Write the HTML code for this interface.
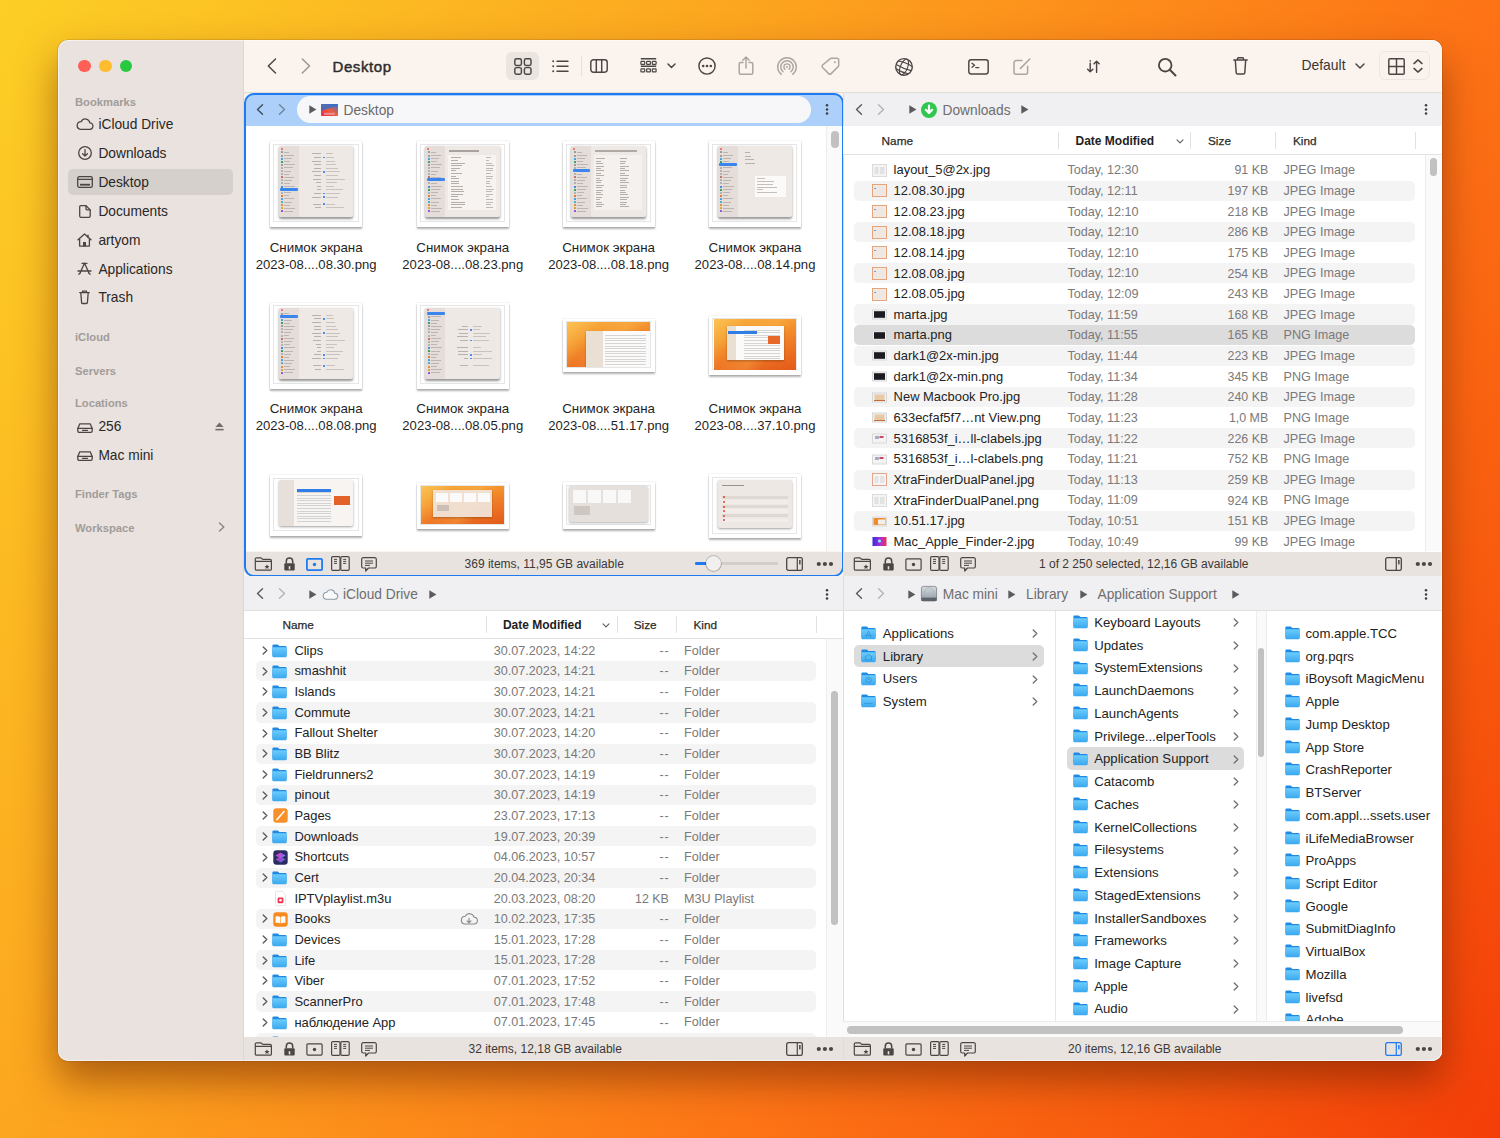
<!DOCTYPE html><html><head><meta charset="utf-8"><style>
html,body{margin:0;padding:0;width:1500px;height:1138px;overflow:hidden}
body{position:relative;font-family:"Liberation Sans", sans-serif;
background:linear-gradient(123deg,#fccf25 0%,#fca61f 33%,#fd7416 66%,#f85a0e 84%,#f43d09 100%);}
.t{position:absolute;line-height:0;white-space:nowrap;}
.r{position:absolute;}
svg{overflow:visible}
</style></head><body>
<div class="r" style="left:58px;top:40px;width:1384px;height:1021px;border-radius:10px;background:#e9e2df;box-shadow:0 20px 38px rgba(95,28,0,0.5),0 0 0 0.5px rgba(0,0,0,0.2);"></div>
<div class="r" style="left:243px;top:40px;width:1px;height:1021px;background:#dcd6d2;"></div>
<div class="r" style="left:244px;top:40px;width:1198px;height:52px;background:#faf3ee;border-top-right-radius:10px;"></div>
<div class="r" style="left:244px;top:92px;width:1198px;height:1px;background:#e2dcd7;"></div>
<div class="r" style="left:78.35px;top:59.75px;width:12.5px;height:12.5px;border-radius:50%;background:#fe5f57;"></div>
<div class="r" style="left:99.05px;top:59.75px;width:12.5px;height:12.5px;border-radius:50%;background:#febc2e;"></div>
<div class="r" style="left:119.75px;top:59.75px;width:12.5px;height:12.5px;border-radius:50%;background:#28c840;"></div>
<div class="t" style="top:101.72px;font-size:11.2px;color:#a19c99;font-weight:700;left:75.00px;">Bookmarks</div>
<div class="t" style="top:337.02px;font-size:11.2px;color:#a19c99;font-weight:700;left:75.00px;">iCloud</div>
<div class="t" style="top:370.52px;font-size:11.2px;color:#a19c99;font-weight:700;left:75.00px;">Servers</div>
<div class="t" style="top:403.42px;font-size:11.2px;color:#a19c99;font-weight:700;left:75.00px;">Locations</div>
<div class="t" style="top:494.32px;font-size:11.2px;color:#a19c99;font-weight:700;left:75.00px;">Finder Tags</div>
<div class="t" style="top:527.52px;font-size:11.2px;color:#a19c99;font-weight:700;left:75.00px;">Workspace</div>
<div class="r" style="left:68px;top:168.6px;width:165px;height:26.6px;background:#d6d0cd;border-radius:5px;"></div>
<div class="t" style="top:125.24px;font-size:13.75px;color:#2a2726;left:98.40px;">iCloud Drive</div>
<div class="t" style="top:154.24px;font-size:13.75px;color:#2a2726;left:98.40px;">Downloads</div>
<div class="t" style="top:183.04px;font-size:13.75px;color:#2a2726;left:98.40px;">Desktop</div>
<div class="t" style="top:212.24px;font-size:13.75px;color:#2a2726;left:98.40px;">Documents</div>
<div class="t" style="top:241.04px;font-size:13.75px;color:#2a2726;left:98.40px;">artyom</div>
<div class="t" style="top:269.64px;font-size:13.75px;color:#2a2726;left:98.40px;">Applications</div>
<div class="t" style="top:298.44px;font-size:13.75px;color:#2a2726;left:98.40px;">Trash</div>
<div class="t" style="top:427.04px;font-size:13.75px;color:#2a2726;left:98.40px;">256</div>
<div class="t" style="top:455.54px;font-size:13.75px;color:#2a2726;left:98.40px;">Mac mini</div>
<svg style="position:absolute;left:76px;top:118px;" width="17" height="12" viewBox="0 0 17 12" fill="none"><path d="M4.2 11.3h9.3a3.2 3.2 0 0 0 .4-6.4A4.6 4.6 0 0 0 5.2 3.6 3.9 3.9 0 0 0 4.2 11.3z" stroke="#4b4644" stroke-width="1.3" stroke-linecap="round" stroke-linejoin="round"/></svg>
<svg style="position:absolute;left:77.5px;top:146px;" width="14" height="14" viewBox="0 0 14 14" fill="none"><circle cx="7" cy="7" r="6.3" stroke="#4b4644" stroke-width="1.3" stroke-linecap="round" stroke-linejoin="round"/><path d="M7 3.6v6.4M4.6 7.7 7 10.1l2.4-2.4" stroke="#4b4644" stroke-width="1.3" stroke-linecap="round" stroke-linejoin="round"/></svg>
<svg style="position:absolute;left:76.5px;top:176px;" width="16" height="12" viewBox="0 0 16 12" fill="none"><rect x="0.7" y="0.7" width="14.6" height="10.6" rx="1.6" stroke="#4b4644" stroke-width="1.3" stroke-linecap="round" stroke-linejoin="round"/><path d="M0.7 3.3h14.6" stroke="#4b4644" stroke-width="1.3" stroke-linecap="round" stroke-linejoin="round"/><rect x="3" y="7.8" width="10" height="1.8" fill="#4b4644"/></svg>
<svg style="position:absolute;left:78.5px;top:205px;" width="12" height="13" viewBox="0 0 12 13" fill="none"><path d="M1.8 0.7h5.2l4.2 4.2v6.2a1.3 1.3 0 0 1-1.3 1.3H1.8A1.3 1.3 0 0 1 .7 11.1V1.9A1.3 1.3 0 0 1 1.8.7z" stroke="#4b4644" stroke-width="1.3" stroke-linecap="round" stroke-linejoin="round"/><path d="M7 0.7v3a1.2 1.2 0 0 0 1.2 1.2h3" stroke="#4b4644" stroke-width="1.3" stroke-linecap="round" stroke-linejoin="round"/></svg>
<svg style="position:absolute;left:77px;top:233px;" width="15" height="14" viewBox="0 0 15 14" fill="none"><path d="M1 6.8 7.5 1l6.5 5.8M2.6 5.6v7.5h9.8V5.6" stroke="#4b4644" stroke-width="1.3" stroke-linecap="round" stroke-linejoin="round"/><rect x="6" y="9" width="3" height="4.4" fill="#4b4644"/><path d="M11 2.2v2.4" stroke="#4b4644" stroke-width="1.3" stroke-linecap="round" stroke-linejoin="round"/></svg>
<svg style="position:absolute;left:77px;top:262px;" width="15" height="13" viewBox="0 0 15 13" fill="none"><path d="M7.5 1.2 2.6 11.8M7.5 1.2l4.9 10.6M1 9h13M5 1.3h5M1.8 12.2 3.4 11M13.2 12.2 11.6 11" stroke="#4b4644" stroke-width="1.3" stroke-linecap="round" stroke-linejoin="round"/></svg>
<svg style="position:absolute;left:79px;top:290px;" width="11" height="14" viewBox="0 0 11 14" fill="none"><path d="M0.7 2.6h9.6M3.5 2.6V1.2h4v1.4M1.8 2.6l.8 10a1 1 0 0 0 1 .9h3.8a1 1 0 0 0 1-.9l.8-10" stroke="#4b4644" stroke-width="1.3" stroke-linecap="round" stroke-linejoin="round"/></svg>
<svg style="position:absolute;left:76.5px;top:422.5px;" width="16" height="10" viewBox="0 0 16 10" fill="none"><path d="M2.8 0.8h10.4l2 4.6v2.6a1.3 1.3 0 0 1-1.3 1.3H2.1A1.3 1.3 0 0 1 .8 8V5.4z" stroke="#4b4644" stroke-width="1.3" stroke-linecap="round" stroke-linejoin="round"/><path d="M.8 5.4h14.4M5.5 7.3h5" stroke="#4b4644" stroke-width="1.3" stroke-linecap="round" stroke-linejoin="round"/></svg>
<svg style="position:absolute;left:76.5px;top:451px;" width="16" height="10" viewBox="0 0 16 10" fill="none"><path d="M2.8 0.8h10.4l2 4.6v2.6a1.3 1.3 0 0 1-1.3 1.3H2.1A1.3 1.3 0 0 1 .8 8V5.4z" stroke="#4b4644" stroke-width="1.3" stroke-linecap="round" stroke-linejoin="round"/><path d="M.8 5.4h14.4M5.5 7.3h5" stroke="#4b4644" stroke-width="1.3" stroke-linecap="round" stroke-linejoin="round"/></svg>
<svg style="position:absolute;left:214.5px;top:421.5px;opacity:.75" width="9" height="9" viewBox="0 0 9 9" fill="none"><path d="M4.5 0.5 8.6 5H0.4z" fill="#4b4644"/><rect x="0.4" y="6.8" width="8.2" height="1.6" fill="#4b4644"/></svg>
<svg style="position:absolute;left:217.5px;top:522px;" width="7" height="10" viewBox="0 0 7 10" fill="none"><path d="M1.5 1 5.8 5 1.5 9" stroke="#8a8583" stroke-width="1.4" stroke-linecap="round" stroke-linejoin="round"/></svg>
<svg style="position:absolute;left:267px;top:58px;" width="10" height="16" viewBox="0 0 10 16" fill="none"><path d="M8.5 1 1.3 8l7.2 7" stroke="#4b4644" stroke-width="1.45" stroke-linecap="round" stroke-linejoin="round"/></svg>
<svg style="position:absolute;left:301px;top:58px;" width="10" height="16" viewBox="0 0 10 16" fill="none"><path d="M1.3 1l7.2 7-7.2 7" stroke="#9f9894" stroke-width="1.6" stroke-linecap="round" stroke-linejoin="round"/></svg>
<div class="t" style="top:67.10px;font-size:15px;color:#2f2b29;left:332.50px;-webkit-text-stroke:.45px #2f2b29;letter-spacing:.6px;">Desktop</div>
<div class="r" style="left:505.7px;top:51.7px;width:33.5px;height:28.8px;background:#ebe5e1;border-radius:6px;"></div>
<svg style="position:absolute;left:513.5px;top:57.5px;" width="18" height="17" viewBox="0 0 18 17" fill="none"><rect x="0.8" y="0.8" width="6.6" height="6.6" rx="1.6" stroke="#4b4644" stroke-width="1.45" stroke-linecap="round" stroke-linejoin="round"/><rect x="10.4" y="0.8" width="6.6" height="6.6" rx="1.6" stroke="#4b4644" stroke-width="1.45" stroke-linecap="round" stroke-linejoin="round"/><rect x="0.8" y="9.6" width="6.6" height="6.6" rx="1.6" stroke="#4b4644" stroke-width="1.45" stroke-linecap="round" stroke-linejoin="round"/><rect x="10.4" y="9.6" width="6.6" height="6.6" rx="1.6" stroke="#4b4644" stroke-width="1.45" stroke-linecap="round" stroke-linejoin="round"/></svg>
<svg style="position:absolute;left:551.5px;top:59.5px;" width="17" height="13" viewBox="0 0 17 13" fill="none"><circle cx="1.2" cy="1.3" r="1" fill="#4b4644"/><circle cx="1.2" cy="6.3" r="1" fill="#4b4644"/><circle cx="1.2" cy="11.3" r="1" fill="#4b4644"/><path d="M5 1.3h11M5 6.3h11M5 11.3h11" stroke="#4b4644" stroke-width="1.45" stroke-linecap="round" stroke-linejoin="round"/></svg>
<div class="r" style="left:581px;top:56px;width:1px;height:20px;background:#e6e0dc;"></div>
<svg style="position:absolute;left:590px;top:59px;" width="18" height="14" viewBox="0 0 18 14" fill="none"><rect x="0.8" y="0.8" width="16.4" height="12.4" rx="2.6" stroke="#4b4644" stroke-width="1.45" stroke-linecap="round" stroke-linejoin="round"/><path d="M6.3 0.8v12.4M11.7 0.8v12.4" stroke="#4b4644" stroke-width="1.45" stroke-linecap="round" stroke-linejoin="round"/></svg>
<svg style="position:absolute;left:639.5px;top:57.5px;" width="17" height="17" viewBox="0 0 17 17" fill="none"><path d="M0.8 0.8h15.4M0.8 8.3h15.4" stroke="#4b4644" stroke-width="1.5"/><rect x="0.9" y="3.3" width="3.8" height="3" rx=".6" stroke="#4b4644" stroke-width="1.2"/><rect x="6.6" y="3.3" width="3.8" height="3" rx=".6" stroke="#4b4644" stroke-width="1.2"/><rect x="12.3" y="3.3" width="3.8" height="3" rx=".6" stroke="#4b4644" stroke-width="1.2"/><rect x="0.9" y="10.8" width="3.8" height="3" rx=".6" stroke="#4b4644" stroke-width="1.2"/><rect x="6.6" y="10.8" width="3.8" height="3" rx=".6" stroke="#4b4644" stroke-width="1.2"/><rect x="12.3" y="10.8" width="3.8" height="3" rx=".6" stroke="#4b4644" stroke-width="1.2"/></svg>
<svg style="position:absolute;left:666.5px;top:63px;" width="9" height="6" viewBox="0 0 9 6" fill="none"><path d="M1 1l3.5 3.6L8 1" stroke="#4b4644" stroke-width="1.45" stroke-linecap="round" stroke-linejoin="round"/></svg>
<svg style="position:absolute;left:698.2px;top:57.3px;" width="18" height="18" viewBox="0 0 18 18" fill="none"><circle cx="9" cy="9" r="8.1" stroke="#4b4644" stroke-width="1.45" stroke-linecap="round" stroke-linejoin="round"/><circle cx="5.2" cy="9" r="1.3" fill="#4b4644"/><circle cx="9" cy="9" r="1.3" fill="#4b4644"/><circle cx="12.8" cy="9" r="1.3" fill="#4b4644"/></svg>
<svg style="position:absolute;left:738px;top:56px;" width="16" height="19" viewBox="0 0 16 19" fill="none"><path d="M5 6.5H2.7a1.5 1.5 0 0 0-1.5 1.5v8.8a1.5 1.5 0 0 0 1.5 1.5h10.6a1.5 1.5 0 0 0 1.5-1.5V8a1.5 1.5 0 0 0-1.5-1.5H11M8 12V1.2M4.8 4.2 8 1l3.2 3.2" stroke="#aba5a1" stroke-width="1.5" stroke-linecap="round" stroke-linejoin="round"/></svg>
<svg style="position:absolute;left:776.5px;top:56.5px;" width="20" height="20" viewBox="0 0 20 20" fill="none"><path d="M4.27 17.33A9.3 9.3 0 1 1 15.73 17.33M6.01 14.75A6.2 6.2 0 1 1 13.99 14.75M7.93 12.3A3.1 3.1 0 1 1 12.07 12.3" stroke="#aba5a1" stroke-width="1.4" stroke-linecap="round"/><circle cx="10" cy="10" r="1" fill="#aba5a1"/></svg>
<svg style="position:absolute;left:820.5px;top:57px;" width="19" height="18" viewBox="0 0 19 18" fill="none"><path d="M10.5 1.2h5.4a1.8 1.8 0 0 1 1.8 1.8v5.4a1.8 1.8 0 0 1-.5 1.2l-7 7a1.8 1.8 0 0 1-2.5 0L1.6 10.5a1.8 1.8 0 0 1 0-2.5l7.7-6.3a1.8 1.8 0 0 1 1.2-.5z" stroke="#aba5a1" stroke-width="1.5" stroke-linecap="round" stroke-linejoin="round"/><circle cx="13.8" cy="5.2" r="1" fill="#aba5a1"/></svg>
<svg style="position:absolute;left:895.3px;top:57.6px;" width="18" height="18" viewBox="0 0 18 18" fill="none"><circle cx="9" cy="8.9" r="8.3" stroke="#4b4644" stroke-width="1.4"/><g transform="rotate(22 9 9)"><ellipse cx="9" cy="9" rx="3.6" ry="8.3" stroke="#4b4644" stroke-width="1.1"/><path d="M1.6 5.6Q9 3.8 16.4 5.6M.9 9.6Q9 11 17.1 9.6M2.4 13.6Q9 15.2 15.6 13.6" stroke="#4b4644" stroke-width="1.1"/></g></svg>
<svg style="position:absolute;left:968px;top:59px;" width="21" height="16" viewBox="0 0 21 16" fill="none"><rect x="0.8" y="0.8" width="19.4" height="14.2" rx="2.4" stroke="#4b4644" stroke-width="1.45" stroke-linecap="round" stroke-linejoin="round"/><path d="M4 4.2l2.6 2-2.6 2M7.8 8.6h3" stroke="#4b4644" stroke-width="1.3" stroke-linecap="round" stroke-linejoin="round"/></svg>
<svg style="position:absolute;left:1013.3px;top:57.5px;" width="18" height="17" viewBox="0 0 18 17" fill="none"><path d="M9 2.6H3a2 2 0 0 0-2 2v9.6a2 2 0 0 0 2 2h9.6a2 2 0 0 0 2-2V8.3M7.5 10.4 16.8 1" stroke="#aba5a1" stroke-width="1.5" stroke-linecap="round" stroke-linejoin="round"/></svg>
<svg style="position:absolute;left:1086.5px;top:59.5px;" width="16" height="13" viewBox="0 0 16 13" fill="none"><path d="M3.2 3.2v8.6M.6 9.2l2.6 2.6 2.6-2.6M9.6 11.6V1.2M7 3.8 9.6 1.2l2.6 2.6" stroke="#4b4644" stroke-width="1.45" stroke-linecap="round" stroke-linejoin="round"/><circle cx="3.2" cy=".9" r=".8" fill="#4b4644"/><circle cx="9.6" cy="12.4" r=".7" fill="#4b4644"/></svg>
<svg style="position:absolute;left:1158px;top:57.7px;" width="19" height="19" viewBox="0 0 19 19" fill="none"><circle cx="7.2" cy="7.2" r="6.3" stroke="#4b4644" stroke-width="1.8"/><path d="M11.8 11.8l5.7 5.7" stroke="#4b4644" stroke-width="2" stroke-linecap="round"/></svg>
<svg style="position:absolute;left:1233.3px;top:57.3px;" width="15" height="18" viewBox="0 0 15 18" fill="none"><path d="M.8 3h13.4M4.5 3V1.6a.8.8 0 0 1 .8-.8h4.4a.8.8 0 0 1 .8.8V3M2.3 3l.9 12.6a1.4 1.4 0 0 0 1.4 1.3h5.8a1.4 1.4 0 0 0 1.4-1.3L12.7 3" stroke="#4b4644" stroke-width="1.45" stroke-linecap="round" stroke-linejoin="round"/></svg>
<div class="t" style="top:65.48px;font-size:13.9px;color:#3a3634;left:1301.50px;">Default</div>
<svg style="position:absolute;left:1354.8px;top:62.5px;" width="10" height="6" viewBox="0 0 10 6" fill="none"><path d="M1 1l4 4 4-4" stroke="#4b4644" stroke-width="1.45" stroke-linecap="round" stroke-linejoin="round"/></svg>
<div class="r" style="left:1378.6px;top:51.3px;width:51px;height:29px;border:1px solid #ede7e3;border-radius:6px;box-sizing:border-box;background:#f9f2ed;"></div>
<svg style="position:absolute;left:1388.3px;top:57.6px;" width="17" height="17" viewBox="0 0 17 17" fill="none"><rect x="0.8" y="0.8" width="15.4" height="15.4" rx="1" stroke="#4b4644" stroke-width="1.45" stroke-linecap="round" stroke-linejoin="round"/><path d="M8.5 .8v15.4M.8 8.5h15.4" stroke="#4b4644" stroke-width="1.45" stroke-linecap="round" stroke-linejoin="round"/></svg>
<svg style="position:absolute;left:1412.7px;top:59.3px;" width="10" height="14" viewBox="0 0 10 14" fill="none"><path d="M1 4.6 5 .9l4 3.7M1 9.4l4 3.7 4-3.7" stroke="#4b4644" stroke-width="1.45" stroke-linecap="round" stroke-linejoin="round"/></svg>
<div class="r" style="left:244px;top:93px;width:599px;height:483px;background:#faf3ee;"></div>
<div class="r" style="left:245px;top:110px;width:598px;height:441px;background:#fff;"></div>
<div class="r" style="left:843px;top:93px;width:599px;height:483px;background:#fff;"></div>
<div class="r" style="left:244px;top:576px;width:599px;height:485px;background:#fff;"></div>
<div class="r" style="left:843px;top:576px;width:599px;height:485px;background:#fff;border-bottom-right-radius:10px;"></div>
<div class="r" style="left:245px;top:93px;width:598px;height:33px;background:#acd0f9;border-top-left-radius:9px;border-top-right-radius:9px;"></div>
<svg style="position:absolute;left:256px;top:104px;" width="8" height="11" viewBox="0 0 8 11" fill="none"><path d="M6.5 .8 1.5 5.5l5 4.7" stroke="#3f4b58" stroke-width="1.4" stroke-linecap="round" stroke-linejoin="round"/></svg>
<svg style="position:absolute;left:278px;top:104px;" width="8" height="11" viewBox="0 0 8 11" fill="none"><path d="M1.5 .8l5 4.7-5 4.7" stroke="#6f8499" stroke-width="1.4" stroke-linecap="round" stroke-linejoin="round"/></svg>
<div class="r" style="left:296.5px;top:96.4px;width:514.5px;height:26.6px;background:#f7f7f9;border-radius:13.3px;"></div>
<svg style="position:absolute;left:309.0px;top:105.4px;" width="8" height="9" viewBox="0 0 8 9" fill="none"><path d="M0.3 0.2 7.4 4.5 .3 8.8z" fill="#5b5b5d"/></svg>
<svg style="position:absolute;left:320.5px;top:104px;" width="17" height="12" viewBox="0 0 17 12" fill="none"><defs><linearGradient id="dw" x1="0" y1="1" x2="1" y2="0"><stop offset="0" stop-color="#e8264a"/><stop offset=".5" stop-color="#ef5b39"/><stop offset="1" stop-color="#2f78d8"/></linearGradient></defs><rect x="0" y="0" width="17" height="12" rx="1" fill="url(#dw)"/><path d="M0 7 17 1.5V0H0z" fill="#2d6fce" opacity=".8"/><rect x="3" y="8.8" width="11" height="2" fill="#e8a0b0" opacity=".8"/></svg>
<div class="t" style="top:111.44px;font-size:13.75px;color:#6b6969;left:343.50px;">Desktop</div>
<svg style="position:absolute;left:824px;top:103px;" width="6" height="14" viewBox="0 0 6 14" fill="none"><circle cx="3" cy="2.20" r="1.25" fill="#3d3d3f"/><circle cx="3" cy="6.40" r="1.25" fill="#3d3d3f"/><circle cx="3" cy="10.60" r="1.25" fill="#3d3d3f"/></svg>
<div class="r" style="left:826px;top:126px;width:17px;height:425px;background:#fafafa;border-left:1px solid #ececec;box-sizing:border-box;"></div>
<div class="r" style="left:831px;top:130.5px;width:7.7px;height:17.2px;background:#c1c1c1;border-radius:4px;"></div>
<div class="r" style="left:270.2px;top:141.2px;width:92.0px;height:85.7px;background:#fff;box-shadow:0 1.5px 1.8px rgba(0,0,0,.3),0 0 0 .6px rgba(0,0,0,.07);">
<div class="r" style="left:3.2px;top:2.6px;right:3.6px;bottom:4.4px;border:1px solid #e6e6e6;"></div>
<div class="r" style="left:8.5px;top:5.3px;width:74.5px;height:70.7px;background:#efe9e5;border-radius:2px;box-shadow:0 1.2px 2.5px rgba(0,0,0,.42);overflow:hidden;"><div class="r" style="left:0;top:0;width:27%;height:100%;background:#e4ddd9;"></div><div class="r" style="left:2px;top:1.5px;width:2px;height:2px;border-radius:50%;background:#f05a50;"></div><div class="r" style="left:2.5px;top:5.0px;width:2px;height:2px;border-radius:.5px;background:#9a9a9a;"></div><div class="r" style="left:5.5px;top:5.5px;width:5px;height:1px;background:#bdb5b0;"></div><div class="r" style="left:2.5px;top:8.1px;width:2px;height:2px;border-radius:.5px;background:#9a9a9a;"></div><div class="r" style="left:5.5px;top:8.6px;width:10px;height:1px;background:#bdb5b0;"></div><div class="r" style="left:2.5px;top:11.2px;width:2px;height:2px;border-radius:.5px;background:#3aa3e0;"></div><div class="r" style="left:5.5px;top:11.7px;width:8px;height:1px;background:#bdb5b0;"></div><div class="r" style="left:2.5px;top:14.3px;width:2px;height:2px;border-radius:.5px;background:#2aa36a;"></div><div class="r" style="left:5.5px;top:14.8px;width:6px;height:1px;background:#bdb5b0;"></div><div class="r" style="left:2.5px;top:17.4px;width:2px;height:2px;border-radius:.5px;background:#9a9a9a;"></div><div class="r" style="left:5.5px;top:17.9px;width:11px;height:1px;background:#bdb5b0;"></div><div class="r" style="left:2.5px;top:20.5px;width:2px;height:2px;border-radius:.5px;background:#b0b0b0;"></div><div class="r" style="left:5.5px;top:21.0px;width:9px;height:1px;background:#bdb5b0;"></div><div class="r" style="left:2.5px;top:23.6px;width:2px;height:2px;border-radius:.5px;background:#b0b0b0;"></div><div class="r" style="left:5.5px;top:24.1px;width:7px;height:1px;background:#bdb5b0;"></div><div class="r" style="left:2.5px;top:26.7px;width:2px;height:2px;border-radius:.5px;background:#b0b0b0;"></div><div class="r" style="left:5.5px;top:27.2px;width:5px;height:1px;background:#bdb5b0;"></div><div class="r" style="left:2.5px;top:29.8px;width:2px;height:2px;border-radius:.5px;background:#c07060;"></div><div class="r" style="left:5.5px;top:30.3px;width:10px;height:1px;background:#bdb5b0;"></div><div class="r" style="left:2.5px;top:32.9px;width:2px;height:2px;border-radius:.5px;background:#b0b0b0;"></div><div class="r" style="left:5.5px;top:33.4px;width:8px;height:1px;background:#bdb5b0;"></div><div class="r" style="left:2.5px;top:36.0px;width:2px;height:2px;border-radius:.5px;background:#b0b0b0;"></div><div class="r" style="left:5.5px;top:36.5px;width:6px;height:1px;background:#bdb5b0;"></div><div class="r" style="left:2.5px;top:39.1px;width:2px;height:2px;border-radius:.5px;background:#3a8ae0;"></div><div class="r" style="left:5.5px;top:39.6px;width:11px;height:1px;background:#bdb5b0;"></div><div class="r" style="left:2.5px;top:45.3px;width:2px;height:2px;border-radius:.5px;background:#b0b0b0;"></div><div class="r" style="left:5.5px;top:45.8px;width:7px;height:1px;background:#bdb5b0;"></div><div class="r" style="left:2.5px;top:48.4px;width:2px;height:2px;border-radius:.5px;background:#e07a30;"></div><div class="r" style="left:5.5px;top:48.9px;width:5px;height:1px;background:#bdb5b0;"></div><div class="r" style="left:2.5px;top:51.5px;width:2px;height:2px;border-radius:.5px;background:#40a0e0;"></div><div class="r" style="left:5.5px;top:52.0px;width:10px;height:1px;background:#bdb5b0;"></div><div class="r" style="left:2.5px;top:54.6px;width:2px;height:2px;border-radius:.5px;background:#40b0d0;"></div><div class="r" style="left:5.5px;top:55.1px;width:8px;height:1px;background:#bdb5b0;"></div><div class="r" style="left:2.5px;top:57.7px;width:2px;height:2px;border-radius:.5px;background:#e09030;"></div><div class="r" style="left:5.5px;top:58.2px;width:6px;height:1px;background:#bdb5b0;"></div><div class="r" style="left:2.5px;top:60.8px;width:2px;height:2px;border-radius:.5px;background:#e0a030;"></div><div class="r" style="left:5.5px;top:61.3px;width:11px;height:1px;background:#bdb5b0;"></div><div class="r" style="left:2.5px;top:63.9px;width:2px;height:2px;border-radius:.5px;background:#9050e0;"></div><div class="r" style="left:5.5px;top:64.4px;width:9px;height:1px;background:#bdb5b0;"></div><div class="r" style="left:1.5px;top:41.2px;width:17.9px;height:3px;border-radius:1px;background:#3a86ee;"></div><div class="r" style="left:32.9px;top:7.0px;width:9.6px;height:1px;background:#b8b1ac;"></div><div class="r" style="left:47.6px;top:7.0px;width:6.8px;height:1px;background:#c9c2bd;"></div><div class="r" style="left:35.7px;top:10.6px;width:6.9px;height:1px;background:#b8b1ac;"></div><div class="r" style="left:44.6px;top:10.1px;width:1.8px;height:1.8px;background:#4a8ff0;"></div><div class="r" style="left:47.6px;top:10.6px;width:8.2px;height:1px;background:#c9c2bd;"></div><div class="r" style="left:33.3px;top:14.2px;width:9.2px;height:1px;background:#b8b1ac;"></div><div class="r" style="left:47.6px;top:14.2px;width:8.8px;height:1px;background:#c9c2bd;"></div><div class="r" style="left:35.7px;top:17.8px;width:6.8px;height:1px;background:#b8b1ac;"></div><div class="r" style="left:47.6px;top:17.8px;width:9.8px;height:1px;background:#c9c2bd;"></div><div class="r" style="left:35.4px;top:21.4px;width:7.1px;height:1px;background:#b8b1ac;"></div><div class="r" style="left:47.6px;top:21.4px;width:11.3px;height:1px;background:#c9c2bd;"></div><div class="r" style="left:33.5px;top:25.0px;width:9.1px;height:1px;background:#b8b1ac;"></div><div class="r" style="left:44.6px;top:24.5px;width:1.8px;height:1.8px;background:#4a8ff0;"></div><div class="r" style="left:47.6px;top:25.0px;width:14.1px;height:1px;background:#c9c2bd;"></div><div class="r" style="left:35.8px;top:28.6px;width:6.7px;height:1px;background:#b8b1ac;"></div><div class="r" style="left:47.6px;top:28.6px;width:11.9px;height:1px;background:#c9c2bd;"></div><div class="r" style="left:34.1px;top:32.2px;width:8.4px;height:1px;background:#b8b1ac;"></div><div class="r" style="left:47.6px;top:32.2px;width:18.4px;height:1px;background:#c9c2bd;"></div><div class="r" style="left:37.0px;top:35.8px;width:5.6px;height:1px;background:#b8b1ac;"></div><div class="r" style="left:47.6px;top:35.8px;width:10.4px;height:1px;background:#c9c2bd;"></div><div class="r" style="left:38.5px;top:39.4px;width:4.1px;height:1px;background:#b8b1ac;"></div><div class="r" style="left:47.6px;top:39.4px;width:8.0px;height:1px;background:#c9c2bd;"></div><div class="r" style="left:38.1px;top:43.0px;width:4.4px;height:1px;background:#b8b1ac;"></div><div class="r" style="left:47.6px;top:43.0px;width:16.9px;height:1px;background:#c9c2bd;"></div><div class="r" style="left:35.2px;top:46.6px;width:7.4px;height:1px;background:#b8b1ac;"></div><div class="r" style="left:44.6px;top:46.1px;width:1.8px;height:1.8px;background:#4a8ff0;"></div><div class="r" style="left:47.6px;top:46.6px;width:13.5px;height:1px;background:#c9c2bd;"></div><div class="r" style="left:32.9px;top:50.2px;width:9.7px;height:1px;background:#b8b1ac;"></div><div class="r" style="left:44.6px;top:49.7px;width:1.8px;height:1.8px;background:#4a8ff0;"></div><div class="r" style="left:47.6px;top:50.2px;width:11.4px;height:1px;background:#c9c2bd;"></div><div class="r" style="left:34.2px;top:57.4px;width:8.4px;height:1px;background:#b8b1ac;"></div><div class="r" style="left:44.6px;top:56.9px;width:1.8px;height:1.8px;background:#4a8ff0;"></div><div class="r" style="left:47.6px;top:57.4px;width:9.0px;height:1px;background:#c9c2bd;"></div><div class="r" style="left:36.6px;top:61.0px;width:6.0px;height:1px;background:#b8b1ac;"></div><div class="r" style="left:47.6px;top:61.0px;width:17.5px;height:1px;background:#c9c2bd;"></div></div>
</div>
<div class="r" style="left:416.8px;top:141.2px;width:92.0px;height:85.7px;background:#fff;box-shadow:0 1.5px 1.8px rgba(0,0,0,.3),0 0 0 .6px rgba(0,0,0,.07);">
<div class="r" style="left:3.2px;top:2.6px;right:3.6px;bottom:4.4px;border:1px solid #e6e6e6;"></div>
<div class="r" style="left:8.5px;top:5.3px;width:74.5px;height:70.7px;background:#efe9e5;border-radius:2px;box-shadow:0 1.2px 2.5px rgba(0,0,0,.42);overflow:hidden;"><div class="r" style="left:0;top:0;width:27%;height:100%;background:#e4ddd9;"></div><div class="r" style="left:2px;top:1.5px;width:2px;height:2px;border-radius:50%;background:#f05a50;"></div><div class="r" style="left:2.5px;top:5.0px;width:2px;height:2px;border-radius:.5px;background:#9a9a9a;"></div><div class="r" style="left:5.5px;top:5.5px;width:5px;height:1px;background:#bdb5b0;"></div><div class="r" style="left:2.5px;top:8.1px;width:2px;height:2px;border-radius:.5px;background:#9a9a9a;"></div><div class="r" style="left:5.5px;top:8.6px;width:10px;height:1px;background:#bdb5b0;"></div><div class="r" style="left:2.5px;top:11.2px;width:2px;height:2px;border-radius:.5px;background:#3aa3e0;"></div><div class="r" style="left:5.5px;top:11.7px;width:8px;height:1px;background:#bdb5b0;"></div><div class="r" style="left:2.5px;top:14.3px;width:2px;height:2px;border-radius:.5px;background:#2aa36a;"></div><div class="r" style="left:5.5px;top:14.8px;width:6px;height:1px;background:#bdb5b0;"></div><div class="r" style="left:2.5px;top:17.4px;width:2px;height:2px;border-radius:.5px;background:#9a9a9a;"></div><div class="r" style="left:5.5px;top:17.9px;width:11px;height:1px;background:#bdb5b0;"></div><div class="r" style="left:2.5px;top:20.5px;width:2px;height:2px;border-radius:.5px;background:#b0b0b0;"></div><div class="r" style="left:5.5px;top:21.0px;width:9px;height:1px;background:#bdb5b0;"></div><div class="r" style="left:2.5px;top:23.6px;width:2px;height:2px;border-radius:.5px;background:#b0b0b0;"></div><div class="r" style="left:5.5px;top:24.1px;width:7px;height:1px;background:#bdb5b0;"></div><div class="r" style="left:2.5px;top:26.7px;width:2px;height:2px;border-radius:.5px;background:#b0b0b0;"></div><div class="r" style="left:5.5px;top:27.2px;width:5px;height:1px;background:#bdb5b0;"></div><div class="r" style="left:2.5px;top:29.8px;width:2px;height:2px;border-radius:.5px;background:#c07060;"></div><div class="r" style="left:5.5px;top:30.3px;width:10px;height:1px;background:#bdb5b0;"></div><div class="r" style="left:2.5px;top:36.0px;width:2px;height:2px;border-radius:.5px;background:#b0b0b0;"></div><div class="r" style="left:5.5px;top:36.5px;width:6px;height:1px;background:#bdb5b0;"></div><div class="r" style="left:2.5px;top:39.1px;width:2px;height:2px;border-radius:.5px;background:#3a8ae0;"></div><div class="r" style="left:5.5px;top:39.6px;width:11px;height:1px;background:#bdb5b0;"></div><div class="r" style="left:2.5px;top:42.2px;width:2px;height:2px;border-radius:.5px;background:#30a050;"></div><div class="r" style="left:5.5px;top:42.7px;width:9px;height:1px;background:#bdb5b0;"></div><div class="r" style="left:2.5px;top:45.3px;width:2px;height:2px;border-radius:.5px;background:#b0b0b0;"></div><div class="r" style="left:5.5px;top:45.8px;width:7px;height:1px;background:#bdb5b0;"></div><div class="r" style="left:2.5px;top:48.4px;width:2px;height:2px;border-radius:.5px;background:#e07a30;"></div><div class="r" style="left:5.5px;top:48.9px;width:5px;height:1px;background:#bdb5b0;"></div><div class="r" style="left:2.5px;top:51.5px;width:2px;height:2px;border-radius:.5px;background:#40a0e0;"></div><div class="r" style="left:5.5px;top:52.0px;width:10px;height:1px;background:#bdb5b0;"></div><div class="r" style="left:2.5px;top:54.6px;width:2px;height:2px;border-radius:.5px;background:#40b0d0;"></div><div class="r" style="left:5.5px;top:55.1px;width:8px;height:1px;background:#bdb5b0;"></div><div class="r" style="left:2.5px;top:57.7px;width:2px;height:2px;border-radius:.5px;background:#e09030;"></div><div class="r" style="left:5.5px;top:58.2px;width:6px;height:1px;background:#bdb5b0;"></div><div class="r" style="left:2.5px;top:60.8px;width:2px;height:2px;border-radius:.5px;background:#e0a030;"></div><div class="r" style="left:5.5px;top:61.3px;width:11px;height:1px;background:#bdb5b0;"></div><div class="r" style="left:2.5px;top:63.9px;width:2px;height:2px;border-radius:.5px;background:#9050e0;"></div><div class="r" style="left:5.5px;top:64.4px;width:9px;height:1px;background:#bdb5b0;"></div><div class="r" style="left:1.5px;top:31.9px;width:17.9px;height:3px;border-radius:1px;background:#3a86ee;"></div><div class="r" style="left:23.6px;top:4px;width:29.9px;height:1.4px;background:#a9a29e;"></div><div class="r" style="left:22.6px;top:9px;width:47.9px;height:54.7px;background:#f6f3f1;border-radius:1px;"></div><div class="r" style="left:25.6px;top:11.0px;width:10.4px;height:.9px;background:#b5aea9;"></div><div class="r" style="left:60.5px;top:11.0px;width:5.5px;height:.9px;background:#c0b9b4;"></div><div class="r" style="left:25.6px;top:13.6px;width:7.3px;height:.9px;background:#b5aea9;"></div><div class="r" style="left:60.5px;top:13.6px;width:3.7px;height:.9px;background:#c0b9b4;"></div><div class="r" style="left:25.6px;top:16.2px;width:14.0px;height:.9px;background:#b5aea9;"></div><div class="r" style="left:60.5px;top:16.2px;width:6.6px;height:.9px;background:#c0b9b4;"></div><div class="r" style="left:25.6px;top:18.8px;width:11.5px;height:.9px;background:#b5aea9;"></div><div class="r" style="left:60.5px;top:18.8px;width:7.9px;height:.9px;background:#c0b9b4;"></div><div class="r" style="left:25.6px;top:21.4px;width:8.7px;height:.9px;background:#b5aea9;"></div><div class="r" style="left:60.5px;top:21.4px;width:7.5px;height:.9px;background:#c0b9b4;"></div><div class="r" style="left:25.6px;top:24.0px;width:5.4px;height:.9px;background:#b5aea9;"></div><div class="r" style="left:60.5px;top:24.0px;width:7.2px;height:.9px;background:#c0b9b4;"></div><div class="r" style="left:25.6px;top:26.6px;width:11.2px;height:.9px;background:#b5aea9;"></div><div class="r" style="left:60.5px;top:26.6px;width:5.7px;height:.9px;background:#c0b9b4;"></div><div class="r" style="left:25.6px;top:29.2px;width:5.6px;height:.9px;background:#b5aea9;"></div><div class="r" style="left:60.5px;top:29.2px;width:7.0px;height:.9px;background:#c0b9b4;"></div><div class="r" style="left:25.6px;top:31.8px;width:7.9px;height:.9px;background:#b5aea9;"></div><div class="r" style="left:60.5px;top:31.8px;width:6.2px;height:.9px;background:#c0b9b4;"></div><div class="r" style="left:25.6px;top:34.4px;width:8.4px;height:.9px;background:#b5aea9;"></div><div class="r" style="left:60.5px;top:34.4px;width:3.9px;height:.9px;background:#c0b9b4;"></div><div class="r" style="left:25.6px;top:37.0px;width:7.8px;height:.9px;background:#b5aea9;"></div><div class="r" style="left:60.5px;top:37.0px;width:4.7px;height:.9px;background:#c0b9b4;"></div><div class="r" style="left:25.6px;top:39.6px;width:11.7px;height:.9px;background:#b5aea9;"></div><div class="r" style="left:60.5px;top:39.6px;width:6.3px;height:.9px;background:#c0b9b4;"></div><div class="r" style="left:25.6px;top:42.2px;width:12.6px;height:.9px;background:#b5aea9;"></div><div class="r" style="left:60.5px;top:42.2px;width:7.8px;height:.9px;background:#c0b9b4;"></div><div class="r" style="left:25.6px;top:44.8px;width:12.7px;height:.9px;background:#b5aea9;"></div><div class="r" style="left:60.5px;top:44.8px;width:5.8px;height:.9px;background:#c0b9b4;"></div><div class="r" style="left:25.6px;top:47.4px;width:12.2px;height:.9px;background:#b5aea9;"></div><div class="r" style="left:60.5px;top:47.4px;width:7.0px;height:.9px;background:#c0b9b4;"></div><div class="r" style="left:25.6px;top:50.0px;width:7.4px;height:.9px;background:#b5aea9;"></div><div class="r" style="left:60.5px;top:50.0px;width:3.6px;height:.9px;background:#c0b9b4;"></div><div class="r" style="left:25.6px;top:52.6px;width:8.0px;height:.9px;background:#b5aea9;"></div><div class="r" style="left:60.5px;top:52.6px;width:6.9px;height:.9px;background:#c0b9b4;"></div><div class="r" style="left:25.6px;top:55.2px;width:13.8px;height:.9px;background:#b5aea9;"></div><div class="r" style="left:60.5px;top:55.2px;width:6.8px;height:.9px;background:#c0b9b4;"></div><div class="r" style="left:25.6px;top:57.8px;width:13.9px;height:.9px;background:#b5aea9;"></div><div class="r" style="left:60.5px;top:57.8px;width:4.9px;height:.9px;background:#c0b9b4;"></div><div class="r" style="left:25.6px;top:60.4px;width:10.8px;height:.9px;background:#b5aea9;"></div><div class="r" style="left:60.5px;top:60.4px;width:7.4px;height:.9px;background:#c0b9b4;"></div></div>
</div>
<div class="r" style="left:562.6px;top:141.2px;width:92.0px;height:85.7px;background:#fff;box-shadow:0 1.5px 1.8px rgba(0,0,0,.3),0 0 0 .6px rgba(0,0,0,.07);">
<div class="r" style="left:3.2px;top:2.6px;right:3.6px;bottom:4.4px;border:1px solid #e6e6e6;"></div>
<div class="r" style="left:8.5px;top:5.3px;width:74.5px;height:70.7px;background:#efe9e5;border-radius:2px;box-shadow:0 1.2px 2.5px rgba(0,0,0,.42);overflow:hidden;"><div class="r" style="left:0;top:0;width:27%;height:100%;background:#e4ddd9;"></div><div class="r" style="left:2px;top:1.5px;width:2px;height:2px;border-radius:50%;background:#f05a50;"></div><div class="r" style="left:2.5px;top:5.0px;width:2px;height:2px;border-radius:.5px;background:#9a9a9a;"></div><div class="r" style="left:5.5px;top:5.5px;width:5px;height:1px;background:#bdb5b0;"></div><div class="r" style="left:2.5px;top:8.1px;width:2px;height:2px;border-radius:.5px;background:#9a9a9a;"></div><div class="r" style="left:5.5px;top:8.6px;width:10px;height:1px;background:#bdb5b0;"></div><div class="r" style="left:2.5px;top:11.2px;width:2px;height:2px;border-radius:.5px;background:#3aa3e0;"></div><div class="r" style="left:5.5px;top:11.7px;width:8px;height:1px;background:#bdb5b0;"></div><div class="r" style="left:2.5px;top:14.3px;width:2px;height:2px;border-radius:.5px;background:#2aa36a;"></div><div class="r" style="left:5.5px;top:14.8px;width:6px;height:1px;background:#bdb5b0;"></div><div class="r" style="left:2.5px;top:17.4px;width:2px;height:2px;border-radius:.5px;background:#9a9a9a;"></div><div class="r" style="left:5.5px;top:17.9px;width:11px;height:1px;background:#bdb5b0;"></div><div class="r" style="left:2.5px;top:20.5px;width:2px;height:2px;border-radius:.5px;background:#b0b0b0;"></div><div class="r" style="left:5.5px;top:21.0px;width:9px;height:1px;background:#bdb5b0;"></div><div class="r" style="left:2.5px;top:26.7px;width:2px;height:2px;border-radius:.5px;background:#b0b0b0;"></div><div class="r" style="left:5.5px;top:27.2px;width:5px;height:1px;background:#bdb5b0;"></div><div class="r" style="left:2.5px;top:29.8px;width:2px;height:2px;border-radius:.5px;background:#c07060;"></div><div class="r" style="left:5.5px;top:30.3px;width:10px;height:1px;background:#bdb5b0;"></div><div class="r" style="left:2.5px;top:32.9px;width:2px;height:2px;border-radius:.5px;background:#b0b0b0;"></div><div class="r" style="left:5.5px;top:33.4px;width:8px;height:1px;background:#bdb5b0;"></div><div class="r" style="left:2.5px;top:36.0px;width:2px;height:2px;border-radius:.5px;background:#b0b0b0;"></div><div class="r" style="left:5.5px;top:36.5px;width:6px;height:1px;background:#bdb5b0;"></div><div class="r" style="left:2.5px;top:39.1px;width:2px;height:2px;border-radius:.5px;background:#3a8ae0;"></div><div class="r" style="left:5.5px;top:39.6px;width:11px;height:1px;background:#bdb5b0;"></div><div class="r" style="left:2.5px;top:42.2px;width:2px;height:2px;border-radius:.5px;background:#30a050;"></div><div class="r" style="left:5.5px;top:42.7px;width:9px;height:1px;background:#bdb5b0;"></div><div class="r" style="left:2.5px;top:45.3px;width:2px;height:2px;border-radius:.5px;background:#b0b0b0;"></div><div class="r" style="left:5.5px;top:45.8px;width:7px;height:1px;background:#bdb5b0;"></div><div class="r" style="left:2.5px;top:48.4px;width:2px;height:2px;border-radius:.5px;background:#e07a30;"></div><div class="r" style="left:5.5px;top:48.9px;width:5px;height:1px;background:#bdb5b0;"></div><div class="r" style="left:2.5px;top:51.5px;width:2px;height:2px;border-radius:.5px;background:#40a0e0;"></div><div class="r" style="left:5.5px;top:52.0px;width:10px;height:1px;background:#bdb5b0;"></div><div class="r" style="left:2.5px;top:54.6px;width:2px;height:2px;border-radius:.5px;background:#40b0d0;"></div><div class="r" style="left:5.5px;top:55.1px;width:8px;height:1px;background:#bdb5b0;"></div><div class="r" style="left:2.5px;top:57.7px;width:2px;height:2px;border-radius:.5px;background:#e09030;"></div><div class="r" style="left:5.5px;top:58.2px;width:6px;height:1px;background:#bdb5b0;"></div><div class="r" style="left:2.5px;top:60.8px;width:2px;height:2px;border-radius:.5px;background:#e0a030;"></div><div class="r" style="left:5.5px;top:61.3px;width:11px;height:1px;background:#bdb5b0;"></div><div class="r" style="left:2.5px;top:63.9px;width:2px;height:2px;border-radius:.5px;background:#9050e0;"></div><div class="r" style="left:5.5px;top:64.4px;width:9px;height:1px;background:#bdb5b0;"></div><div class="r" style="left:1.5px;top:22.6px;width:17.9px;height:3px;border-radius:1px;background:#3a86ee;"></div><div class="r" style="left:23.6px;top:4px;width:42.4px;height:1.4px;background:#b0a9a4;"></div><div class="r" style="left:22.6px;top:9px;width:47.9px;height:54.7px;background:#f4f1ef;"></div><div class="r" style="left:24.6px;top:12.0px;width:9.0px;height:.9px;background:#b5aea9;"></div><div class="r" style="left:49.0px;top:12.0px;width:7.4px;height:.9px;background:#b5aea9;"></div><div class="r" style="left:24.6px;top:14.4px;width:5.2px;height:.9px;background:#b5aea9;"></div><div class="r" style="left:49.0px;top:14.4px;width:6.2px;height:.9px;background:#b5aea9;"></div><div class="r" style="left:24.6px;top:16.8px;width:7.8px;height:.9px;background:#b5aea9;"></div><div class="r" style="left:49.0px;top:16.8px;width:5.0px;height:.9px;background:#b5aea9;"></div><div class="r" style="left:24.6px;top:19.2px;width:8.2px;height:.9px;background:#b5aea9;"></div><div class="r" style="left:49.0px;top:19.2px;width:8.7px;height:.9px;background:#b5aea9;"></div><div class="r" style="left:24.6px;top:21.6px;width:5.8px;height:.9px;background:#b5aea9;"></div><div class="r" style="left:49.0px;top:21.6px;width:5.3px;height:.9px;background:#b5aea9;"></div><div class="r" style="left:24.6px;top:24.0px;width:8.7px;height:.9px;background:#b5aea9;"></div><div class="r" style="left:49.0px;top:24.0px;width:8.8px;height:.9px;background:#b5aea9;"></div><div class="r" style="left:24.6px;top:26.4px;width:5.2px;height:.9px;background:#b5aea9;"></div><div class="r" style="left:49.0px;top:26.4px;width:4.6px;height:.9px;background:#b5aea9;"></div><div class="r" style="left:24.6px;top:28.8px;width:7.9px;height:.9px;background:#b5aea9;"></div><div class="r" style="left:49.0px;top:28.8px;width:8.8px;height:.9px;background:#b5aea9;"></div><div class="r" style="left:24.6px;top:31.2px;width:4.7px;height:.9px;background:#b5aea9;"></div><div class="r" style="left:49.0px;top:31.2px;width:7.5px;height:.9px;background:#b5aea9;"></div><div class="r" style="left:24.6px;top:33.6px;width:6.7px;height:.9px;background:#b5aea9;"></div><div class="r" style="left:49.0px;top:33.6px;width:6.4px;height:.9px;background:#b5aea9;"></div><div class="r" style="left:24.6px;top:36.0px;width:5.0px;height:.9px;background:#b5aea9;"></div><div class="r" style="left:49.0px;top:36.0px;width:8.7px;height:.9px;background:#b5aea9;"></div><div class="r" style="left:24.6px;top:38.4px;width:8.3px;height:.9px;background:#b5aea9;"></div><div class="r" style="left:49.0px;top:38.4px;width:6.6px;height:.9px;background:#b5aea9;"></div><div class="r" style="left:24.6px;top:40.8px;width:6.1px;height:.9px;background:#b5aea9;"></div><div class="r" style="left:49.0px;top:40.8px;width:6.6px;height:.9px;background:#b5aea9;"></div><div class="r" style="left:24.6px;top:43.2px;width:7.1px;height:.9px;background:#b5aea9;"></div><div class="r" style="left:49.0px;top:43.2px;width:4.7px;height:.9px;background:#b5aea9;"></div><div class="r" style="left:24.6px;top:45.6px;width:5.5px;height:.9px;background:#b5aea9;"></div><div class="r" style="left:49.0px;top:45.6px;width:6.4px;height:.9px;background:#b5aea9;"></div><div class="r" style="left:24.6px;top:48.0px;width:7.6px;height:.9px;background:#b5aea9;"></div><div class="r" style="left:49.0px;top:48.0px;width:7.5px;height:.9px;background:#b5aea9;"></div><div class="r" style="left:24.6px;top:50.4px;width:6.3px;height:.9px;background:#b5aea9;"></div><div class="r" style="left:49.0px;top:50.4px;width:8.8px;height:.9px;background:#b5aea9;"></div><div class="r" style="left:24.6px;top:52.8px;width:4.5px;height:.9px;background:#b5aea9;"></div><div class="r" style="left:49.0px;top:52.8px;width:6.9px;height:.9px;background:#b5aea9;"></div><div class="r" style="left:24.6px;top:55.2px;width:6.5px;height:.9px;background:#b5aea9;"></div><div class="r" style="left:49.0px;top:55.2px;width:6.8px;height:.9px;background:#b5aea9;"></div><div class="r" style="left:24.6px;top:57.6px;width:8.2px;height:.9px;background:#b5aea9;"></div><div class="r" style="left:49.0px;top:57.6px;width:5.6px;height:.9px;background:#b5aea9;"></div><div class="r" style="left:24.6px;top:60.0px;width:6.0px;height:.9px;background:#b5aea9;"></div><div class="r" style="left:49.0px;top:60.0px;width:9.1px;height:.9px;background:#b5aea9;"></div></div>
</div>
<div class="r" style="left:709.0px;top:141.2px;width:92.0px;height:85.7px;background:#fff;box-shadow:0 1.5px 1.8px rgba(0,0,0,.3),0 0 0 .6px rgba(0,0,0,.07);">
<div class="r" style="left:3.2px;top:2.6px;right:3.6px;bottom:4.4px;border:1px solid #e6e6e6;"></div>
<div class="r" style="left:8.5px;top:5.3px;width:74.5px;height:70.7px;background:#efe9e5;border-radius:2px;box-shadow:0 1.2px 2.5px rgba(0,0,0,.42);overflow:hidden;"><div class="r" style="left:0;top:0;width:27%;height:100%;background:#e4ddd9;"></div><div class="r" style="left:2px;top:1.5px;width:2px;height:2px;border-radius:50%;background:#f05a50;"></div><div class="r" style="left:2.5px;top:5.0px;width:2px;height:2px;border-radius:.5px;background:#9a9a9a;"></div><div class="r" style="left:5.5px;top:5.5px;width:5px;height:1px;background:#bdb5b0;"></div><div class="r" style="left:2.5px;top:8.1px;width:2px;height:2px;border-radius:.5px;background:#9a9a9a;"></div><div class="r" style="left:5.5px;top:8.6px;width:10px;height:1px;background:#bdb5b0;"></div><div class="r" style="left:2.5px;top:11.2px;width:2px;height:2px;border-radius:.5px;background:#3aa3e0;"></div><div class="r" style="left:5.5px;top:11.7px;width:8px;height:1px;background:#bdb5b0;"></div><div class="r" style="left:2.5px;top:14.3px;width:2px;height:2px;border-radius:.5px;background:#2aa36a;"></div><div class="r" style="left:5.5px;top:14.8px;width:6px;height:1px;background:#bdb5b0;"></div><div class="r" style="left:2.5px;top:20.5px;width:2px;height:2px;border-radius:.5px;background:#b0b0b0;"></div><div class="r" style="left:5.5px;top:21.0px;width:9px;height:1px;background:#bdb5b0;"></div><div class="r" style="left:2.5px;top:23.6px;width:2px;height:2px;border-radius:.5px;background:#b0b0b0;"></div><div class="r" style="left:5.5px;top:24.1px;width:7px;height:1px;background:#bdb5b0;"></div><div class="r" style="left:2.5px;top:26.7px;width:2px;height:2px;border-radius:.5px;background:#b0b0b0;"></div><div class="r" style="left:5.5px;top:27.2px;width:5px;height:1px;background:#bdb5b0;"></div><div class="r" style="left:2.5px;top:29.8px;width:2px;height:2px;border-radius:.5px;background:#c07060;"></div><div class="r" style="left:5.5px;top:30.3px;width:10px;height:1px;background:#bdb5b0;"></div><div class="r" style="left:2.5px;top:32.9px;width:2px;height:2px;border-radius:.5px;background:#b0b0b0;"></div><div class="r" style="left:5.5px;top:33.4px;width:8px;height:1px;background:#bdb5b0;"></div><div class="r" style="left:2.5px;top:36.0px;width:2px;height:2px;border-radius:.5px;background:#b0b0b0;"></div><div class="r" style="left:5.5px;top:36.5px;width:6px;height:1px;background:#bdb5b0;"></div><div class="r" style="left:2.5px;top:39.1px;width:2px;height:2px;border-radius:.5px;background:#3a8ae0;"></div><div class="r" style="left:5.5px;top:39.6px;width:11px;height:1px;background:#bdb5b0;"></div><div class="r" style="left:2.5px;top:42.2px;width:2px;height:2px;border-radius:.5px;background:#30a050;"></div><div class="r" style="left:5.5px;top:42.7px;width:9px;height:1px;background:#bdb5b0;"></div><div class="r" style="left:2.5px;top:45.3px;width:2px;height:2px;border-radius:.5px;background:#b0b0b0;"></div><div class="r" style="left:5.5px;top:45.8px;width:7px;height:1px;background:#bdb5b0;"></div><div class="r" style="left:2.5px;top:48.4px;width:2px;height:2px;border-radius:.5px;background:#e07a30;"></div><div class="r" style="left:5.5px;top:48.9px;width:5px;height:1px;background:#bdb5b0;"></div><div class="r" style="left:2.5px;top:51.5px;width:2px;height:2px;border-radius:.5px;background:#40a0e0;"></div><div class="r" style="left:5.5px;top:52.0px;width:10px;height:1px;background:#bdb5b0;"></div><div class="r" style="left:2.5px;top:54.6px;width:2px;height:2px;border-radius:.5px;background:#40b0d0;"></div><div class="r" style="left:5.5px;top:55.1px;width:8px;height:1px;background:#bdb5b0;"></div><div class="r" style="left:2.5px;top:57.7px;width:2px;height:2px;border-radius:.5px;background:#e09030;"></div><div class="r" style="left:5.5px;top:58.2px;width:6px;height:1px;background:#bdb5b0;"></div><div class="r" style="left:2.5px;top:60.8px;width:2px;height:2px;border-radius:.5px;background:#e0a030;"></div><div class="r" style="left:5.5px;top:61.3px;width:11px;height:1px;background:#bdb5b0;"></div><div class="r" style="left:2.5px;top:63.9px;width:2px;height:2px;border-radius:.5px;background:#9050e0;"></div><div class="r" style="left:5.5px;top:64.4px;width:9px;height:1px;background:#bdb5b0;"></div><div class="r" style="left:1.5px;top:16.4px;width:17.9px;height:3px;border-radius:1px;background:#3a86ee;"></div><div class="r" style="left:27.6px;top:6.0px;width:5.0px;height:1px;background:#b8b1ac;"></div><div class="r" style="left:27.6px;top:9.4px;width:5.9px;height:1px;background:#b8b1ac;"></div><div class="r" style="left:27.6px;top:12.8px;width:8.9px;height:1px;background:#b8b1ac;"></div><div class="r" style="left:27.6px;top:16.2px;width:9.7px;height:1px;background:#b8b1ac;"></div><div class="r" style="left:37.6px;top:29.7px;width:30.9px;height:21.2px;background:#fbfaf9;"></div><div class="r" style="left:39.6px;top:31.8px;width:7.5px;height:.9px;background:#c5bfba;"></div><div class="r" style="left:39.6px;top:34.6px;width:17.3px;height:.9px;background:#c5bfba;"></div><div class="r" style="left:39.6px;top:37.4px;width:16.0px;height:.9px;background:#c5bfba;"></div><div class="r" style="left:39.6px;top:40.2px;width:19.6px;height:.9px;background:#c5bfba;"></div><div class="r" style="left:39.6px;top:43.0px;width:5.6px;height:.9px;background:#c5bfba;"></div><div class="r" style="left:39.6px;top:45.8px;width:19.7px;height:.9px;background:#c5bfba;"></div></div>
</div>
<div class="r" style="left:270.2px;top:302.6px;width:92.0px;height:86.0px;background:#fff;box-shadow:0 1.5px 1.8px rgba(0,0,0,.3),0 0 0 .6px rgba(0,0,0,.07);">
<div class="r" style="left:3.2px;top:2.6px;right:3.6px;bottom:4.4px;border:1px solid #e6e6e6;"></div>
<div class="r" style="left:8.5px;top:5.3px;width:74.5px;height:71.0px;background:#efe9e5;border-radius:2px;box-shadow:0 1.2px 2.5px rgba(0,0,0,.42);overflow:hidden;"><div class="r" style="left:0;top:0;width:27%;height:100%;background:#e4ddd9;"></div><div class="r" style="left:2px;top:1.5px;width:2px;height:2px;border-radius:50%;background:#f05a50;"></div><div class="r" style="left:2.5px;top:5.0px;width:2px;height:2px;border-radius:.5px;background:#9a9a9a;"></div><div class="r" style="left:5.5px;top:5.5px;width:5px;height:1px;background:#bdb5b0;"></div><div class="r" style="left:2.5px;top:11.2px;width:2px;height:2px;border-radius:.5px;background:#3aa3e0;"></div><div class="r" style="left:5.5px;top:11.7px;width:8px;height:1px;background:#bdb5b0;"></div><div class="r" style="left:2.5px;top:14.3px;width:2px;height:2px;border-radius:.5px;background:#2aa36a;"></div><div class="r" style="left:5.5px;top:14.8px;width:6px;height:1px;background:#bdb5b0;"></div><div class="r" style="left:2.5px;top:17.4px;width:2px;height:2px;border-radius:.5px;background:#9a9a9a;"></div><div class="r" style="left:5.5px;top:17.9px;width:11px;height:1px;background:#bdb5b0;"></div><div class="r" style="left:2.5px;top:20.5px;width:2px;height:2px;border-radius:.5px;background:#b0b0b0;"></div><div class="r" style="left:5.5px;top:21.0px;width:9px;height:1px;background:#bdb5b0;"></div><div class="r" style="left:2.5px;top:23.6px;width:2px;height:2px;border-radius:.5px;background:#b0b0b0;"></div><div class="r" style="left:5.5px;top:24.1px;width:7px;height:1px;background:#bdb5b0;"></div><div class="r" style="left:2.5px;top:26.7px;width:2px;height:2px;border-radius:.5px;background:#b0b0b0;"></div><div class="r" style="left:5.5px;top:27.2px;width:5px;height:1px;background:#bdb5b0;"></div><div class="r" style="left:2.5px;top:29.8px;width:2px;height:2px;border-radius:.5px;background:#c07060;"></div><div class="r" style="left:5.5px;top:30.3px;width:10px;height:1px;background:#bdb5b0;"></div><div class="r" style="left:2.5px;top:32.9px;width:2px;height:2px;border-radius:.5px;background:#b0b0b0;"></div><div class="r" style="left:5.5px;top:33.4px;width:8px;height:1px;background:#bdb5b0;"></div><div class="r" style="left:2.5px;top:36.0px;width:2px;height:2px;border-radius:.5px;background:#b0b0b0;"></div><div class="r" style="left:5.5px;top:36.5px;width:6px;height:1px;background:#bdb5b0;"></div><div class="r" style="left:2.5px;top:39.1px;width:2px;height:2px;border-radius:.5px;background:#3a8ae0;"></div><div class="r" style="left:5.5px;top:39.6px;width:11px;height:1px;background:#bdb5b0;"></div><div class="r" style="left:2.5px;top:42.2px;width:2px;height:2px;border-radius:.5px;background:#30a050;"></div><div class="r" style="left:5.5px;top:42.7px;width:9px;height:1px;background:#bdb5b0;"></div><div class="r" style="left:2.5px;top:45.3px;width:2px;height:2px;border-radius:.5px;background:#b0b0b0;"></div><div class="r" style="left:5.5px;top:45.8px;width:7px;height:1px;background:#bdb5b0;"></div><div class="r" style="left:2.5px;top:48.4px;width:2px;height:2px;border-radius:.5px;background:#e07a30;"></div><div class="r" style="left:5.5px;top:48.9px;width:5px;height:1px;background:#bdb5b0;"></div><div class="r" style="left:2.5px;top:51.5px;width:2px;height:2px;border-radius:.5px;background:#40a0e0;"></div><div class="r" style="left:5.5px;top:52.0px;width:10px;height:1px;background:#bdb5b0;"></div><div class="r" style="left:2.5px;top:54.6px;width:2px;height:2px;border-radius:.5px;background:#40b0d0;"></div><div class="r" style="left:5.5px;top:55.1px;width:8px;height:1px;background:#bdb5b0;"></div><div class="r" style="left:2.5px;top:57.7px;width:2px;height:2px;border-radius:.5px;background:#e09030;"></div><div class="r" style="left:5.5px;top:58.2px;width:6px;height:1px;background:#bdb5b0;"></div><div class="r" style="left:2.5px;top:60.8px;width:2px;height:2px;border-radius:.5px;background:#e0a030;"></div><div class="r" style="left:5.5px;top:61.3px;width:11px;height:1px;background:#bdb5b0;"></div><div class="r" style="left:2.5px;top:63.9px;width:2px;height:2px;border-radius:.5px;background:#9050e0;"></div><div class="r" style="left:5.5px;top:64.4px;width:9px;height:1px;background:#bdb5b0;"></div><div class="r" style="left:1.5px;top:7.1px;width:17.9px;height:3px;border-radius:1px;background:#3a86ee;"></div><div class="r" style="left:32.9px;top:7.0px;width:9.6px;height:1px;background:#b8b1ac;"></div><div class="r" style="left:47.6px;top:7.0px;width:6.8px;height:1px;background:#c9c2bd;"></div><div class="r" style="left:35.7px;top:10.6px;width:6.9px;height:1px;background:#b8b1ac;"></div><div class="r" style="left:44.6px;top:10.1px;width:1.8px;height:1.8px;background:#4a8ff0;"></div><div class="r" style="left:47.6px;top:10.6px;width:8.2px;height:1px;background:#c9c2bd;"></div><div class="r" style="left:33.3px;top:14.2px;width:9.2px;height:1px;background:#b8b1ac;"></div><div class="r" style="left:47.6px;top:14.2px;width:8.8px;height:1px;background:#c9c2bd;"></div><div class="r" style="left:35.7px;top:17.8px;width:6.8px;height:1px;background:#b8b1ac;"></div><div class="r" style="left:47.6px;top:17.8px;width:9.8px;height:1px;background:#c9c2bd;"></div><div class="r" style="left:35.4px;top:21.4px;width:7.1px;height:1px;background:#b8b1ac;"></div><div class="r" style="left:47.6px;top:21.4px;width:11.3px;height:1px;background:#c9c2bd;"></div><div class="r" style="left:33.5px;top:25.0px;width:9.1px;height:1px;background:#b8b1ac;"></div><div class="r" style="left:44.6px;top:24.5px;width:1.8px;height:1.8px;background:#4a8ff0;"></div><div class="r" style="left:47.6px;top:25.0px;width:14.1px;height:1px;background:#c9c2bd;"></div><div class="r" style="left:35.8px;top:28.6px;width:6.7px;height:1px;background:#b8b1ac;"></div><div class="r" style="left:47.6px;top:28.6px;width:11.9px;height:1px;background:#c9c2bd;"></div><div class="r" style="left:34.1px;top:32.2px;width:8.4px;height:1px;background:#b8b1ac;"></div><div class="r" style="left:47.6px;top:32.2px;width:18.4px;height:1px;background:#c9c2bd;"></div><div class="r" style="left:37.0px;top:35.8px;width:5.6px;height:1px;background:#b8b1ac;"></div><div class="r" style="left:47.6px;top:35.8px;width:10.4px;height:1px;background:#c9c2bd;"></div><div class="r" style="left:38.5px;top:39.4px;width:4.1px;height:1px;background:#b8b1ac;"></div><div class="r" style="left:47.6px;top:39.4px;width:8.0px;height:1px;background:#c9c2bd;"></div><div class="r" style="left:38.1px;top:43.0px;width:4.4px;height:1px;background:#b8b1ac;"></div><div class="r" style="left:47.6px;top:43.0px;width:16.9px;height:1px;background:#c9c2bd;"></div><div class="r" style="left:35.2px;top:46.6px;width:7.4px;height:1px;background:#b8b1ac;"></div><div class="r" style="left:44.6px;top:46.1px;width:1.8px;height:1.8px;background:#4a8ff0;"></div><div class="r" style="left:47.6px;top:46.6px;width:13.5px;height:1px;background:#c9c2bd;"></div><div class="r" style="left:32.9px;top:50.2px;width:9.7px;height:1px;background:#b8b1ac;"></div><div class="r" style="left:44.6px;top:49.7px;width:1.8px;height:1.8px;background:#4a8ff0;"></div><div class="r" style="left:47.6px;top:50.2px;width:11.4px;height:1px;background:#c9c2bd;"></div><div class="r" style="left:34.2px;top:57.4px;width:8.4px;height:1px;background:#b8b1ac;"></div><div class="r" style="left:44.6px;top:56.9px;width:1.8px;height:1.8px;background:#4a8ff0;"></div><div class="r" style="left:47.6px;top:57.4px;width:9.0px;height:1px;background:#c9c2bd;"></div><div class="r" style="left:36.6px;top:61.0px;width:6.0px;height:1px;background:#b8b1ac;"></div><div class="r" style="left:47.6px;top:61.0px;width:17.5px;height:1px;background:#c9c2bd;"></div></div>
</div>
<div class="r" style="left:416.8px;top:302.6px;width:92.0px;height:86.0px;background:#fff;box-shadow:0 1.5px 1.8px rgba(0,0,0,.3),0 0 0 .6px rgba(0,0,0,.07);">
<div class="r" style="left:3.2px;top:2.6px;right:3.6px;bottom:4.4px;border:1px solid #e6e6e6;"></div>
<div class="r" style="left:8.5px;top:5.3px;width:74.5px;height:71.0px;background:#efe9e5;border-radius:2px;box-shadow:0 1.2px 2.5px rgba(0,0,0,.42);overflow:hidden;"><div class="r" style="left:0;top:0;width:27%;height:100%;background:#e4ddd9;"></div><div class="r" style="left:2px;top:1.5px;width:2px;height:2px;border-radius:50%;background:#f05a50;"></div><div class="r" style="left:2.5px;top:8.1px;width:2px;height:2px;border-radius:.5px;background:#9a9a9a;"></div><div class="r" style="left:5.5px;top:8.6px;width:10px;height:1px;background:#bdb5b0;"></div><div class="r" style="left:2.5px;top:11.2px;width:2px;height:2px;border-radius:.5px;background:#3aa3e0;"></div><div class="r" style="left:5.5px;top:11.7px;width:8px;height:1px;background:#bdb5b0;"></div><div class="r" style="left:2.5px;top:14.3px;width:2px;height:2px;border-radius:.5px;background:#2aa36a;"></div><div class="r" style="left:5.5px;top:14.8px;width:6px;height:1px;background:#bdb5b0;"></div><div class="r" style="left:2.5px;top:17.4px;width:2px;height:2px;border-radius:.5px;background:#9a9a9a;"></div><div class="r" style="left:5.5px;top:17.9px;width:11px;height:1px;background:#bdb5b0;"></div><div class="r" style="left:2.5px;top:20.5px;width:2px;height:2px;border-radius:.5px;background:#b0b0b0;"></div><div class="r" style="left:5.5px;top:21.0px;width:9px;height:1px;background:#bdb5b0;"></div><div class="r" style="left:2.5px;top:23.6px;width:2px;height:2px;border-radius:.5px;background:#b0b0b0;"></div><div class="r" style="left:5.5px;top:24.1px;width:7px;height:1px;background:#bdb5b0;"></div><div class="r" style="left:2.5px;top:26.7px;width:2px;height:2px;border-radius:.5px;background:#b0b0b0;"></div><div class="r" style="left:5.5px;top:27.2px;width:5px;height:1px;background:#bdb5b0;"></div><div class="r" style="left:2.5px;top:29.8px;width:2px;height:2px;border-radius:.5px;background:#c07060;"></div><div class="r" style="left:5.5px;top:30.3px;width:10px;height:1px;background:#bdb5b0;"></div><div class="r" style="left:2.5px;top:32.9px;width:2px;height:2px;border-radius:.5px;background:#b0b0b0;"></div><div class="r" style="left:5.5px;top:33.4px;width:8px;height:1px;background:#bdb5b0;"></div><div class="r" style="left:2.5px;top:36.0px;width:2px;height:2px;border-radius:.5px;background:#b0b0b0;"></div><div class="r" style="left:5.5px;top:36.5px;width:6px;height:1px;background:#bdb5b0;"></div><div class="r" style="left:2.5px;top:39.1px;width:2px;height:2px;border-radius:.5px;background:#3a8ae0;"></div><div class="r" style="left:5.5px;top:39.6px;width:11px;height:1px;background:#bdb5b0;"></div><div class="r" style="left:2.5px;top:42.2px;width:2px;height:2px;border-radius:.5px;background:#30a050;"></div><div class="r" style="left:5.5px;top:42.7px;width:9px;height:1px;background:#bdb5b0;"></div><div class="r" style="left:2.5px;top:45.3px;width:2px;height:2px;border-radius:.5px;background:#b0b0b0;"></div><div class="r" style="left:5.5px;top:45.8px;width:7px;height:1px;background:#bdb5b0;"></div><div class="r" style="left:2.5px;top:48.4px;width:2px;height:2px;border-radius:.5px;background:#e07a30;"></div><div class="r" style="left:5.5px;top:48.9px;width:5px;height:1px;background:#bdb5b0;"></div><div class="r" style="left:2.5px;top:51.5px;width:2px;height:2px;border-radius:.5px;background:#40a0e0;"></div><div class="r" style="left:5.5px;top:52.0px;width:10px;height:1px;background:#bdb5b0;"></div><div class="r" style="left:2.5px;top:54.6px;width:2px;height:2px;border-radius:.5px;background:#40b0d0;"></div><div class="r" style="left:5.5px;top:55.1px;width:8px;height:1px;background:#bdb5b0;"></div><div class="r" style="left:2.5px;top:57.7px;width:2px;height:2px;border-radius:.5px;background:#e09030;"></div><div class="r" style="left:5.5px;top:58.2px;width:6px;height:1px;background:#bdb5b0;"></div><div class="r" style="left:2.5px;top:60.8px;width:2px;height:2px;border-radius:.5px;background:#e0a030;"></div><div class="r" style="left:5.5px;top:61.3px;width:11px;height:1px;background:#bdb5b0;"></div><div class="r" style="left:2.5px;top:63.9px;width:2px;height:2px;border-radius:.5px;background:#9050e0;"></div><div class="r" style="left:5.5px;top:64.4px;width:9px;height:1px;background:#bdb5b0;"></div><div class="r" style="left:1.5px;top:4.0px;width:17.9px;height:3px;border-radius:1px;background:#3a86ee;"></div><div class="r" style="left:36.7px;top:17.8px;width:5.8px;height:1px;background:#b8b1ac;"></div><div class="r" style="left:47.6px;top:17.8px;width:9.2px;height:1px;background:#c9c2bd;"></div><div class="r" style="left:32.5px;top:21.4px;width:10.1px;height:1px;background:#b8b1ac;"></div><div class="r" style="left:44.6px;top:20.9px;width:1.8px;height:1.8px;background:#4a8ff0;"></div><div class="r" style="left:47.6px;top:21.4px;width:7.0px;height:1px;background:#c9c2bd;"></div><div class="r" style="left:33.7px;top:25.0px;width:8.8px;height:1px;background:#b8b1ac;"></div><div class="r" style="left:47.6px;top:25.0px;width:16.7px;height:1px;background:#c9c2bd;"></div><div class="r" style="left:31.9px;top:28.6px;width:10.7px;height:1px;background:#b8b1ac;"></div><div class="r" style="left:47.6px;top:28.6px;width:13.4px;height:1px;background:#c9c2bd;"></div><div class="r" style="left:34.5px;top:32.2px;width:8.1px;height:1px;background:#b8b1ac;"></div><div class="r" style="left:44.6px;top:31.7px;width:1.8px;height:1.8px;background:#4a8ff0;"></div><div class="r" style="left:47.6px;top:32.2px;width:16.0px;height:1px;background:#c9c2bd;"></div><div class="r" style="left:32.0px;top:39.4px;width:10.5px;height:1px;background:#b8b1ac;"></div><div class="r" style="left:47.6px;top:39.4px;width:8.4px;height:1px;background:#c9c2bd;"></div><div class="r" style="left:32.4px;top:43.0px;width:10.2px;height:1px;background:#b8b1ac;"></div><div class="r" style="left:47.6px;top:43.0px;width:18.9px;height:1px;background:#c9c2bd;"></div><div class="r" style="left:32.6px;top:46.6px;width:10.0px;height:1px;background:#b8b1ac;"></div><div class="r" style="left:44.6px;top:46.1px;width:1.8px;height:1.8px;background:#4a8ff0;"></div><div class="r" style="left:47.6px;top:46.6px;width:9.2px;height:1px;background:#c9c2bd;"></div><div class="r" style="left:38.3px;top:50.2px;width:4.2px;height:1px;background:#b8b1ac;"></div><div class="r" style="left:44.6px;top:49.7px;width:1.8px;height:1.8px;background:#4a8ff0;"></div><div class="r" style="left:47.6px;top:50.2px;width:18.8px;height:1px;background:#c9c2bd;"></div><div class="r" style="left:34.3px;top:57.4px;width:8.2px;height:1px;background:#b8b1ac;"></div><div class="r" style="left:47.6px;top:57.4px;width:15.8px;height:1px;background:#c9c2bd;"></div></div>
</div>
<div class="r" style="left:562.6px;top:318.6px;width:92.0px;height:53.6px;background:#fff;box-shadow:0 1.5px 1.8px rgba(0,0,0,.3),0 0 0 .6px rgba(0,0,0,.07);">
<div class="r" style="left:3.2px;top:2.6px;right:3.6px;bottom:4.4px;border:1px solid #e6e6e6;"></div>
<div class="r" style="left:4.5px;top:3.0px;width:82.5px;height:45.6px;background:linear-gradient(165deg,#f9b040 0%,#f59a30 30%,#f08028 55%,#ea6a20 80%,#e25a1a 100%);overflow:hidden;"><div class="r" style="left:0;top:0;width:100%;height:100%;background:linear-gradient(125deg,rgba(255,230,120,.35) 0%,rgba(255,230,120,0) 30%,rgba(255,200,100,.25) 55%,rgba(255,200,100,0) 70%);"></div><div class="r" style="left:19.0px;top:9.6px;width:63.5px;height:36.0px;background:#fbfaf9;box-shadow:0 1px 2px rgba(0,0,0,.28);overflow:hidden;"><div class="r" style="left:0;top:0;width:27%;height:100%;background:#e9dfd2;"></div><div class="r" style="left:30%;top:4.0px;width:64%;height:.8px;background:#d5d5d5;"></div><div class="r" style="left:30%;top:6.6px;width:64%;height:.8px;background:#d5d5d5;"></div><div class="r" style="left:30%;top:9.2px;width:64%;height:.8px;background:#d5d5d5;"></div><div class="r" style="left:30%;top:11.8px;width:64%;height:.8px;background:#d5d5d5;"></div><div class="r" style="left:30%;top:14.4px;width:64%;height:.8px;background:#d5d5d5;"></div><div class="r" style="left:30%;top:17.0px;width:64%;height:.8px;background:#d5d5d5;"></div><div class="r" style="left:30%;top:19.6px;width:64%;height:.8px;background:#d5d5d5;"></div><div class="r" style="left:30%;top:22.2px;width:64%;height:.8px;background:#d5d5d5;"></div><div class="r" style="left:30%;top:24.8px;width:64%;height:.8px;background:#d5d5d5;"></div><div class="r" style="left:30%;top:27.4px;width:64%;height:.8px;background:#d5d5d5;"></div><div class="r" style="left:30%;top:30.0px;width:64%;height:.8px;background:#d5d5d5;"></div><div class="r" style="left:30%;top:32.6px;width:64%;height:.8px;background:#d5d5d5;"></div></div></div>
</div>
<div class="r" style="left:709.0px;top:315.5px;width:92.0px;height:59.2px;background:#fff;box-shadow:0 1.5px 1.8px rgba(0,0,0,.3),0 0 0 .6px rgba(0,0,0,.07);">
<div class="r" style="left:3.2px;top:2.6px;right:3.6px;bottom:4.4px;border:1px solid #e6e6e6;"></div>
<div class="r" style="left:4.5px;top:3.0px;width:82.5px;height:51.2px;background:linear-gradient(165deg,#f9b040 0%,#f59a30 30%,#f08028 55%,#ea6a20 80%,#e25a1a 100%);overflow:hidden;"><div class="r" style="left:0;top:0;width:100%;height:100%;background:linear-gradient(125deg,rgba(255,230,120,.35) 0%,rgba(255,230,120,0) 30%,rgba(255,200,100,.25) 55%,rgba(255,200,100,0) 70%);"></div><div class="r" style="left:13.2px;top:7.2px;width:56.9px;height:34.3px;background:#fbfaf9;box-shadow:0 1px 2px rgba(0,0,0,.28);overflow:hidden;"><div class="r" style="left:0;top:0;width:16%;height:100%;background:#e9dfd2;"></div><div class="r" style="left:30%;top:4.0px;width:64%;height:.8px;background:#d5d5d5;"></div><div class="r" style="left:30%;top:6.6px;width:64%;height:.8px;background:#d5d5d5;"></div><div class="r" style="left:30%;top:9.2px;width:64%;height:.8px;background:#d5d5d5;"></div><div class="r" style="left:30%;top:11.8px;width:64%;height:.8px;background:#d5d5d5;"></div><div class="r" style="left:30%;top:14.4px;width:64%;height:.8px;background:#d5d5d5;"></div><div class="r" style="left:30%;top:17.0px;width:64%;height:.8px;background:#d5d5d5;"></div><div class="r" style="left:30%;top:19.6px;width:64%;height:.8px;background:#d5d5d5;"></div><div class="r" style="left:30%;top:22.2px;width:64%;height:.8px;background:#d5d5d5;"></div><div class="r" style="left:30%;top:24.8px;width:64%;height:.8px;background:#d5d5d5;"></div><div class="r" style="left:30%;top:27.4px;width:64%;height:.8px;background:#d5d5d5;"></div><div class="r" style="left:30%;top:30.0px;width:64%;height:.8px;background:#d5d5d5;"></div><div class="r" style="left:30%;top:32.6px;width:64%;height:.8px;background:#d5d5d5;"></div><div class="r" style="left:72%;top:30%;width:22%;height:22%;background:#e8682a;"></div><div class="r" style="left:3%;top:16%;width:50%;height:3px;background:#2f7de6;"></div></div></div>
</div>
<div class="r" style="left:270.2px;top:475.1px;width:92.0px;height:60.7px;background:#fff;box-shadow:0 1.5px 1.8px rgba(0,0,0,.3),0 0 0 .6px rgba(0,0,0,.07);">
<div class="r" style="left:3.2px;top:2.6px;right:3.6px;bottom:4.4px;border:1px solid #e6e6e6;"></div>
<div class="r" style="left:8.5px;top:5.3px;width:74.5px;height:45.7px;background:#f7f4f2;border-radius:2px;box-shadow:0 1px 2.5px rgba(0,0,0,.38);overflow:hidden;"><div class="r" style="left:0;top:0;width:20%;height:100%;background:#e7dfd9;"></div><div class="r" style="left:24%;top:18%;width:46%;height:3px;background:#2f7de6;"></div><div class="r" style="left:24%;top:12.0px;width:46%;height:.8px;background:#d2d2d2;"></div><div class="r" style="left:24%;top:14.6px;width:46%;height:.8px;background:#d2d2d2;"></div><div class="r" style="left:24%;top:17.2px;width:46%;height:.8px;background:#d2d2d2;"></div><div class="r" style="left:24%;top:19.8px;width:46%;height:.8px;background:#d2d2d2;"></div><div class="r" style="left:24%;top:22.4px;width:46%;height:.8px;background:#d2d2d2;"></div><div class="r" style="left:24%;top:25.0px;width:46%;height:.8px;background:#d2d2d2;"></div><div class="r" style="left:24%;top:27.6px;width:46%;height:.8px;background:#d2d2d2;"></div><div class="r" style="left:24%;top:30.2px;width:46%;height:.8px;background:#d2d2d2;"></div><div class="r" style="left:24%;top:32.8px;width:46%;height:.8px;background:#d2d2d2;"></div><div class="r" style="left:24%;top:35.4px;width:46%;height:.8px;background:#d2d2d2;"></div><div class="r" style="left:24%;top:38.0px;width:46%;height:.8px;background:#d2d2d2;"></div><div class="r" style="left:24%;top:40.6px;width:46%;height:.8px;background:#d2d2d2;"></div><div class="r" style="left:74%;top:34%;width:22%;height:20%;background:#e2622a;"></div></div>
</div>
<div class="r" style="left:416.8px;top:482.9px;width:92.0px;height:46.4px;background:#fff;box-shadow:0 1.5px 1.8px rgba(0,0,0,.3),0 0 0 .6px rgba(0,0,0,.07);">
<div class="r" style="left:3.2px;top:2.6px;right:3.6px;bottom:4.4px;border:1px solid #e6e6e6;"></div>
<div class="r" style="left:4.5px;top:3.0px;width:82.5px;height:38.4px;background:linear-gradient(165deg,#f9b040 0%,#f59a30 30%,#f08028 55%,#ea6a20 80%,#e25a1a 100%);overflow:hidden;"><div class="r" style="left:0;top:0;width:100%;height:100%;background:linear-gradient(125deg,rgba(255,230,120,.35) 0%,rgba(255,230,120,0) 30%,rgba(255,200,100,.25) 55%,rgba(255,200,100,0) 70%);"></div><div class="r" style="left:11.6px;top:4.6px;width:59.4px;height:26.1px;background:rgba(240,228,220,.93);box-shadow:0 1px 2px rgba(0,0,0,.25);"><div class="r" style="left:3px;top:3px;width:12px;height:9px;background:#fafafa;"></div><div class="r" style="left:17px;top:3px;width:12px;height:9px;background:#fafafa;"></div><div class="r" style="left:31px;top:3px;width:12px;height:9px;background:#fafafa;"></div><div class="r" style="left:45px;top:3px;width:12px;height:9px;background:#fafafa;"></div><div class="r" style="left:4px;top:15px;width:12px;height:6px;background:#cbbfb5;"></div></div></div>
</div>
<div class="r" style="left:562.6px;top:482.0px;width:92.0px;height:47.3px;background:#fff;box-shadow:0 1.5px 1.8px rgba(0,0,0,.3),0 0 0 .6px rgba(0,0,0,.07);">
<div class="r" style="left:3.2px;top:2.6px;right:3.6px;bottom:4.4px;border:1px solid #e6e6e6;"></div>
<div class="r" style="left:6.5px;top:4.3px;width:78.5px;height:35.3px;background:#e6e0dc;border-radius:2px;box-shadow:0 1px 2.5px rgba(0,0,0,.3);overflow:hidden;"><div class="r" style="left:4px;top:4px;width:13px;height:13px;background:#f8f8f8;"></div><div class="r" style="left:19px;top:4px;width:13px;height:13px;background:#f8f8f8;"></div><div class="r" style="left:34px;top:4px;width:13px;height:13px;background:#f8f8f8;"></div><div class="r" style="left:49px;top:4px;width:13px;height:13px;background:#f8f8f8;"></div><div class="r" style="left:5px;top:20px;width:16px;height:9px;background:#cdc6c1;"></div></div>
</div>
<div class="r" style="left:709.0px;top:474.4px;width:92.0px;height:63.8px;background:#fff;box-shadow:0 1.5px 1.8px rgba(0,0,0,.3),0 0 0 .6px rgba(0,0,0,.07);">
<div class="r" style="left:3.2px;top:2.6px;right:3.6px;bottom:4.4px;border:1px solid #e6e6e6;"></div>
<div class="r" style="left:8.5px;top:5.3px;width:74.5px;height:48.8px;background:#eee8e4;border-radius:2px;box-shadow:0 1px 2.5px rgba(0,0,0,.38);overflow:hidden;"><div class="r" style="left:6%;top:16.0px;width:88%;height:3.4px;background:#e0d8d2;"></div><div class="r" style="left:7%;top:16.8px;width:2px;height:2px;border-radius:50%;background:#e0413a;"></div><div class="r" style="left:6%;top:20.6px;width:88%;height:3.4px;background:#f2ede9;"></div><div class="r" style="left:7%;top:21.4px;width:2px;height:2px;border-radius:50%;background:#e0413a;"></div><div class="r" style="left:6%;top:25.2px;width:88%;height:3.4px;background:#e0d8d2;"></div><div class="r" style="left:7%;top:26.0px;width:2px;height:2px;border-radius:50%;background:#e0413a;"></div><div class="r" style="left:6%;top:29.8px;width:88%;height:3.4px;background:#f2ede9;"></div><div class="r" style="left:7%;top:30.6px;width:2px;height:2px;border-radius:50%;background:#e0413a;"></div><div class="r" style="left:6%;top:34.4px;width:88%;height:3.4px;background:#e0d8d2;"></div><div class="r" style="left:7%;top:35.2px;width:2px;height:2px;border-radius:50%;background:#e0413a;"></div><div class="r" style="left:6%;top:39.0px;width:88%;height:3.4px;background:#f2ede9;"></div><div class="r" style="left:7%;top:39.8px;width:2px;height:2px;border-radius:50%;background:#e0413a;"></div><div class="r" style="left:6%;top:5px;width:30%;height:1.5px;background:#9a9290;"></div></div>
</div>
<div class="t" style="top:248.37px;font-size:13.35px;color:#1f1f1f;left:166.20px;width:300px;text-align:center;">Снимок экрана</div>
<div class="t" style="top:265.06px;font-size:13.1px;color:#1f1f1f;left:166.20px;width:300px;text-align:center;">2023-08....08.30.png</div>
<div class="t" style="top:248.37px;font-size:13.35px;color:#1f1f1f;left:312.75px;width:300px;text-align:center;">Снимок экрана</div>
<div class="t" style="top:265.06px;font-size:13.1px;color:#1f1f1f;left:312.75px;width:300px;text-align:center;">2023-08....08.23.png</div>
<div class="t" style="top:248.37px;font-size:13.35px;color:#1f1f1f;left:458.60px;width:300px;text-align:center;">Снимок экрана</div>
<div class="t" style="top:265.06px;font-size:13.1px;color:#1f1f1f;left:458.60px;width:300px;text-align:center;">2023-08....08.18.png</div>
<div class="t" style="top:248.37px;font-size:13.35px;color:#1f1f1f;left:605.00px;width:300px;text-align:center;">Снимок экрана</div>
<div class="t" style="top:265.06px;font-size:13.1px;color:#1f1f1f;left:605.00px;width:300px;text-align:center;">2023-08....08.14.png</div>
<div class="t" style="top:409.17px;font-size:13.35px;color:#1f1f1f;left:166.20px;width:300px;text-align:center;">Снимок экрана</div>
<div class="t" style="top:425.86px;font-size:13.1px;color:#1f1f1f;left:166.20px;width:300px;text-align:center;">2023-08....08.08.png</div>
<div class="t" style="top:409.17px;font-size:13.35px;color:#1f1f1f;left:312.75px;width:300px;text-align:center;">Снимок экрана</div>
<div class="t" style="top:425.86px;font-size:13.1px;color:#1f1f1f;left:312.75px;width:300px;text-align:center;">2023-08....08.05.png</div>
<div class="t" style="top:409.17px;font-size:13.35px;color:#1f1f1f;left:458.60px;width:300px;text-align:center;">Снимок экрана</div>
<div class="t" style="top:425.86px;font-size:13.1px;color:#1f1f1f;left:458.60px;width:300px;text-align:center;">2023-08....51.17.png</div>
<div class="t" style="top:409.17px;font-size:13.35px;color:#1f1f1f;left:605.00px;width:300px;text-align:center;">Снимок экрана</div>
<div class="t" style="top:425.86px;font-size:13.1px;color:#1f1f1f;left:605.00px;width:300px;text-align:center;">2023-08....37.10.png</div>
<div class="r" style="left:245px;top:551.5px;width:598px;height:24.5px;background:#e9e3e0;border-bottom-left-radius:9px;border-bottom-right-radius:9px;"></div>
<svg style="position:absolute;left:255px;top:557px;" width="17" height="14" viewBox="0 0 17 14" fill="none"><path d="M1.6 .8h4.3l1.8 1.6h7.4a1.3 1.3 0 0 1 1.3 1.3v8.2a1.3 1.3 0 0 1-1.3 1.3H1.6A1.3 1.3 0 0 1 .3 11.9V2.1A1.3 1.3 0 0 1 1.6.8zM.3 4.3h16" stroke="#4b4644" stroke-width="1.2" stroke-linejoin="round"/><path d="M12 7.3l.8 1.6 1.7.2-1.3 1.1.4 1.7-1.6-.9-1.6.9.4-1.7-1.3-1.1 1.7-.2z" fill="#4b4644"/></svg>
<svg style="position:absolute;left:284px;top:557px;" width="11" height="14" viewBox="0 0 11 14" fill="none"><path d="M2.3 6.5V4.2a3.2 3.2 0 0 1 6.4 0v2.3" stroke="#4b4644" stroke-width="1.5"/><rect x=".3" y="6.3" width="10.4" height="7.2" rx="1" fill="#4b4644"/><rect x="4.7" y="9.2" width="1.6" height="3.2" fill="#e9e3e0"/></svg>
<svg style="position:absolute;left:306.4px;top:557.5px;" width="17" height="13" viewBox="0 0 17 13" fill="none"><rect x=".9" y=".9" width="15.2" height="11.2" rx="1" stroke="#1f7bf2" stroke-width="1.8"/><circle cx="8.5" cy="6.5" r="1.7" fill="#1f7bf2"/></svg>
<svg style="position:absolute;left:331px;top:556px;" width="19" height="15" viewBox="0 0 19 15" fill="none"><rect x=".6" y=".6" width="8.4" height="13.8" rx="1.2" stroke="#4b4644" stroke-width="1.2"/><rect x="9.8" y=".6" width="8.4" height="13.8" rx="1.2" stroke="#4b4644" stroke-width="1.2"/><path d="M3 3.4h3M3 5.4h3M3 7.4h3M12.2 3.4h3M12.2 5.4h3M12.2 7.4h3" stroke="#4b4644" stroke-width="1"/></svg>
<svg style="position:absolute;left:360.5px;top:557px;" width="16" height="15" viewBox="0 0 16 15" fill="none"><path d="M2.2.7h11.6a1.5 1.5 0 0 1 1.5 1.5v7.3a1.5 1.5 0 0 1-1.5 1.5H7.5L4.7 14v-3H2.2A1.5 1.5 0 0 1 .7 9.5V2.2A1.5 1.5 0 0 1 2.2.7z" stroke="#4b4644" stroke-width="1.2" stroke-linejoin="round"/><path d="M4 4h8M4 6.2h8M4 8.4h5" stroke="#4b4644" stroke-width="1"/></svg>
<div class="t" style="top:564.44px;font-size:12px;color:#3b3836;left:464.60px;">369 items, 11,95 GB available</div>
<div class="r" style="left:695px;top:562.3px;width:83px;height:2.4px;background:#d4cecb;border-radius:1.2px;"></div>
<div class="r" style="left:695px;top:562.3px;width:18px;height:2.4px;background:#1f7bf2;border-radius:1.2px;"></div>
<div class="r" style="left:705.5px;top:556px;width:15px;height:15px;background:#f2f0ef;border-radius:50%;box-shadow:0 0 0 .7px rgba(0,0,0,.22),0 .5px 1.5px rgba(0,0,0,.2);"></div>
<svg style="position:absolute;left:786px;top:556.5px;" width="17" height="14" viewBox="0 0 17 14" fill="none"><rect x=".7" y=".7" width="15.6" height="12.6" rx="1.6" stroke="#4b4644" stroke-width="1.3"/><path d="M11.3.7v12.6" stroke="#4b4644" stroke-width="1.2"/><rect x="13.1" y="3" width="1.5" height="4.4" fill="#4b4644"/></svg>
<svg style="position:absolute;left:814.5px;top:561px;" width="20" height="6" viewBox="0 0 20 6" fill="none"><circle cx="3.80" cy="3" r="2.1" fill="#4b4644"/><circle cx="9.90" cy="3" r="2.1" fill="#4b4644"/><circle cx="16.00" cy="3" r="2.1" fill="#4b4644"/></svg>
<div class="r" style="left:244.3px;top:92.8px;width:599.4px;height:484.3px;border:2px solid #1f7bf2;border-radius:10px;box-sizing:border-box;"></div>
<svg width="0" height="0" style="position:absolute"><defs><linearGradient id="fg" x1="0" y1="0" x2="0" y2="1"><stop offset="0" stop-color="#6ccdfc"/><stop offset="1" stop-color="#3aa7ee"/></linearGradient></defs></svg>
<div class="r" style="left:843px;top:93px;width:599px;height:33px;background:#f0f0f2;"></div>
<div class="r" style="left:843px;top:92px;width:1px;height:969px;background:#dedede;"></div>
<svg style="position:absolute;left:855.3px;top:104px;" width="8" height="11" viewBox="0 0 8 11" fill="none"><path d="M6.5 .8 1.5 5.5l5 4.7" stroke="#59595b" stroke-width="1.4" stroke-linecap="round" stroke-linejoin="round"/></svg>
<svg style="position:absolute;left:876.6999999999999px;top:104px;" width="8" height="11" viewBox="0 0 8 11" fill="none"><path d="M1.5 .8l5 4.7-5 4.7" stroke="#b3b3b5" stroke-width="1.4" stroke-linecap="round" stroke-linejoin="round"/></svg>
<svg style="position:absolute;left:908.6px;top:105.10000000000001px;" width="8" height="9" viewBox="0 0 8 9" fill="none"><path d="M0.3 0.2 7.4 4.5 .3 8.8z" fill="#5b5b5d"/></svg>
<svg style="position:absolute;left:920.5px;top:101.5px;" width="16" height="16" viewBox="0 0 16 16" fill="none"><circle cx="8" cy="8" r="8" fill="#30c74f"/><path d="M8 3.6v7.2M4.8 7.8 8 11l3.2-3.2" stroke="#fff" stroke-width="2.2" stroke-linecap="round" stroke-linejoin="round"/></svg>
<div class="t" style="top:110.94px;font-size:13.75px;color:#6f6d6d;left:942.50px;">Downloads</div>
<svg style="position:absolute;left:1020.9000000000001px;top:105.4px;" width="8" height="9" viewBox="0 0 8 9" fill="none"><path d="M0.3 0.2 7.4 4.5 .3 8.8z" fill="#5b5b5d"/></svg>
<svg style="position:absolute;left:1423px;top:103px;" width="6" height="14" viewBox="0 0 6 14" fill="none"><circle cx="3" cy="2.20" r="1.25" fill="#3d3d3f"/><circle cx="3" cy="6.40" r="1.25" fill="#3d3d3f"/><circle cx="3" cy="10.60" r="1.25" fill="#3d3d3f"/></svg>
<div class="r" style="left:843px;top:126px;width:599px;height:29px;background:#fff;border-bottom:1px solid #e3e3e3;box-sizing:border-box;"></div>
<div class="t" style="top:140.91px;font-size:11.8px;color:#2c2c2c;left:881.60px;-webkit-text-stroke:.25px #2c2c2c;">Name</div>
<div class="t" style="top:140.74px;font-size:12px;color:#1e1e1e;font-weight:700;left:1075.50px;">Date Modified</div>
<svg style="position:absolute;left:1176px;top:138.5px;" width="8" height="5" viewBox="0 0 8 5" fill="none"><path d="M1 .8 4 3.8 7 .8" stroke="#5d5d5f" stroke-width="1.1" stroke-linecap="round" stroke-linejoin="round"/></svg>
<div class="t" style="top:140.81px;font-size:11.8px;color:#2c2c2c;left:1208.00px;-webkit-text-stroke:.25px #2c2c2c;">Size</div>
<div class="t" style="top:140.81px;font-size:11.8px;color:#2c2c2c;left:1293.00px;-webkit-text-stroke:.25px #2c2c2c;">Kind</div>
<div class="r" style="left:1058.2px;top:132px;width:1px;height:16.5px;background:#e2e2e2;"></div>
<div class="r" style="left:1190.4px;top:132px;width:1px;height:16.5px;background:#e2e2e2;"></div>
<div class="r" style="left:1275.4px;top:132px;width:1px;height:16.5px;background:#e2e2e2;"></div>
<div class="r" style="left:1414.7px;top:132px;width:1px;height:16.5px;background:#e2e2e2;"></div>
<div class="r" style="left:1425.3px;top:155px;width:16.7px;height:396px;background:#fafafa;border-left:1px solid #ececec;box-sizing:border-box;"></div>
<div class="r" style="left:1430px;top:157.9px;width:7.3px;height:18.1px;background:#c1c1c1;border-radius:4px;"></div>
<div class="r" style="left:843px;top:155px;width:582px;height:396px;overflow:hidden;">
<div class="r" style="left:-843px;top:-155px;width:1500px;height:1138px;">
<svg style="position:absolute;left:872px;top:163.7px;" width="15" height="13" viewBox="0 0 15 13" fill="none"><rect x=".5" y=".5" width="14" height="12" fill="#f4f4f4" stroke="#dcdcdc"/><rect x="2.5" y="3" width="4" height="7" fill="#e2e2e2"/><rect x="8" y="3" width="4.5" height="7" fill="#e2e2e2"/></svg>
<div class="t" style="top:170.31px;font-size:12.95px;color:#232323;left:893.60px;">layout_5@2x.jpg</div>
<div class="t" style="top:170.23px;font-size:12.6px;color:#7b7979;left:1067.40px;">Today, 12:30</div>
<div class="t" style="top:170.30px;font-size:12.4px;color:#7b7979;right:231.80px;">91 KB</div>
<div class="t" style="top:170.23px;font-size:12.6px;color:#7b7979;left:1283.50px;">JPEG Image</div>
<div class="r" style="left:854.4px;top:180.54px;width:561px;height:20.2px;background:#f4f4f5;border-radius:5px;"></div>
<svg style="position:absolute;left:872px;top:184.33999999999997px;" width="15" height="13" viewBox="0 0 15 13" fill="none"><rect x=".5" y=".5" width="14" height="12" fill="#f3eeea" stroke="#e8a27a"/><rect x="1.5" y="1.5" width="12" height="10" fill="#efe7e2"/><rect x="2" y="4" width="2" height="1" fill="#6b9fe0"/></svg>
<div class="t" style="top:190.95px;font-size:12.95px;color:#232323;left:893.60px;">12.08.30.jpg</div>
<div class="t" style="top:190.87px;font-size:12.6px;color:#7b7979;left:1067.40px;">Today, 12:11</div>
<div class="t" style="top:190.94px;font-size:12.4px;color:#7b7979;right:231.80px;">197 KB</div>
<div class="t" style="top:190.87px;font-size:12.6px;color:#7b7979;left:1283.50px;">JPEG Image</div>
<svg style="position:absolute;left:872px;top:204.98px;" width="15" height="13" viewBox="0 0 15 13" fill="none"><rect x=".5" y=".5" width="14" height="12" fill="#f3eeea" stroke="#e8a27a"/><rect x="1.5" y="1.5" width="12" height="10" fill="#efe7e2"/><rect x="2" y="4" width="2" height="1" fill="#6b9fe0"/></svg>
<div class="t" style="top:211.59px;font-size:12.95px;color:#232323;left:893.60px;">12.08.23.jpg</div>
<div class="t" style="top:211.51px;font-size:12.6px;color:#7b7979;left:1067.40px;">Today, 12:10</div>
<div class="t" style="top:211.58px;font-size:12.4px;color:#7b7979;right:231.80px;">218 KB</div>
<div class="t" style="top:211.51px;font-size:12.6px;color:#7b7979;left:1283.50px;">JPEG Image</div>
<div class="r" style="left:854.4px;top:221.82000000000002px;width:561px;height:20.2px;background:#f4f4f5;border-radius:5px;"></div>
<svg style="position:absolute;left:872px;top:225.62px;" width="15" height="13" viewBox="0 0 15 13" fill="none"><rect x=".5" y=".5" width="14" height="12" fill="#f3eeea" stroke="#e8a27a"/><rect x="1.5" y="1.5" width="12" height="10" fill="#efe7e2"/><rect x="2" y="4" width="2" height="1" fill="#6b9fe0"/></svg>
<div class="t" style="top:232.23px;font-size:12.95px;color:#232323;left:893.60px;">12.08.18.jpg</div>
<div class="t" style="top:232.15px;font-size:12.6px;color:#7b7979;left:1067.40px;">Today, 12:10</div>
<div class="t" style="top:232.22px;font-size:12.4px;color:#7b7979;right:231.80px;">286 KB</div>
<div class="t" style="top:232.15px;font-size:12.6px;color:#7b7979;left:1283.50px;">JPEG Image</div>
<svg style="position:absolute;left:872px;top:246.26px;" width="15" height="13" viewBox="0 0 15 13" fill="none"><rect x=".5" y=".5" width="14" height="12" fill="#f3eeea" stroke="#e8a27a"/><rect x="1.5" y="1.5" width="12" height="10" fill="#efe7e2"/><rect x="2" y="4" width="2" height="1" fill="#6b9fe0"/></svg>
<div class="t" style="top:252.87px;font-size:12.95px;color:#232323;left:893.60px;">12.08.14.jpg</div>
<div class="t" style="top:252.79px;font-size:12.6px;color:#7b7979;left:1067.40px;">Today, 12:10</div>
<div class="t" style="top:252.86px;font-size:12.4px;color:#7b7979;right:231.80px;">175 KB</div>
<div class="t" style="top:252.79px;font-size:12.6px;color:#7b7979;left:1283.50px;">JPEG Image</div>
<div class="r" style="left:854.4px;top:263.09999999999997px;width:561px;height:20.2px;background:#f4f4f5;border-radius:5px;"></div>
<svg style="position:absolute;left:872px;top:266.9px;" width="15" height="13" viewBox="0 0 15 13" fill="none"><rect x=".5" y=".5" width="14" height="12" fill="#f3eeea" stroke="#e8a27a"/><rect x="1.5" y="1.5" width="12" height="10" fill="#efe7e2"/><rect x="2" y="4" width="2" height="1" fill="#6b9fe0"/></svg>
<div class="t" style="top:273.51px;font-size:12.95px;color:#232323;left:893.60px;">12.08.08.jpg</div>
<div class="t" style="top:273.43px;font-size:12.6px;color:#7b7979;left:1067.40px;">Today, 12:10</div>
<div class="t" style="top:273.50px;font-size:12.4px;color:#7b7979;right:231.80px;">254 KB</div>
<div class="t" style="top:273.43px;font-size:12.6px;color:#7b7979;left:1283.50px;">JPEG Image</div>
<svg style="position:absolute;left:872px;top:287.54px;" width="15" height="13" viewBox="0 0 15 13" fill="none"><rect x=".5" y=".5" width="14" height="12" fill="#f3eeea" stroke="#e8a27a"/><rect x="1.5" y="1.5" width="12" height="10" fill="#efe7e2"/><rect x="2" y="4" width="2" height="1" fill="#6b9fe0"/></svg>
<div class="t" style="top:294.15px;font-size:12.95px;color:#232323;left:893.60px;">12.08.05.jpg</div>
<div class="t" style="top:294.07px;font-size:12.6px;color:#7b7979;left:1067.40px;">Today, 12:09</div>
<div class="t" style="top:294.14px;font-size:12.4px;color:#7b7979;right:231.80px;">243 KB</div>
<div class="t" style="top:294.07px;font-size:12.6px;color:#7b7979;left:1283.50px;">JPEG Image</div>
<div class="r" style="left:854.4px;top:304.38px;width:561px;height:20.2px;background:#f4f4f5;border-radius:5px;"></div>
<svg style="position:absolute;left:872px;top:308.18px;" width="15" height="13" viewBox="0 0 15 13" fill="none"><rect x=".5" y="2" width="14" height="9" fill="#f2f2f2" stroke="#d8d8d8"/><rect x="2" y="3.2" width="11" height="6.6" fill="#1a1c22"/></svg>
<div class="t" style="top:314.79px;font-size:12.95px;color:#232323;left:893.60px;">marta.jpg</div>
<div class="t" style="top:314.71px;font-size:12.6px;color:#7b7979;left:1067.40px;">Today, 11:59</div>
<div class="t" style="top:314.78px;font-size:12.4px;color:#7b7979;right:231.80px;">168 KB</div>
<div class="t" style="top:314.71px;font-size:12.6px;color:#7b7979;left:1283.50px;">JPEG Image</div>
<div class="r" style="left:854.4px;top:325.02px;width:561px;height:20.2px;background:#dcdcdc;border-radius:5px;"></div>
<svg style="position:absolute;left:872px;top:328.82px;" width="15" height="13" viewBox="0 0 15 13" fill="none"><rect x=".5" y="2" width="14" height="9" fill="#f2f2f2" stroke="#d8d8d8"/><rect x="2" y="3.2" width="11" height="6.6" fill="#1a1c22"/></svg>
<div class="t" style="top:335.43px;font-size:12.95px;color:#232323;left:893.60px;">marta.png</div>
<div class="t" style="top:335.35px;font-size:12.6px;color:#7b7979;left:1067.40px;">Today, 11:55</div>
<div class="t" style="top:335.42px;font-size:12.4px;color:#7b7979;right:231.80px;">165 KB</div>
<div class="t" style="top:335.35px;font-size:12.6px;color:#7b7979;left:1283.50px;">PNG Image</div>
<div class="r" style="left:854.4px;top:345.65999999999997px;width:561px;height:20.2px;background:#f4f4f5;border-radius:5px;"></div>
<svg style="position:absolute;left:872px;top:349.46px;" width="15" height="13" viewBox="0 0 15 13" fill="none"><rect x=".5" y="2" width="14" height="9" fill="#f2f2f2" stroke="#d8d8d8"/><rect x="2" y="3.2" width="11" height="6.6" fill="#1a1c22"/></svg>
<div class="t" style="top:356.07px;font-size:12.95px;color:#232323;left:893.60px;">dark1@2x-min.jpg</div>
<div class="t" style="top:355.99px;font-size:12.6px;color:#7b7979;left:1067.40px;">Today, 11:44</div>
<div class="t" style="top:356.06px;font-size:12.4px;color:#7b7979;right:231.80px;">223 KB</div>
<div class="t" style="top:355.99px;font-size:12.6px;color:#7b7979;left:1283.50px;">JPEG Image</div>
<svg style="position:absolute;left:872px;top:370.09999999999997px;" width="15" height="13" viewBox="0 0 15 13" fill="none"><rect x=".5" y="2" width="14" height="9" fill="#f2f2f2" stroke="#d8d8d8"/><rect x="2" y="3.2" width="11" height="6.6" fill="#1a1c22"/></svg>
<div class="t" style="top:376.71px;font-size:12.95px;color:#232323;left:893.60px;">dark1@2x-min.png</div>
<div class="t" style="top:376.63px;font-size:12.6px;color:#7b7979;left:1067.40px;">Today, 11:34</div>
<div class="t" style="top:376.70px;font-size:12.4px;color:#7b7979;right:231.80px;">345 KB</div>
<div class="t" style="top:376.63px;font-size:12.6px;color:#7b7979;left:1283.50px;">PNG Image</div>
<div class="r" style="left:854.4px;top:386.94px;width:561px;height:20.2px;background:#f4f4f5;border-radius:5px;"></div>
<svg style="position:absolute;left:872px;top:390.74px;" width="15" height="13" viewBox="0 0 15 13" fill="none"><rect x=".5" y="2" width="14" height="9" fill="#f1f1f1" stroke="#d6d6d6"/><rect x="2.5" y="3.5" width="10" height="5.5" fill="#e8c9a5"/><rect x="2" y="9" width="11" height="1" fill="#c96b38"/></svg>
<div class="t" style="top:397.35px;font-size:12.95px;color:#232323;left:893.60px;">New Macbook Pro.jpg</div>
<div class="t" style="top:397.27px;font-size:12.6px;color:#7b7979;left:1067.40px;">Today, 11:28</div>
<div class="t" style="top:397.34px;font-size:12.4px;color:#7b7979;right:231.80px;">240 KB</div>
<div class="t" style="top:397.27px;font-size:12.6px;color:#7b7979;left:1283.50px;">JPEG Image</div>
<svg style="position:absolute;left:872px;top:411.38px;" width="15" height="13" viewBox="0 0 15 13" fill="none"><rect x=".5" y="2" width="14" height="9" fill="#f1f1f1" stroke="#d6d6d6"/><rect x="2.5" y="3.5" width="10" height="5.5" fill="#e8c9a5"/><rect x="2" y="9" width="11" height="1" fill="#c96b38"/></svg>
<div class="t" style="top:417.99px;font-size:12.95px;color:#232323;left:893.60px;">633ecfaf5f7…nt View.png</div>
<div class="t" style="top:417.91px;font-size:12.6px;color:#7b7979;left:1067.40px;">Today, 11:23</div>
<div class="t" style="top:417.98px;font-size:12.4px;color:#7b7979;right:231.80px;">1,0 MB</div>
<div class="t" style="top:417.91px;font-size:12.6px;color:#7b7979;left:1283.50px;">PNG Image</div>
<div class="r" style="left:854.4px;top:428.21999999999997px;width:561px;height:20.2px;background:#f4f4f5;border-radius:5px;"></div>
<svg style="position:absolute;left:872px;top:432.02px;" width="15" height="13" viewBox="0 0 15 13" fill="none"><rect x=".5" y="2" width="14" height="9" fill="#f3f3f3" stroke="#d9d9d9"/><rect x="3" y="4" width="4" height="3" fill="#aab"/><rect x="7.5" y="4" width="4" height="2" fill="#c46"/></svg>
<div class="t" style="top:438.63px;font-size:12.95px;color:#232323;left:893.60px;">5316853f_i…ll-clabels.jpg</div>
<div class="t" style="top:438.55px;font-size:12.6px;color:#7b7979;left:1067.40px;">Today, 11:22</div>
<div class="t" style="top:438.62px;font-size:12.4px;color:#7b7979;right:231.80px;">226 KB</div>
<div class="t" style="top:438.55px;font-size:12.6px;color:#7b7979;left:1283.50px;">JPEG Image</div>
<svg style="position:absolute;left:872px;top:452.66px;" width="15" height="13" viewBox="0 0 15 13" fill="none"><rect x=".5" y="2" width="14" height="9" fill="#f3f3f3" stroke="#d9d9d9"/><rect x="3" y="4" width="4" height="3" fill="#aab"/><rect x="7.5" y="4" width="4" height="2" fill="#c46"/></svg>
<div class="t" style="top:459.27px;font-size:12.95px;color:#232323;left:893.60px;">5316853f_i…l-clabels.png</div>
<div class="t" style="top:459.19px;font-size:12.6px;color:#7b7979;left:1067.40px;">Today, 11:21</div>
<div class="t" style="top:459.26px;font-size:12.4px;color:#7b7979;right:231.80px;">752 KB</div>
<div class="t" style="top:459.19px;font-size:12.6px;color:#7b7979;left:1283.50px;">PNG Image</div>
<div class="r" style="left:854.4px;top:469.5px;width:561px;height:20.2px;background:#f4f4f5;border-radius:5px;"></div>
<svg style="position:absolute;left:872px;top:473.3px;" width="15" height="13" viewBox="0 0 15 13" fill="none"><rect x=".5" y=".5" width="14" height="12" fill="#f6f6f6" stroke="#e6a58a"/><rect x="2.5" y="3" width="4" height="7" fill="#e4e4e4"/><rect x="8" y="3" width="4.5" height="7" fill="#e4e4e4"/></svg>
<div class="t" style="top:479.91px;font-size:12.95px;color:#232323;left:893.60px;">XtraFinderDualPanel.jpg</div>
<div class="t" style="top:479.83px;font-size:12.6px;color:#7b7979;left:1067.40px;">Today, 11:13</div>
<div class="t" style="top:479.90px;font-size:12.4px;color:#7b7979;right:231.80px;">259 KB</div>
<div class="t" style="top:479.83px;font-size:12.6px;color:#7b7979;left:1283.50px;">JPEG Image</div>
<svg style="position:absolute;left:872px;top:493.94px;" width="15" height="13" viewBox="0 0 15 13" fill="none"><rect x=".5" y=".5" width="14" height="12" fill="#f4f4f4" stroke="#dcdcdc"/><rect x="2.5" y="3" width="4" height="7" fill="#e2e2e2"/><rect x="8" y="3" width="4.5" height="7" fill="#e2e2e2"/></svg>
<div class="t" style="top:500.55px;font-size:12.95px;color:#232323;left:893.60px;">XtraFinderDualPanel.png</div>
<div class="t" style="top:500.47px;font-size:12.6px;color:#7b7979;left:1067.40px;">Today, 11:09</div>
<div class="t" style="top:500.54px;font-size:12.4px;color:#7b7979;right:231.80px;">924 KB</div>
<div class="t" style="top:500.47px;font-size:12.6px;color:#7b7979;left:1283.50px;">PNG Image</div>
<div class="r" style="left:854.4px;top:510.78px;width:561px;height:20.2px;background:#f4f4f5;border-radius:5px;"></div>
<svg style="position:absolute;left:872px;top:514.58px;" width="15" height="13" viewBox="0 0 15 13" fill="none"><rect x=".5" y="2" width="14" height="9" fill="#f2f2f2" stroke="#dadada"/><rect x="1.5" y="3" width="12" height="7" fill="#f08a2a"/><rect x="6" y="4.5" width="7" height="5" fill="#f3efe9"/></svg>
<div class="t" style="top:521.19px;font-size:12.95px;color:#232323;left:893.60px;">10.51.17.jpg</div>
<div class="t" style="top:521.11px;font-size:12.6px;color:#7b7979;left:1067.40px;">Today, 10:51</div>
<div class="t" style="top:521.18px;font-size:12.4px;color:#7b7979;right:231.80px;">151 KB</div>
<div class="t" style="top:521.11px;font-size:12.6px;color:#7b7979;left:1283.50px;">JPEG Image</div>
<svg style="position:absolute;left:872px;top:535.22px;" width="15" height="13" viewBox="0 0 15 13" fill="none"><defs><linearGradient id="pp" x1="0" x2="1"><stop offset="0" stop-color="#3a2be0"/><stop offset=".6" stop-color="#b42fd0"/><stop offset="1" stop-color="#f03050"/></linearGradient></defs><rect x=".5" y="2" width="14" height="9" fill="url(#pp)"/><circle cx="7.5" cy="6" r="1.5" fill="#7ff"/></svg>
<div class="t" style="top:541.83px;font-size:12.95px;color:#232323;left:893.60px;">Mac_Apple_Finder-2.jpg</div>
<div class="t" style="top:541.75px;font-size:12.6px;color:#7b7979;left:1067.40px;">Today, 10:49</div>
<div class="t" style="top:541.82px;font-size:12.4px;color:#7b7979;right:231.80px;">99 KB</div>
<div class="t" style="top:541.75px;font-size:12.6px;color:#7b7979;left:1283.50px;">JPEG Image</div>
</div></div>
<div class="r" style="left:843px;top:551.5px;width:599px;height:24.5px;background:#e9e3e0;"></div>
<svg style="position:absolute;left:854px;top:557px;" width="17" height="14" viewBox="0 0 17 14" fill="none"><path d="M1.6 .8h4.3l1.8 1.6h7.4a1.3 1.3 0 0 1 1.3 1.3v8.2a1.3 1.3 0 0 1-1.3 1.3H1.6A1.3 1.3 0 0 1 .3 11.9V2.1A1.3 1.3 0 0 1 1.6.8zM.3 4.3h16" stroke="#4b4644" stroke-width="1.2" stroke-linejoin="round"/><path d="M12 7.3l.8 1.6 1.7.2-1.3 1.1.4 1.7-1.6-.9-1.6.9.4-1.7-1.3-1.1 1.7-.2z" fill="#4b4644"/></svg>
<svg style="position:absolute;left:883px;top:557px;" width="11" height="14" viewBox="0 0 11 14" fill="none"><path d="M2.3 6.5V4.2a3.2 3.2 0 0 1 6.4 0v2.3" stroke="#4b4644" stroke-width="1.5"/><rect x=".3" y="6.3" width="10.4" height="7.2" rx="1" fill="#4b4644"/><rect x="4.7" y="9.2" width="1.6" height="3.2" fill="#e9e3e0"/></svg>
<svg style="position:absolute;left:905.4px;top:557.5px;" width="17" height="13" viewBox="0 0 17 13" fill="none"><rect x=".9" y=".9" width="15.2" height="11.2" rx="1" stroke="#4b4644" stroke-width="1.2"/><circle cx="8.5" cy="6.5" r="1.7" fill="#4b4644"/></svg>
<svg style="position:absolute;left:930px;top:556px;" width="19" height="15" viewBox="0 0 19 15" fill="none"><rect x=".6" y=".6" width="8.4" height="13.8" rx="1.2" stroke="#4b4644" stroke-width="1.2"/><rect x="9.8" y=".6" width="8.4" height="13.8" rx="1.2" stroke="#4b4644" stroke-width="1.2"/><path d="M3 3.4h3M3 5.4h3M3 7.4h3M12.2 3.4h3M12.2 5.4h3M12.2 7.4h3" stroke="#4b4644" stroke-width="1"/></svg>
<svg style="position:absolute;left:959.5px;top:557px;" width="16" height="15" viewBox="0 0 16 15" fill="none"><path d="M2.2.7h11.6a1.5 1.5 0 0 1 1.5 1.5v7.3a1.5 1.5 0 0 1-1.5 1.5H7.5L4.7 14v-3H2.2A1.5 1.5 0 0 1 .7 9.5V2.2A1.5 1.5 0 0 1 2.2.7z" stroke="#4b4644" stroke-width="1.2" stroke-linejoin="round"/><path d="M4 4h8M4 6.2h8M4 8.4h5" stroke="#4b4644" stroke-width="1"/></svg>
<div class="t" style="top:564.44px;font-size:12px;color:#3b3836;left:1039.00px;">1 of 2 250 selected, 12,16 GB available</div>
<svg style="position:absolute;left:1385px;top:556.5px;" width="17" height="14" viewBox="0 0 17 14" fill="none"><rect x=".7" y=".7" width="15.6" height="12.6" rx="1.6" stroke="#4b4644" stroke-width="1.3"/><path d="M11.3.7v12.6" stroke="#4b4644" stroke-width="1.2"/><rect x="13.1" y="3" width="1.5" height="4.4" fill="#4b4644"/></svg>
<svg style="position:absolute;left:1413.5px;top:561px;" width="20" height="6" viewBox="0 0 20 6" fill="none"><circle cx="3.80" cy="3" r="2.1" fill="#4b4644"/><circle cx="9.90" cy="3" r="2.1" fill="#4b4644"/><circle cx="16.00" cy="3" r="2.1" fill="#4b4644"/></svg>
<div class="r" style="left:244px;top:576px;width:599px;height:34px;background:#f0f0f2;"></div>
<div class="r" style="left:244px;top:610px;width:599px;height:1px;background:#e0e0e0;"></div>
<svg style="position:absolute;left:256.3px;top:588.3px;" width="8" height="11" viewBox="0 0 8 11" fill="none"><path d="M6.5 .8 1.5 5.5l5 4.7" stroke="#59595b" stroke-width="1.4" stroke-linecap="round" stroke-linejoin="round"/></svg>
<svg style="position:absolute;left:277.7px;top:588.3px;" width="8" height="11" viewBox="0 0 8 11" fill="none"><path d="M1.5 .8l5 4.7-5 4.7" stroke="#b3b3b5" stroke-width="1.4" stroke-linecap="round" stroke-linejoin="round"/></svg>
<svg style="position:absolute;left:308.7px;top:589.9px;" width="8" height="9" viewBox="0 0 8 9" fill="none"><path d="M0.3 0.2 7.4 4.5 .3 8.8z" fill="#5b5b5d"/></svg>
<svg style="position:absolute;left:321.5px;top:588.5px;" width="16" height="11" viewBox="0 0 16 11" fill="none"><path d="M4 10.3h8.6a3 3 0 0 0 .3-6A4.3 4.3 0 0 0 4.8 3.2 3.6 3.6 0 0 0 4 10.3z" stroke="#8e9aa8" stroke-width="1.1" fill="#f8f9fb"/></svg>
<div class="t" style="top:595.14px;font-size:13.75px;color:#6f6d6d;left:343.00px;">iCloud Drive</div>
<svg style="position:absolute;left:429.0px;top:589.9px;" width="8" height="9" viewBox="0 0 8 9" fill="none"><path d="M0.3 0.2 7.4 4.5 .3 8.8z" fill="#5b5b5d"/></svg>
<svg style="position:absolute;left:824px;top:588px;" width="6" height="14" viewBox="0 0 6 14" fill="none"><circle cx="3" cy="2.20" r="1.25" fill="#3d3d3f"/><circle cx="3" cy="6.40" r="1.25" fill="#3d3d3f"/><circle cx="3" cy="10.60" r="1.25" fill="#3d3d3f"/></svg>
<div class="r" style="left:244px;top:611px;width:599px;height:27.5px;background:#fff;border-bottom:1px solid #e3e3e3;box-sizing:border-box;"></div>
<div class="t" style="top:625.31px;font-size:11.8px;color:#2c2c2c;left:282.40px;-webkit-text-stroke:.25px #2c2c2c;">Name</div>
<div class="t" style="top:625.04px;font-size:12px;color:#1e1e1e;font-weight:700;left:502.90px;">Date Modified</div>
<svg style="position:absolute;left:601.7px;top:623px;" width="8" height="5" viewBox="0 0 8 5" fill="none"><path d="M1 .8 4 3.8 7 .8" stroke="#5d5d5f" stroke-width="1.1" stroke-linecap="round" stroke-linejoin="round"/></svg>
<div class="t" style="top:625.11px;font-size:11.8px;color:#2c2c2c;left:633.70px;-webkit-text-stroke:.25px #2c2c2c;">Size</div>
<div class="t" style="top:625.11px;font-size:11.8px;color:#2c2c2c;left:693.50px;-webkit-text-stroke:.25px #2c2c2c;">Kind</div>
<div class="r" style="left:485.8px;top:616px;width:1px;height:16.5px;background:#e2e2e2;"></div>
<div class="r" style="left:616.5px;top:616px;width:1px;height:16.5px;background:#e2e2e2;"></div>
<div class="r" style="left:676.3px;top:616px;width:1px;height:16.5px;background:#e2e2e2;"></div>
<div class="r" style="left:815.7px;top:616px;width:1px;height:16.5px;background:#e2e2e2;"></div>
<div class="r" style="left:826px;top:638.5px;width:17px;height:398px;background:#fafafa;border-left:1px solid #ececec;box-sizing:border-box;"></div>
<div class="r" style="left:830.5px;top:691px;width:7.8px;height:234px;background:#c1c1c1;border-radius:4px;"></div>
<div class="r" style="left:244px;top:639px;width:582px;height:397.5px;overflow:hidden;">
<div class="r" style="left:-244px;top:-639px;width:1500px;height:1138px;">
<svg style="position:absolute;left:261.6px;top:646.0px;" width="6" height="9" viewBox="0 0 6 9" fill="none"><path d="M1.2 1 4.8 4.5 1.2 8" stroke="#5d5d5f" stroke-width="1.4" stroke-linecap="round" stroke-linejoin="round"/></svg>
<svg style="position:absolute;left:272.3px;top:643.9px;width:15px;height:13.5px;" width="15" height="13.5" viewBox="0 0 15 13.5" fill="none"><path d="M.4 1.6A1.2 1.2 0 0 1 1.6.4h3.8a1 1 0 0 1 .7.3l1.3 1.3h6A1.2 1.2 0 0 1 14.6 3.2v8.2H.4z" fill="#1f8ae3"/><rect x=".4" y="3.2" width="14.2" height="10" rx="1" fill="url(#fg)"/></svg>
<div class="t" style="top:650.81px;font-size:12.95px;color:#232323;left:294.40px;">Clips</div>
<div class="t" style="top:650.73px;font-size:12.6px;color:#7b7979;left:493.80px;">30.07.2023, 14:22</div>
<div class="t" style="top:650.80px;font-size:12.4px;color:#7b7979;right:830.40px;letter-spacing:.9px;">--</div>
<div class="t" style="top:650.73px;font-size:12.6px;color:#7b7979;left:684.10px;">Folder</div>
<div class="r" style="left:255.6px;top:661.05px;width:560px;height:20.2px;background:#f4f4f5;border-radius:5px;"></div>
<svg style="position:absolute;left:261.6px;top:666.65px;" width="6" height="9" viewBox="0 0 6 9" fill="none"><path d="M1.2 1 4.8 4.5 1.2 8" stroke="#5d5d5f" stroke-width="1.4" stroke-linecap="round" stroke-linejoin="round"/></svg>
<svg style="position:absolute;left:272.3px;top:664.55px;width:15px;height:13.5px;" width="15" height="13.5" viewBox="0 0 15 13.5" fill="none"><path d="M.4 1.6A1.2 1.2 0 0 1 1.6.4h3.8a1 1 0 0 1 .7.3l1.3 1.3h6A1.2 1.2 0 0 1 14.6 3.2v8.2H.4z" fill="#1f8ae3"/><rect x=".4" y="3.2" width="14.2" height="10" rx="1" fill="url(#fg)"/></svg>
<div class="t" style="top:671.46px;font-size:12.95px;color:#232323;left:294.40px;">smashhit</div>
<div class="t" style="top:671.38px;font-size:12.6px;color:#7b7979;left:493.80px;">30.07.2023, 14:21</div>
<div class="t" style="top:671.45px;font-size:12.4px;color:#7b7979;right:830.40px;letter-spacing:.9px;">--</div>
<div class="t" style="top:671.38px;font-size:12.6px;color:#7b7979;left:684.10px;">Folder</div>
<svg style="position:absolute;left:261.6px;top:687.3px;" width="6" height="9" viewBox="0 0 6 9" fill="none"><path d="M1.2 1 4.8 4.5 1.2 8" stroke="#5d5d5f" stroke-width="1.4" stroke-linecap="round" stroke-linejoin="round"/></svg>
<svg style="position:absolute;left:272.3px;top:685.1999999999999px;width:15px;height:13.5px;" width="15" height="13.5" viewBox="0 0 15 13.5" fill="none"><path d="M.4 1.6A1.2 1.2 0 0 1 1.6.4h3.8a1 1 0 0 1 .7.3l1.3 1.3h6A1.2 1.2 0 0 1 14.6 3.2v8.2H.4z" fill="#1f8ae3"/><rect x=".4" y="3.2" width="14.2" height="10" rx="1" fill="url(#fg)"/></svg>
<div class="t" style="top:692.11px;font-size:12.95px;color:#232323;left:294.40px;">Islands</div>
<div class="t" style="top:692.03px;font-size:12.6px;color:#7b7979;left:493.80px;">30.07.2023, 14:21</div>
<div class="t" style="top:692.10px;font-size:12.4px;color:#7b7979;right:830.40px;letter-spacing:.9px;">--</div>
<div class="t" style="top:692.03px;font-size:12.6px;color:#7b7979;left:684.10px;">Folder</div>
<div class="r" style="left:255.6px;top:702.35px;width:560px;height:20.2px;background:#f4f4f5;border-radius:5px;"></div>
<svg style="position:absolute;left:261.6px;top:707.95px;" width="6" height="9" viewBox="0 0 6 9" fill="none"><path d="M1.2 1 4.8 4.5 1.2 8" stroke="#5d5d5f" stroke-width="1.4" stroke-linecap="round" stroke-linejoin="round"/></svg>
<svg style="position:absolute;left:272.3px;top:705.85px;width:15px;height:13.5px;" width="15" height="13.5" viewBox="0 0 15 13.5" fill="none"><path d="M.4 1.6A1.2 1.2 0 0 1 1.6.4h3.8a1 1 0 0 1 .7.3l1.3 1.3h6A1.2 1.2 0 0 1 14.6 3.2v8.2H.4z" fill="#1f8ae3"/><rect x=".4" y="3.2" width="14.2" height="10" rx="1" fill="url(#fg)"/></svg>
<div class="t" style="top:712.76px;font-size:12.95px;color:#232323;left:294.40px;">Commute</div>
<div class="t" style="top:712.68px;font-size:12.6px;color:#7b7979;left:493.80px;">30.07.2023, 14:21</div>
<div class="t" style="top:712.75px;font-size:12.4px;color:#7b7979;right:830.40px;letter-spacing:.9px;">--</div>
<div class="t" style="top:712.68px;font-size:12.6px;color:#7b7979;left:684.10px;">Folder</div>
<svg style="position:absolute;left:261.6px;top:728.6px;" width="6" height="9" viewBox="0 0 6 9" fill="none"><path d="M1.2 1 4.8 4.5 1.2 8" stroke="#5d5d5f" stroke-width="1.4" stroke-linecap="round" stroke-linejoin="round"/></svg>
<svg style="position:absolute;left:272.3px;top:726.5px;width:15px;height:13.5px;" width="15" height="13.5" viewBox="0 0 15 13.5" fill="none"><path d="M.4 1.6A1.2 1.2 0 0 1 1.6.4h3.8a1 1 0 0 1 .7.3l1.3 1.3h6A1.2 1.2 0 0 1 14.6 3.2v8.2H.4z" fill="#1f8ae3"/><rect x=".4" y="3.2" width="14.2" height="10" rx="1" fill="url(#fg)"/></svg>
<div class="t" style="top:733.41px;font-size:12.95px;color:#232323;left:294.40px;">Fallout Shelter</div>
<div class="t" style="top:733.33px;font-size:12.6px;color:#7b7979;left:493.80px;">30.07.2023, 14:20</div>
<div class="t" style="top:733.40px;font-size:12.4px;color:#7b7979;right:830.40px;letter-spacing:.9px;">--</div>
<div class="t" style="top:733.33px;font-size:12.6px;color:#7b7979;left:684.10px;">Folder</div>
<div class="r" style="left:255.6px;top:743.65px;width:560px;height:20.2px;background:#f4f4f5;border-radius:5px;"></div>
<svg style="position:absolute;left:261.6px;top:749.25px;" width="6" height="9" viewBox="0 0 6 9" fill="none"><path d="M1.2 1 4.8 4.5 1.2 8" stroke="#5d5d5f" stroke-width="1.4" stroke-linecap="round" stroke-linejoin="round"/></svg>
<svg style="position:absolute;left:272.3px;top:747.15px;width:15px;height:13.5px;" width="15" height="13.5" viewBox="0 0 15 13.5" fill="none"><path d="M.4 1.6A1.2 1.2 0 0 1 1.6.4h3.8a1 1 0 0 1 .7.3l1.3 1.3h6A1.2 1.2 0 0 1 14.6 3.2v8.2H.4z" fill="#1f8ae3"/><rect x=".4" y="3.2" width="14.2" height="10" rx="1" fill="url(#fg)"/></svg>
<div class="t" style="top:754.06px;font-size:12.95px;color:#232323;left:294.40px;">BB Blitz</div>
<div class="t" style="top:753.98px;font-size:12.6px;color:#7b7979;left:493.80px;">30.07.2023, 14:20</div>
<div class="t" style="top:754.05px;font-size:12.4px;color:#7b7979;right:830.40px;letter-spacing:.9px;">--</div>
<div class="t" style="top:753.98px;font-size:12.6px;color:#7b7979;left:684.10px;">Folder</div>
<svg style="position:absolute;left:261.6px;top:769.9px;" width="6" height="9" viewBox="0 0 6 9" fill="none"><path d="M1.2 1 4.8 4.5 1.2 8" stroke="#5d5d5f" stroke-width="1.4" stroke-linecap="round" stroke-linejoin="round"/></svg>
<svg style="position:absolute;left:272.3px;top:767.8px;width:15px;height:13.5px;" width="15" height="13.5" viewBox="0 0 15 13.5" fill="none"><path d="M.4 1.6A1.2 1.2 0 0 1 1.6.4h3.8a1 1 0 0 1 .7.3l1.3 1.3h6A1.2 1.2 0 0 1 14.6 3.2v8.2H.4z" fill="#1f8ae3"/><rect x=".4" y="3.2" width="14.2" height="10" rx="1" fill="url(#fg)"/></svg>
<div class="t" style="top:774.71px;font-size:12.95px;color:#232323;left:294.40px;">Fieldrunners2</div>
<div class="t" style="top:774.63px;font-size:12.6px;color:#7b7979;left:493.80px;">30.07.2023, 14:19</div>
<div class="t" style="top:774.70px;font-size:12.4px;color:#7b7979;right:830.40px;letter-spacing:.9px;">--</div>
<div class="t" style="top:774.63px;font-size:12.6px;color:#7b7979;left:684.10px;">Folder</div>
<div class="r" style="left:255.6px;top:784.9499999999999px;width:560px;height:20.2px;background:#f4f4f5;border-radius:5px;"></div>
<svg style="position:absolute;left:261.6px;top:790.55px;" width="6" height="9" viewBox="0 0 6 9" fill="none"><path d="M1.2 1 4.8 4.5 1.2 8" stroke="#5d5d5f" stroke-width="1.4" stroke-linecap="round" stroke-linejoin="round"/></svg>
<svg style="position:absolute;left:272.3px;top:788.4499999999999px;width:15px;height:13.5px;" width="15" height="13.5" viewBox="0 0 15 13.5" fill="none"><path d="M.4 1.6A1.2 1.2 0 0 1 1.6.4h3.8a1 1 0 0 1 .7.3l1.3 1.3h6A1.2 1.2 0 0 1 14.6 3.2v8.2H.4z" fill="#1f8ae3"/><rect x=".4" y="3.2" width="14.2" height="10" rx="1" fill="url(#fg)"/></svg>
<div class="t" style="top:795.36px;font-size:12.95px;color:#232323;left:294.40px;">pinout</div>
<div class="t" style="top:795.28px;font-size:12.6px;color:#7b7979;left:493.80px;">30.07.2023, 14:19</div>
<div class="t" style="top:795.35px;font-size:12.4px;color:#7b7979;right:830.40px;letter-spacing:.9px;">--</div>
<div class="t" style="top:795.28px;font-size:12.6px;color:#7b7979;left:684.10px;">Folder</div>
<svg style="position:absolute;left:261.6px;top:811.2px;" width="6" height="9" viewBox="0 0 6 9" fill="none"><path d="M1.2 1 4.8 4.5 1.2 8" stroke="#5d5d5f" stroke-width="1.4" stroke-linecap="round" stroke-linejoin="round"/></svg>
<svg style="position:absolute;left:272.5px;top:808.4000000000001px;" width="15" height="15" viewBox="0 0 15 15" fill="none"><rect x=".3" y=".3" width="14.4" height="14.4" rx="3.2" fill="#f7902a"/><path d="M4 11.5 11 3.5" stroke="#fff" stroke-width="1.6" stroke-linecap="round"/><path d="M3.2 12.2 4.4 10.6 5 11.2z" fill="#fff"/></svg>
<div class="t" style="top:816.01px;font-size:12.95px;color:#232323;left:294.40px;">Pages</div>
<div class="t" style="top:815.93px;font-size:12.6px;color:#7b7979;left:493.80px;">23.07.2023, 17:13</div>
<div class="t" style="top:816.00px;font-size:12.4px;color:#7b7979;right:830.40px;letter-spacing:.9px;">--</div>
<div class="t" style="top:815.93px;font-size:12.6px;color:#7b7979;left:684.10px;">Folder</div>
<div class="r" style="left:255.6px;top:826.25px;width:560px;height:20.2px;background:#f4f4f5;border-radius:5px;"></div>
<svg style="position:absolute;left:261.6px;top:831.85px;" width="6" height="9" viewBox="0 0 6 9" fill="none"><path d="M1.2 1 4.8 4.5 1.2 8" stroke="#5d5d5f" stroke-width="1.4" stroke-linecap="round" stroke-linejoin="round"/></svg>
<svg style="position:absolute;left:272.3px;top:829.75px;width:15px;height:13.5px;" width="15" height="13.5" viewBox="0 0 15 13.5" fill="none"><path d="M.4 1.6A1.2 1.2 0 0 1 1.6.4h3.8a1 1 0 0 1 .7.3l1.3 1.3h6A1.2 1.2 0 0 1 14.6 3.2v8.2H.4z" fill="#1f8ae3"/><rect x=".4" y="3.2" width="14.2" height="10" rx="1" fill="url(#fg)"/></svg>
<div class="t" style="top:836.66px;font-size:12.95px;color:#232323;left:294.40px;">Downloads</div>
<div class="t" style="top:836.58px;font-size:12.6px;color:#7b7979;left:493.80px;">19.07.2023, 20:39</div>
<div class="t" style="top:836.65px;font-size:12.4px;color:#7b7979;right:830.40px;letter-spacing:.9px;">--</div>
<div class="t" style="top:836.58px;font-size:12.6px;color:#7b7979;left:684.10px;">Folder</div>
<svg style="position:absolute;left:261.6px;top:852.5px;" width="6" height="9" viewBox="0 0 6 9" fill="none"><path d="M1.2 1 4.8 4.5 1.2 8" stroke="#5d5d5f" stroke-width="1.4" stroke-linecap="round" stroke-linejoin="round"/></svg>
<svg style="position:absolute;left:272.5px;top:849.7px;" width="15" height="15" viewBox="0 0 15 15" fill="none"><defs><linearGradient id="scg" x1="0" y1="0" x2="1" y2="1"><stop offset="0" stop-color="#ff4f6f"/><stop offset=".5" stop-color="#a94ff0"/><stop offset="1" stop-color="#3fb6ff"/></linearGradient></defs><rect x=".3" y=".3" width="14.4" height="14.4" rx="3.2" fill="#2a2d64"/><path d="M7.5 2.5 12.5 5.5 7.5 8.5 2.5 5.5z" fill="url(#scg)"/><path d="M7.5 6.5 12.5 9.5 7.5 12.5 2.5 9.5z" fill="url(#scg)" opacity=".8"/></svg>
<div class="t" style="top:857.31px;font-size:12.95px;color:#232323;left:294.40px;">Shortcuts</div>
<div class="t" style="top:857.23px;font-size:12.6px;color:#7b7979;left:493.80px;">04.06.2023, 10:57</div>
<div class="t" style="top:857.30px;font-size:12.4px;color:#7b7979;right:830.40px;letter-spacing:.9px;">--</div>
<div class="t" style="top:857.23px;font-size:12.6px;color:#7b7979;left:684.10px;">Folder</div>
<div class="r" style="left:255.6px;top:867.55px;width:560px;height:20.2px;background:#f4f4f5;border-radius:5px;"></div>
<svg style="position:absolute;left:261.6px;top:873.15px;" width="6" height="9" viewBox="0 0 6 9" fill="none"><path d="M1.2 1 4.8 4.5 1.2 8" stroke="#5d5d5f" stroke-width="1.4" stroke-linecap="round" stroke-linejoin="round"/></svg>
<svg style="position:absolute;left:272.3px;top:871.05px;width:15px;height:13.5px;" width="15" height="13.5" viewBox="0 0 15 13.5" fill="none"><path d="M.4 1.6A1.2 1.2 0 0 1 1.6.4h3.8a1 1 0 0 1 .7.3l1.3 1.3h6A1.2 1.2 0 0 1 14.6 3.2v8.2H.4z" fill="#1f8ae3"/><rect x=".4" y="3.2" width="14.2" height="10" rx="1" fill="url(#fg)"/></svg>
<div class="t" style="top:877.96px;font-size:12.95px;color:#232323;left:294.40px;">Cert</div>
<div class="t" style="top:877.88px;font-size:12.6px;color:#7b7979;left:493.80px;">20.04.2023, 20:34</div>
<div class="t" style="top:877.95px;font-size:12.4px;color:#7b7979;right:830.40px;letter-spacing:.9px;">--</div>
<div class="t" style="top:877.88px;font-size:12.6px;color:#7b7979;left:684.10px;">Folder</div>
<svg style="position:absolute;left:275px;top:890.8px;" width="11" height="15" viewBox="0 0 11 15" fill="none"><path d="M.5 1.2A.8.8 0 0 1 1.3.4h6l3.2 3.2v10.2a.8.8 0 0 1-.8.8H1.3a.8.8 0 0 1-.8-.8z" fill="#fff" stroke="#dedede" stroke-width=".8"/><rect x="2.6" y="6.4" width="5.8" height="5.8" rx="1.2" fill="#f3324f"/><circle cx="5.5" cy="9.3" r="1.3" fill="#fff"/></svg>
<div class="t" style="top:898.61px;font-size:12.95px;color:#232323;left:294.40px;">IPTVplaylist.m3u</div>
<div class="t" style="top:898.53px;font-size:12.6px;color:#7b7979;left:493.80px;">20.03.2023, 08:20</div>
<div class="t" style="top:898.60px;font-size:12.4px;color:#7b7979;right:831.20px;">12 KB</div>
<div class="t" style="top:898.53px;font-size:12.6px;color:#7b7979;left:684.10px;">M3U Playlist</div>
<div class="r" style="left:255.6px;top:908.85px;width:560px;height:20.2px;background:#f4f4f5;border-radius:5px;"></div>
<svg style="position:absolute;left:261.6px;top:914.45px;" width="6" height="9" viewBox="0 0 6 9" fill="none"><path d="M1.2 1 4.8 4.5 1.2 8" stroke="#5d5d5f" stroke-width="1.4" stroke-linecap="round" stroke-linejoin="round"/></svg>
<svg style="position:absolute;left:272.5px;top:911.6500000000001px;" width="15" height="15" viewBox="0 0 15 15" fill="none"><rect x=".3" y=".3" width="14.4" height="14.4" rx="3.2" fill="#f78a1e"/><path d="M2.6 4.6c1.6-.6 3.4-.6 4.6.4v6.4c-1.2-.9-3-.9-4.6-.3zM12.4 4.6c-1.6-.6-3.4-.6-4.6.4v6.4c1.2-.9 3-.9 4.6-.3z" fill="#fff"/></svg>
<div class="t" style="top:919.26px;font-size:12.95px;color:#232323;left:294.40px;">Books</div>
<div class="t" style="top:919.18px;font-size:12.6px;color:#7b7979;left:493.80px;">10.02.2023, 17:35</div>
<div class="t" style="top:919.25px;font-size:12.4px;color:#7b7979;right:830.40px;letter-spacing:.9px;">--</div>
<div class="t" style="top:919.18px;font-size:12.6px;color:#7b7979;left:684.10px;">Folder</div>
<svg style="position:absolute;left:459.5px;top:912.95px;" width="18" height="12" viewBox="0 0 18 12" fill="none"><path d="M4.4 11h9.4a3.4 3.4 0 0 0 .3-6.8A4.8 4.8 0 0 0 5.2 3.3 3.9 3.9 0 0 0 4.4 11z" stroke="#88888a" stroke-width="1.1"/><path d="M9 5.2v4.6M7 7.8l2 2 2-2" stroke="#88888a" stroke-width="1.1" stroke-linecap="round"/></svg>
<svg style="position:absolute;left:261.6px;top:935.0999999999999px;" width="6" height="9" viewBox="0 0 6 9" fill="none"><path d="M1.2 1 4.8 4.5 1.2 8" stroke="#5d5d5f" stroke-width="1.4" stroke-linecap="round" stroke-linejoin="round"/></svg>
<svg style="position:absolute;left:272.3px;top:932.9999999999999px;width:15px;height:13.5px;" width="15" height="13.5" viewBox="0 0 15 13.5" fill="none"><path d="M.4 1.6A1.2 1.2 0 0 1 1.6.4h3.8a1 1 0 0 1 .7.3l1.3 1.3h6A1.2 1.2 0 0 1 14.6 3.2v8.2H.4z" fill="#1f8ae3"/><rect x=".4" y="3.2" width="14.2" height="10" rx="1" fill="url(#fg)"/></svg>
<div class="t" style="top:939.91px;font-size:12.95px;color:#232323;left:294.40px;">Devices</div>
<div class="t" style="top:939.83px;font-size:12.6px;color:#7b7979;left:493.80px;">15.01.2023, 17:28</div>
<div class="t" style="top:939.90px;font-size:12.4px;color:#7b7979;right:830.40px;letter-spacing:.9px;">--</div>
<div class="t" style="top:939.83px;font-size:12.6px;color:#7b7979;left:684.10px;">Folder</div>
<div class="r" style="left:255.6px;top:950.15px;width:560px;height:20.2px;background:#f4f4f5;border-radius:5px;"></div>
<svg style="position:absolute;left:261.6px;top:955.75px;" width="6" height="9" viewBox="0 0 6 9" fill="none"><path d="M1.2 1 4.8 4.5 1.2 8" stroke="#5d5d5f" stroke-width="1.4" stroke-linecap="round" stroke-linejoin="round"/></svg>
<svg style="position:absolute;left:272.3px;top:953.65px;width:15px;height:13.5px;" width="15" height="13.5" viewBox="0 0 15 13.5" fill="none"><path d="M.4 1.6A1.2 1.2 0 0 1 1.6.4h3.8a1 1 0 0 1 .7.3l1.3 1.3h6A1.2 1.2 0 0 1 14.6 3.2v8.2H.4z" fill="#1f8ae3"/><rect x=".4" y="3.2" width="14.2" height="10" rx="1" fill="url(#fg)"/></svg>
<div class="t" style="top:960.56px;font-size:12.95px;color:#232323;left:294.40px;">Life</div>
<div class="t" style="top:960.48px;font-size:12.6px;color:#7b7979;left:493.80px;">15.01.2023, 17:28</div>
<div class="t" style="top:960.55px;font-size:12.4px;color:#7b7979;right:830.40px;letter-spacing:.9px;">--</div>
<div class="t" style="top:960.48px;font-size:12.6px;color:#7b7979;left:684.10px;">Folder</div>
<svg style="position:absolute;left:261.6px;top:976.4px;" width="6" height="9" viewBox="0 0 6 9" fill="none"><path d="M1.2 1 4.8 4.5 1.2 8" stroke="#5d5d5f" stroke-width="1.4" stroke-linecap="round" stroke-linejoin="round"/></svg>
<svg style="position:absolute;left:272.3px;top:974.3px;width:15px;height:13.5px;" width="15" height="13.5" viewBox="0 0 15 13.5" fill="none"><path d="M.4 1.6A1.2 1.2 0 0 1 1.6.4h3.8a1 1 0 0 1 .7.3l1.3 1.3h6A1.2 1.2 0 0 1 14.6 3.2v8.2H.4z" fill="#1f8ae3"/><rect x=".4" y="3.2" width="14.2" height="10" rx="1" fill="url(#fg)"/></svg>
<div class="t" style="top:981.21px;font-size:12.95px;color:#232323;left:294.40px;">Viber</div>
<div class="t" style="top:981.13px;font-size:12.6px;color:#7b7979;left:493.80px;">07.01.2023, 17:52</div>
<div class="t" style="top:981.20px;font-size:12.4px;color:#7b7979;right:830.40px;letter-spacing:.9px;">--</div>
<div class="t" style="top:981.13px;font-size:12.6px;color:#7b7979;left:684.10px;">Folder</div>
<div class="r" style="left:255.6px;top:991.4499999999999px;width:560px;height:20.2px;background:#f4f4f5;border-radius:5px;"></div>
<svg style="position:absolute;left:261.6px;top:997.05px;" width="6" height="9" viewBox="0 0 6 9" fill="none"><path d="M1.2 1 4.8 4.5 1.2 8" stroke="#5d5d5f" stroke-width="1.4" stroke-linecap="round" stroke-linejoin="round"/></svg>
<svg style="position:absolute;left:272.3px;top:994.9499999999999px;width:15px;height:13.5px;" width="15" height="13.5" viewBox="0 0 15 13.5" fill="none"><path d="M.4 1.6A1.2 1.2 0 0 1 1.6.4h3.8a1 1 0 0 1 .7.3l1.3 1.3h6A1.2 1.2 0 0 1 14.6 3.2v8.2H.4z" fill="#1f8ae3"/><rect x=".4" y="3.2" width="14.2" height="10" rx="1" fill="url(#fg)"/></svg>
<div class="t" style="top:1001.86px;font-size:12.95px;color:#232323;left:294.40px;">ScannerPro</div>
<div class="t" style="top:1001.78px;font-size:12.6px;color:#7b7979;left:493.80px;">07.01.2023, 17:48</div>
<div class="t" style="top:1001.85px;font-size:12.4px;color:#7b7979;right:830.40px;letter-spacing:.9px;">--</div>
<div class="t" style="top:1001.78px;font-size:12.6px;color:#7b7979;left:684.10px;">Folder</div>
<svg style="position:absolute;left:261.6px;top:1017.7px;" width="6" height="9" viewBox="0 0 6 9" fill="none"><path d="M1.2 1 4.8 4.5 1.2 8" stroke="#5d5d5f" stroke-width="1.4" stroke-linecap="round" stroke-linejoin="round"/></svg>
<svg style="position:absolute;left:272.3px;top:1015.6px;width:15px;height:13.5px;" width="15" height="13.5" viewBox="0 0 15 13.5" fill="none"><path d="M.4 1.6A1.2 1.2 0 0 1 1.6.4h3.8a1 1 0 0 1 .7.3l1.3 1.3h6A1.2 1.2 0 0 1 14.6 3.2v8.2H.4z" fill="#1f8ae3"/><rect x=".4" y="3.2" width="14.2" height="10" rx="1" fill="url(#fg)"/></svg>
<div class="t" style="top:1022.51px;font-size:12.95px;color:#232323;left:294.40px;">наблюдение App</div>
<div class="t" style="top:1022.43px;font-size:12.6px;color:#7b7979;left:493.80px;">07.01.2023, 17:45</div>
<div class="t" style="top:1022.50px;font-size:12.4px;color:#7b7979;right:830.40px;letter-spacing:.9px;">--</div>
<div class="t" style="top:1022.43px;font-size:12.6px;color:#7b7979;left:684.10px;">Folder</div>
<div class="r" style="left:255.6px;top:1032.75px;width:560px;height:20.2px;background:#f4f4f5;border-radius:5px;"></div>
<svg style="position:absolute;left:261.6px;top:1038.35px;" width="6" height="9" viewBox="0 0 6 9" fill="none"><path d="M1.2 1 4.8 4.5 1.2 8" stroke="#5d5d5f" stroke-width="1.4" stroke-linecap="round" stroke-linejoin="round"/></svg>
<svg style="position:absolute;left:272.3px;top:1036.25px;width:15px;height:13.5px;" width="15" height="13.5" viewBox="0 0 15 13.5" fill="none"><path d="M.4 1.6A1.2 1.2 0 0 1 1.6.4h3.8a1 1 0 0 1 .7.3l1.3 1.3h6A1.2 1.2 0 0 1 14.6 3.2v8.2H.4z" fill="#1f8ae3"/><rect x=".4" y="3.2" width="14.2" height="10" rx="1" fill="url(#fg)"/></svg>
<div class="t" style="top:1043.16px;font-size:12.95px;color:#232323;left:294.40px;">Cloud</div>
<div class="t" style="top:1043.08px;font-size:12.6px;color:#7b7979;left:493.80px;">06.01.2023, 11:02</div>
<div class="t" style="top:1043.15px;font-size:12.4px;color:#7b7979;right:830.40px;letter-spacing:.9px;">--</div>
<div class="t" style="top:1043.08px;font-size:12.6px;color:#7b7979;left:684.10px;">Folder</div>
</div></div>
<div class="r" style="left:244px;top:1036.5px;width:599px;height:24.5px;background:#e9e3e0;"></div>
<div class="r" style="left:843px;top:576px;width:1px;height:485px;background:#dedede;"></div>
<svg style="position:absolute;left:255px;top:1042px;" width="17" height="14" viewBox="0 0 17 14" fill="none"><path d="M1.6 .8h4.3l1.8 1.6h7.4a1.3 1.3 0 0 1 1.3 1.3v8.2a1.3 1.3 0 0 1-1.3 1.3H1.6A1.3 1.3 0 0 1 .3 11.9V2.1A1.3 1.3 0 0 1 1.6.8zM.3 4.3h16" stroke="#4b4644" stroke-width="1.2" stroke-linejoin="round"/><path d="M12 7.3l.8 1.6 1.7.2-1.3 1.1.4 1.7-1.6-.9-1.6.9.4-1.7-1.3-1.1 1.7-.2z" fill="#4b4644"/></svg>
<svg style="position:absolute;left:284px;top:1042px;" width="11" height="14" viewBox="0 0 11 14" fill="none"><path d="M2.3 6.5V4.2a3.2 3.2 0 0 1 6.4 0v2.3" stroke="#4b4644" stroke-width="1.5"/><rect x=".3" y="6.3" width="10.4" height="7.2" rx="1" fill="#4b4644"/><rect x="4.7" y="9.2" width="1.6" height="3.2" fill="#e9e3e0"/></svg>
<svg style="position:absolute;left:306.4px;top:1042.5px;" width="17" height="13" viewBox="0 0 17 13" fill="none"><rect x=".9" y=".9" width="15.2" height="11.2" rx="1" stroke="#4b4644" stroke-width="1.2"/><circle cx="8.5" cy="6.5" r="1.7" fill="#4b4644"/></svg>
<svg style="position:absolute;left:331px;top:1041px;" width="19" height="15" viewBox="0 0 19 15" fill="none"><rect x=".6" y=".6" width="8.4" height="13.8" rx="1.2" stroke="#4b4644" stroke-width="1.2"/><rect x="9.8" y=".6" width="8.4" height="13.8" rx="1.2" stroke="#4b4644" stroke-width="1.2"/><path d="M3 3.4h3M3 5.4h3M3 7.4h3M12.2 3.4h3M12.2 5.4h3M12.2 7.4h3" stroke="#4b4644" stroke-width="1"/></svg>
<svg style="position:absolute;left:360.5px;top:1042px;" width="16" height="15" viewBox="0 0 16 15" fill="none"><path d="M2.2.7h11.6a1.5 1.5 0 0 1 1.5 1.5v7.3a1.5 1.5 0 0 1-1.5 1.5H7.5L4.7 14v-3H2.2A1.5 1.5 0 0 1 .7 9.5V2.2A1.5 1.5 0 0 1 2.2.7z" stroke="#4b4644" stroke-width="1.2" stroke-linejoin="round"/><path d="M4 4h8M4 6.2h8M4 8.4h5" stroke="#4b4644" stroke-width="1"/></svg>
<div class="t" style="top:1049.24px;font-size:12px;color:#3b3836;left:468.50px;">32 items, 12,18 GB available</div>
<svg style="position:absolute;left:786px;top:1041.5px;" width="17" height="14" viewBox="0 0 17 14" fill="none"><rect x=".7" y=".7" width="15.6" height="12.6" rx="1.6" stroke="#4b4644" stroke-width="1.3"/><path d="M11.3.7v12.6" stroke="#4b4644" stroke-width="1.2"/><rect x="13.1" y="3" width="1.5" height="4.4" fill="#4b4644"/></svg>
<svg style="position:absolute;left:814.5px;top:1046px;" width="20" height="6" viewBox="0 0 20 6" fill="none"><circle cx="3.80" cy="3" r="2.1" fill="#4b4644"/><circle cx="9.90" cy="3" r="2.1" fill="#4b4644"/><circle cx="16.00" cy="3" r="2.1" fill="#4b4644"/></svg>
<div class="r" style="left:844px;top:576px;width:598px;height:34px;background:#f0f0f2;"></div>
<div class="r" style="left:843px;top:610px;width:599px;height:1px;background:#e0e0e0;"></div>
<svg style="position:absolute;left:855.3px;top:588.3px;" width="8" height="11" viewBox="0 0 8 11" fill="none"><path d="M6.5 .8 1.5 5.5l5 4.7" stroke="#59595b" stroke-width="1.4" stroke-linecap="round" stroke-linejoin="round"/></svg>
<svg style="position:absolute;left:876.6999999999999px;top:588.3px;" width="8" height="11" viewBox="0 0 8 11" fill="none"><path d="M1.5 .8l5 4.7-5 4.7" stroke="#b3b3b5" stroke-width="1.4" stroke-linecap="round" stroke-linejoin="round"/></svg>
<svg style="position:absolute;left:908.4000000000001px;top:589.9px;" width="8" height="9" viewBox="0 0 8 9" fill="none"><path d="M0.3 0.2 7.4 4.5 .3 8.8z" fill="#5b5b5d"/></svg>
<svg style="position:absolute;left:920.5px;top:586px;" width="16" height="15.5" viewBox="0 0 16 15.5" fill="none"><defs><linearGradient id="hd" x1="0" y1="0" x2="0" y2="1"><stop offset="0" stop-color="#d6dde2"/><stop offset="1" stop-color="#8b979f"/></linearGradient></defs><rect x=".4" y=".4" width="15.2" height="14.6" rx="2" fill="url(#hd)" stroke="#6a747b" stroke-width=".7"/><circle cx="8" cy="6.4" r="4.6" fill="none" stroke="#aab3ba" stroke-width=".8"/><rect x=".4" y="11.6" width="15.2" height="3.4" fill="#5b646b"/></svg>
<div class="t" style="top:595.14px;font-size:13.75px;color:#6f6d6d;left:942.80px;">Mac mini</div>
<svg style="position:absolute;left:1008.4000000000001px;top:589.9px;" width="8" height="9" viewBox="0 0 8 9" fill="none"><path d="M0.3 0.2 7.4 4.5 .3 8.8z" fill="#5b5b5d"/></svg>
<div class="t" style="top:595.14px;font-size:13.75px;color:#6f6d6d;left:1026.00px;">Library</div>
<svg style="position:absolute;left:1079.6000000000001px;top:589.9px;" width="8" height="9" viewBox="0 0 8 9" fill="none"><path d="M0.3 0.2 7.4 4.5 .3 8.8z" fill="#5b5b5d"/></svg>
<div class="t" style="top:595.14px;font-size:13.75px;color:#6f6d6d;left:1097.50px;">Application Support</div>
<svg style="position:absolute;left:1231.6000000000001px;top:589.9px;" width="8" height="9" viewBox="0 0 8 9" fill="none"><path d="M0.3 0.2 7.4 4.5 .3 8.8z" fill="#5b5b5d"/></svg>
<svg style="position:absolute;left:1423px;top:588px;" width="6" height="14" viewBox="0 0 6 14" fill="none"><circle cx="3" cy="2.20" r="1.25" fill="#3d3d3f"/><circle cx="3" cy="6.40" r="1.25" fill="#3d3d3f"/><circle cx="3" cy="10.60" r="1.25" fill="#3d3d3f"/></svg>
<div class="r" style="left:1054.5px;top:611px;width:1px;height:410px;background:#e6e6e6;"></div>
<div class="r" style="left:1255.5px;top:611px;width:11px;height:410px;background:#fafafa;border-left:1px solid #ececec;border-right:1px solid #ececec;box-sizing:border-box;"></div>
<div class="r" style="left:1258.4px;top:648.3px;width:5.4px;height:109px;background:#c1c1c1;border-radius:3px;"></div>
<div class="r" style="left:854.1px;top:644.5px;width:190.1px;height:22.4px;background:#dcdcdc;border-radius:5px;"></div>
<svg style="position:absolute;left:861.1px;top:626.1px;width:15px;height:13.5px;" width="15" height="13.5" viewBox="0 0 15 13.5" fill="none"><path d="M.4 1.6A1.2 1.2 0 0 1 1.6.4h3.8a1 1 0 0 1 .7.3l1.3 1.3h6A1.2 1.2 0 0 1 14.6 3.2v8.2H.4z" fill="#1f8ae3"/><rect x=".4" y="3.2" width="14.2" height="10" rx="1" fill="url(#fg)"/><path d="M7.5 5.2 5 11M7.5 5.2 10 11M4.6 9.4h5.8" stroke="#2f86cf" stroke-width=".9" opacity=".7"/></svg>
<div class="t" style="top:633.93px;font-size:13.2px;color:#232323;left:882.80px;">Applications</div>
<svg style="position:absolute;left:1032.2px;top:629.1px;" width="6" height="9" viewBox="0 0 6 9" fill="none"><path d="M1.2 1 4.8 4.5 1.2 8" stroke="#6e6e70" stroke-width="1.3" stroke-linecap="round" stroke-linejoin="round"/></svg>
<svg style="position:absolute;left:861.1px;top:648.83px;width:15px;height:13.5px;" width="15" height="13.5" viewBox="0 0 15 13.5" fill="none"><path d="M.4 1.6A1.2 1.2 0 0 1 1.6.4h3.8a1 1 0 0 1 .7.3l1.3 1.3h6A1.2 1.2 0 0 1 14.6 3.2v8.2H.4z" fill="#1f8ae3"/><rect x=".4" y="3.2" width="14.2" height="10" rx="1" fill="url(#fg)"/><path d="M4.5 11V7.5L7.5 5.5l3 2V11M4 11h7" stroke="#2f86cf" stroke-width=".9" opacity=".7"/></svg>
<div class="t" style="top:656.66px;font-size:13.2px;color:#232323;left:882.80px;">Library</div>
<svg style="position:absolute;left:1032.2px;top:651.83px;" width="6" height="9" viewBox="0 0 6 9" fill="none"><path d="M1.2 1 4.8 4.5 1.2 8" stroke="#6e6e70" stroke-width="1.3" stroke-linecap="round" stroke-linejoin="round"/></svg>
<svg style="position:absolute;left:861.1px;top:671.5600000000001px;width:15px;height:13.5px;" width="15" height="13.5" viewBox="0 0 15 13.5" fill="none"><path d="M.4 1.6A1.2 1.2 0 0 1 1.6.4h3.8a1 1 0 0 1 .7.3l1.3 1.3h6A1.2 1.2 0 0 1 14.6 3.2v8.2H.4z" fill="#1f8ae3"/><rect x=".4" y="3.2" width="14.2" height="10" rx="1" fill="url(#fg)"/><circle cx="7.5" cy="7.8" r="2.8" stroke="#2f86cf" stroke-width=".9" opacity=".7"/><circle cx="7.5" cy="7.2" r="1" fill="#2f86cf" opacity=".7"/></svg>
<div class="t" style="top:679.39px;font-size:13.2px;color:#232323;left:882.80px;">Users</div>
<svg style="position:absolute;left:1032.2px;top:674.5600000000001px;" width="6" height="9" viewBox="0 0 6 9" fill="none"><path d="M1.2 1 4.8 4.5 1.2 8" stroke="#6e6e70" stroke-width="1.3" stroke-linecap="round" stroke-linejoin="round"/></svg>
<svg style="position:absolute;left:861.1px;top:694.29px;width:15px;height:13.5px;" width="15" height="13.5" viewBox="0 0 15 13.5" fill="none"><path d="M.4 1.6A1.2 1.2 0 0 1 1.6.4h3.8a1 1 0 0 1 .7.3l1.3 1.3h6A1.2 1.2 0 0 1 14.6 3.2v8.2H.4z" fill="#1f8ae3"/><rect x=".4" y="3.2" width="14.2" height="10" rx="1" fill="url(#fg)"/><path d="M3.5 9.5h8" stroke="#2f86cf" stroke-width=".9" opacity=".6"/></svg>
<div class="t" style="top:702.12px;font-size:13.2px;color:#232323;left:882.80px;">System</div>
<svg style="position:absolute;left:1032.2px;top:697.29px;" width="6" height="9" viewBox="0 0 6 9" fill="none"><path d="M1.2 1 4.8 4.5 1.2 8" stroke="#6e6e70" stroke-width="1.3" stroke-linecap="round" stroke-linejoin="round"/></svg>
<div class="r" style="left:1055px;top:611px;width:200px;height:410px;overflow:hidden;"><div class="r" style="left:-1055px;top:-611px;width:1500px;height:1138px;">
<div class="r" style="left:1066.5px;top:747.2px;width:177.5px;height:22.4px;background:#dcdcdc;border-radius:5px;"></div>
<svg style="position:absolute;left:1073px;top:615.2px;width:15px;height:13.5px;" width="15" height="13.5" viewBox="0 0 15 13.5" fill="none"><path d="M.4 1.6A1.2 1.2 0 0 1 1.6.4h3.8a1 1 0 0 1 .7.3l1.3 1.3h6A1.2 1.2 0 0 1 14.6 3.2v8.2H.4z" fill="#1f8ae3"/><rect x=".4" y="3.2" width="14.2" height="10" rx="1" fill="url(#fg)"/></svg>
<div class="t" style="top:623.03px;font-size:13.2px;color:#232323;left:1094.20px;">Keyboard Layouts</div>
<svg style="position:absolute;left:1232.5px;top:618.2px;" width="6" height="9" viewBox="0 0 6 9" fill="none"><path d="M1.2 1 4.8 4.5 1.2 8" stroke="#6e6e70" stroke-width="1.3" stroke-linecap="round" stroke-linejoin="round"/></svg>
<svg style="position:absolute;left:1073px;top:637.9300000000001px;width:15px;height:13.5px;" width="15" height="13.5" viewBox="0 0 15 13.5" fill="none"><path d="M.4 1.6A1.2 1.2 0 0 1 1.6.4h3.8a1 1 0 0 1 .7.3l1.3 1.3h6A1.2 1.2 0 0 1 14.6 3.2v8.2H.4z" fill="#1f8ae3"/><rect x=".4" y="3.2" width="14.2" height="10" rx="1" fill="url(#fg)"/></svg>
<div class="t" style="top:645.76px;font-size:13.2px;color:#232323;left:1094.20px;">Updates</div>
<svg style="position:absolute;left:1232.5px;top:640.9300000000001px;" width="6" height="9" viewBox="0 0 6 9" fill="none"><path d="M1.2 1 4.8 4.5 1.2 8" stroke="#6e6e70" stroke-width="1.3" stroke-linecap="round" stroke-linejoin="round"/></svg>
<svg style="position:absolute;left:1073px;top:660.6600000000001px;width:15px;height:13.5px;" width="15" height="13.5" viewBox="0 0 15 13.5" fill="none"><path d="M.4 1.6A1.2 1.2 0 0 1 1.6.4h3.8a1 1 0 0 1 .7.3l1.3 1.3h6A1.2 1.2 0 0 1 14.6 3.2v8.2H.4z" fill="#1f8ae3"/><rect x=".4" y="3.2" width="14.2" height="10" rx="1" fill="url(#fg)"/></svg>
<div class="t" style="top:668.49px;font-size:13.2px;color:#232323;left:1094.20px;">SystemExtensions</div>
<svg style="position:absolute;left:1232.5px;top:663.6600000000001px;" width="6" height="9" viewBox="0 0 6 9" fill="none"><path d="M1.2 1 4.8 4.5 1.2 8" stroke="#6e6e70" stroke-width="1.3" stroke-linecap="round" stroke-linejoin="round"/></svg>
<svg style="position:absolute;left:1073px;top:683.3900000000001px;width:15px;height:13.5px;" width="15" height="13.5" viewBox="0 0 15 13.5" fill="none"><path d="M.4 1.6A1.2 1.2 0 0 1 1.6.4h3.8a1 1 0 0 1 .7.3l1.3 1.3h6A1.2 1.2 0 0 1 14.6 3.2v8.2H.4z" fill="#1f8ae3"/><rect x=".4" y="3.2" width="14.2" height="10" rx="1" fill="url(#fg)"/></svg>
<div class="t" style="top:691.22px;font-size:13.2px;color:#232323;left:1094.20px;">LaunchDaemons</div>
<svg style="position:absolute;left:1232.5px;top:686.3900000000001px;" width="6" height="9" viewBox="0 0 6 9" fill="none"><path d="M1.2 1 4.8 4.5 1.2 8" stroke="#6e6e70" stroke-width="1.3" stroke-linecap="round" stroke-linejoin="round"/></svg>
<svg style="position:absolute;left:1073px;top:706.12px;width:15px;height:13.5px;" width="15" height="13.5" viewBox="0 0 15 13.5" fill="none"><path d="M.4 1.6A1.2 1.2 0 0 1 1.6.4h3.8a1 1 0 0 1 .7.3l1.3 1.3h6A1.2 1.2 0 0 1 14.6 3.2v8.2H.4z" fill="#1f8ae3"/><rect x=".4" y="3.2" width="14.2" height="10" rx="1" fill="url(#fg)"/></svg>
<div class="t" style="top:713.95px;font-size:13.2px;color:#232323;left:1094.20px;">LaunchAgents</div>
<svg style="position:absolute;left:1232.5px;top:709.12px;" width="6" height="9" viewBox="0 0 6 9" fill="none"><path d="M1.2 1 4.8 4.5 1.2 8" stroke="#6e6e70" stroke-width="1.3" stroke-linecap="round" stroke-linejoin="round"/></svg>
<svg style="position:absolute;left:1073px;top:728.85px;width:15px;height:13.5px;" width="15" height="13.5" viewBox="0 0 15 13.5" fill="none"><path d="M.4 1.6A1.2 1.2 0 0 1 1.6.4h3.8a1 1 0 0 1 .7.3l1.3 1.3h6A1.2 1.2 0 0 1 14.6 3.2v8.2H.4z" fill="#1f8ae3"/><rect x=".4" y="3.2" width="14.2" height="10" rx="1" fill="url(#fg)"/></svg>
<div class="t" style="top:736.68px;font-size:13.2px;color:#232323;left:1094.20px;">Privilege...elperTools</div>
<svg style="position:absolute;left:1232.5px;top:731.85px;" width="6" height="9" viewBox="0 0 6 9" fill="none"><path d="M1.2 1 4.8 4.5 1.2 8" stroke="#6e6e70" stroke-width="1.3" stroke-linecap="round" stroke-linejoin="round"/></svg>
<svg style="position:absolute;left:1073px;top:751.58px;width:15px;height:13.5px;" width="15" height="13.5" viewBox="0 0 15 13.5" fill="none"><path d="M.4 1.6A1.2 1.2 0 0 1 1.6.4h3.8a1 1 0 0 1 .7.3l1.3 1.3h6A1.2 1.2 0 0 1 14.6 3.2v8.2H.4z" fill="#1f8ae3"/><rect x=".4" y="3.2" width="14.2" height="10" rx="1" fill="url(#fg)"/></svg>
<div class="t" style="top:759.41px;font-size:13.2px;color:#232323;left:1094.20px;">Application Support</div>
<svg style="position:absolute;left:1232.5px;top:754.58px;" width="6" height="9" viewBox="0 0 6 9" fill="none"><path d="M1.2 1 4.8 4.5 1.2 8" stroke="#6e6e70" stroke-width="1.3" stroke-linecap="round" stroke-linejoin="round"/></svg>
<svg style="position:absolute;left:1073px;top:774.3100000000001px;width:15px;height:13.5px;" width="15" height="13.5" viewBox="0 0 15 13.5" fill="none"><path d="M.4 1.6A1.2 1.2 0 0 1 1.6.4h3.8a1 1 0 0 1 .7.3l1.3 1.3h6A1.2 1.2 0 0 1 14.6 3.2v8.2H.4z" fill="#1f8ae3"/><rect x=".4" y="3.2" width="14.2" height="10" rx="1" fill="url(#fg)"/></svg>
<div class="t" style="top:782.14px;font-size:13.2px;color:#232323;left:1094.20px;">Catacomb</div>
<svg style="position:absolute;left:1232.5px;top:777.3100000000001px;" width="6" height="9" viewBox="0 0 6 9" fill="none"><path d="M1.2 1 4.8 4.5 1.2 8" stroke="#6e6e70" stroke-width="1.3" stroke-linecap="round" stroke-linejoin="round"/></svg>
<svg style="position:absolute;left:1073px;top:797.0400000000001px;width:15px;height:13.5px;" width="15" height="13.5" viewBox="0 0 15 13.5" fill="none"><path d="M.4 1.6A1.2 1.2 0 0 1 1.6.4h3.8a1 1 0 0 1 .7.3l1.3 1.3h6A1.2 1.2 0 0 1 14.6 3.2v8.2H.4z" fill="#1f8ae3"/><rect x=".4" y="3.2" width="14.2" height="10" rx="1" fill="url(#fg)"/></svg>
<div class="t" style="top:804.87px;font-size:13.2px;color:#232323;left:1094.20px;">Caches</div>
<svg style="position:absolute;left:1232.5px;top:800.0400000000001px;" width="6" height="9" viewBox="0 0 6 9" fill="none"><path d="M1.2 1 4.8 4.5 1.2 8" stroke="#6e6e70" stroke-width="1.3" stroke-linecap="round" stroke-linejoin="round"/></svg>
<svg style="position:absolute;left:1073px;top:819.77px;width:15px;height:13.5px;" width="15" height="13.5" viewBox="0 0 15 13.5" fill="none"><path d="M.4 1.6A1.2 1.2 0 0 1 1.6.4h3.8a1 1 0 0 1 .7.3l1.3 1.3h6A1.2 1.2 0 0 1 14.6 3.2v8.2H.4z" fill="#1f8ae3"/><rect x=".4" y="3.2" width="14.2" height="10" rx="1" fill="url(#fg)"/></svg>
<div class="t" style="top:827.60px;font-size:13.2px;color:#232323;left:1094.20px;">KernelCollections</div>
<svg style="position:absolute;left:1232.5px;top:822.77px;" width="6" height="9" viewBox="0 0 6 9" fill="none"><path d="M1.2 1 4.8 4.5 1.2 8" stroke="#6e6e70" stroke-width="1.3" stroke-linecap="round" stroke-linejoin="round"/></svg>
<svg style="position:absolute;left:1073px;top:842.5px;width:15px;height:13.5px;" width="15" height="13.5" viewBox="0 0 15 13.5" fill="none"><path d="M.4 1.6A1.2 1.2 0 0 1 1.6.4h3.8a1 1 0 0 1 .7.3l1.3 1.3h6A1.2 1.2 0 0 1 14.6 3.2v8.2H.4z" fill="#1f8ae3"/><rect x=".4" y="3.2" width="14.2" height="10" rx="1" fill="url(#fg)"/></svg>
<div class="t" style="top:850.33px;font-size:13.2px;color:#232323;left:1094.20px;">Filesystems</div>
<svg style="position:absolute;left:1232.5px;top:845.5px;" width="6" height="9" viewBox="0 0 6 9" fill="none"><path d="M1.2 1 4.8 4.5 1.2 8" stroke="#6e6e70" stroke-width="1.3" stroke-linecap="round" stroke-linejoin="round"/></svg>
<svg style="position:absolute;left:1073px;top:865.23px;width:15px;height:13.5px;" width="15" height="13.5" viewBox="0 0 15 13.5" fill="none"><path d="M.4 1.6A1.2 1.2 0 0 1 1.6.4h3.8a1 1 0 0 1 .7.3l1.3 1.3h6A1.2 1.2 0 0 1 14.6 3.2v8.2H.4z" fill="#1f8ae3"/><rect x=".4" y="3.2" width="14.2" height="10" rx="1" fill="url(#fg)"/></svg>
<div class="t" style="top:873.06px;font-size:13.2px;color:#232323;left:1094.20px;">Extensions</div>
<svg style="position:absolute;left:1232.5px;top:868.23px;" width="6" height="9" viewBox="0 0 6 9" fill="none"><path d="M1.2 1 4.8 4.5 1.2 8" stroke="#6e6e70" stroke-width="1.3" stroke-linecap="round" stroke-linejoin="round"/></svg>
<svg style="position:absolute;left:1073px;top:887.96px;width:15px;height:13.5px;" width="15" height="13.5" viewBox="0 0 15 13.5" fill="none"><path d="M.4 1.6A1.2 1.2 0 0 1 1.6.4h3.8a1 1 0 0 1 .7.3l1.3 1.3h6A1.2 1.2 0 0 1 14.6 3.2v8.2H.4z" fill="#1f8ae3"/><rect x=".4" y="3.2" width="14.2" height="10" rx="1" fill="url(#fg)"/></svg>
<div class="t" style="top:895.79px;font-size:13.2px;color:#232323;left:1094.20px;">StagedExtensions</div>
<svg style="position:absolute;left:1232.5px;top:890.96px;" width="6" height="9" viewBox="0 0 6 9" fill="none"><path d="M1.2 1 4.8 4.5 1.2 8" stroke="#6e6e70" stroke-width="1.3" stroke-linecap="round" stroke-linejoin="round"/></svg>
<svg style="position:absolute;left:1073px;top:910.69px;width:15px;height:13.5px;" width="15" height="13.5" viewBox="0 0 15 13.5" fill="none"><path d="M.4 1.6A1.2 1.2 0 0 1 1.6.4h3.8a1 1 0 0 1 .7.3l1.3 1.3h6A1.2 1.2 0 0 1 14.6 3.2v8.2H.4z" fill="#1f8ae3"/><rect x=".4" y="3.2" width="14.2" height="10" rx="1" fill="url(#fg)"/></svg>
<div class="t" style="top:918.52px;font-size:13.2px;color:#232323;left:1094.20px;">InstallerSandboxes</div>
<svg style="position:absolute;left:1232.5px;top:913.69px;" width="6" height="9" viewBox="0 0 6 9" fill="none"><path d="M1.2 1 4.8 4.5 1.2 8" stroke="#6e6e70" stroke-width="1.3" stroke-linecap="round" stroke-linejoin="round"/></svg>
<svg style="position:absolute;left:1073px;top:933.4200000000001px;width:15px;height:13.5px;" width="15" height="13.5" viewBox="0 0 15 13.5" fill="none"><path d="M.4 1.6A1.2 1.2 0 0 1 1.6.4h3.8a1 1 0 0 1 .7.3l1.3 1.3h6A1.2 1.2 0 0 1 14.6 3.2v8.2H.4z" fill="#1f8ae3"/><rect x=".4" y="3.2" width="14.2" height="10" rx="1" fill="url(#fg)"/></svg>
<div class="t" style="top:941.25px;font-size:13.2px;color:#232323;left:1094.20px;">Frameworks</div>
<svg style="position:absolute;left:1232.5px;top:936.4200000000001px;" width="6" height="9" viewBox="0 0 6 9" fill="none"><path d="M1.2 1 4.8 4.5 1.2 8" stroke="#6e6e70" stroke-width="1.3" stroke-linecap="round" stroke-linejoin="round"/></svg>
<svg style="position:absolute;left:1073px;top:956.1500000000001px;width:15px;height:13.5px;" width="15" height="13.5" viewBox="0 0 15 13.5" fill="none"><path d="M.4 1.6A1.2 1.2 0 0 1 1.6.4h3.8a1 1 0 0 1 .7.3l1.3 1.3h6A1.2 1.2 0 0 1 14.6 3.2v8.2H.4z" fill="#1f8ae3"/><rect x=".4" y="3.2" width="14.2" height="10" rx="1" fill="url(#fg)"/></svg>
<div class="t" style="top:963.98px;font-size:13.2px;color:#232323;left:1094.20px;">Image Capture</div>
<svg style="position:absolute;left:1232.5px;top:959.1500000000001px;" width="6" height="9" viewBox="0 0 6 9" fill="none"><path d="M1.2 1 4.8 4.5 1.2 8" stroke="#6e6e70" stroke-width="1.3" stroke-linecap="round" stroke-linejoin="round"/></svg>
<svg style="position:absolute;left:1073px;top:978.8800000000001px;width:15px;height:13.5px;" width="15" height="13.5" viewBox="0 0 15 13.5" fill="none"><path d="M.4 1.6A1.2 1.2 0 0 1 1.6.4h3.8a1 1 0 0 1 .7.3l1.3 1.3h6A1.2 1.2 0 0 1 14.6 3.2v8.2H.4z" fill="#1f8ae3"/><rect x=".4" y="3.2" width="14.2" height="10" rx="1" fill="url(#fg)"/></svg>
<div class="t" style="top:986.71px;font-size:13.2px;color:#232323;left:1094.20px;">Apple</div>
<svg style="position:absolute;left:1232.5px;top:981.8800000000001px;" width="6" height="9" viewBox="0 0 6 9" fill="none"><path d="M1.2 1 4.8 4.5 1.2 8" stroke="#6e6e70" stroke-width="1.3" stroke-linecap="round" stroke-linejoin="round"/></svg>
<svg style="position:absolute;left:1073px;top:1001.6100000000001px;width:15px;height:13.5px;" width="15" height="13.5" viewBox="0 0 15 13.5" fill="none"><path d="M.4 1.6A1.2 1.2 0 0 1 1.6.4h3.8a1 1 0 0 1 .7.3l1.3 1.3h6A1.2 1.2 0 0 1 14.6 3.2v8.2H.4z" fill="#1f8ae3"/><rect x=".4" y="3.2" width="14.2" height="10" rx="1" fill="url(#fg)"/></svg>
<div class="t" style="top:1009.44px;font-size:13.2px;color:#232323;left:1094.20px;">Audio</div>
<svg style="position:absolute;left:1232.5px;top:1004.6100000000001px;" width="6" height="9" viewBox="0 0 6 9" fill="none"><path d="M1.2 1 4.8 4.5 1.2 8" stroke="#6e6e70" stroke-width="1.3" stroke-linecap="round" stroke-linejoin="round"/></svg>
</div></div>
<div class="r" style="left:1267px;top:611px;width:175px;height:410px;overflow:hidden;"><div class="r" style="left:-1267px;top:-611px;width:1500px;height:1138px;">
<svg style="position:absolute;left:1284.7px;top:626.1px;width:15px;height:13.5px;" width="15" height="13.5" viewBox="0 0 15 13.5" fill="none"><path d="M.4 1.6A1.2 1.2 0 0 1 1.6.4h3.8a1 1 0 0 1 .7.3l1.3 1.3h6A1.2 1.2 0 0 1 14.6 3.2v8.2H.4z" fill="#1f8ae3"/><rect x=".4" y="3.2" width="14.2" height="10" rx="1" fill="url(#fg)"/></svg>
<div class="t" style="top:633.93px;font-size:13.2px;color:#232323;left:1305.50px;">com.apple.TCC</div>
<svg style="position:absolute;left:1284.7px;top:648.83px;width:15px;height:13.5px;" width="15" height="13.5" viewBox="0 0 15 13.5" fill="none"><path d="M.4 1.6A1.2 1.2 0 0 1 1.6.4h3.8a1 1 0 0 1 .7.3l1.3 1.3h6A1.2 1.2 0 0 1 14.6 3.2v8.2H.4z" fill="#1f8ae3"/><rect x=".4" y="3.2" width="14.2" height="10" rx="1" fill="url(#fg)"/></svg>
<div class="t" style="top:656.66px;font-size:13.2px;color:#232323;left:1305.50px;">org.pqrs</div>
<svg style="position:absolute;left:1284.7px;top:671.5600000000001px;width:15px;height:13.5px;" width="15" height="13.5" viewBox="0 0 15 13.5" fill="none"><path d="M.4 1.6A1.2 1.2 0 0 1 1.6.4h3.8a1 1 0 0 1 .7.3l1.3 1.3h6A1.2 1.2 0 0 1 14.6 3.2v8.2H.4z" fill="#1f8ae3"/><rect x=".4" y="3.2" width="14.2" height="10" rx="1" fill="url(#fg)"/></svg>
<div class="t" style="top:679.39px;font-size:13.2px;color:#232323;left:1305.50px;">iBoysoft MagicMenu</div>
<svg style="position:absolute;left:1284.7px;top:694.29px;width:15px;height:13.5px;" width="15" height="13.5" viewBox="0 0 15 13.5" fill="none"><path d="M.4 1.6A1.2 1.2 0 0 1 1.6.4h3.8a1 1 0 0 1 .7.3l1.3 1.3h6A1.2 1.2 0 0 1 14.6 3.2v8.2H.4z" fill="#1f8ae3"/><rect x=".4" y="3.2" width="14.2" height="10" rx="1" fill="url(#fg)"/></svg>
<div class="t" style="top:702.12px;font-size:13.2px;color:#232323;left:1305.50px;">Apple</div>
<svg style="position:absolute;left:1284.7px;top:717.02px;width:15px;height:13.5px;" width="15" height="13.5" viewBox="0 0 15 13.5" fill="none"><path d="M.4 1.6A1.2 1.2 0 0 1 1.6.4h3.8a1 1 0 0 1 .7.3l1.3 1.3h6A1.2 1.2 0 0 1 14.6 3.2v8.2H.4z" fill="#1f8ae3"/><rect x=".4" y="3.2" width="14.2" height="10" rx="1" fill="url(#fg)"/></svg>
<div class="t" style="top:724.85px;font-size:13.2px;color:#232323;left:1305.50px;">Jump Desktop</div>
<svg style="position:absolute;left:1284.7px;top:739.75px;width:15px;height:13.5px;" width="15" height="13.5" viewBox="0 0 15 13.5" fill="none"><path d="M.4 1.6A1.2 1.2 0 0 1 1.6.4h3.8a1 1 0 0 1 .7.3l1.3 1.3h6A1.2 1.2 0 0 1 14.6 3.2v8.2H.4z" fill="#1f8ae3"/><rect x=".4" y="3.2" width="14.2" height="10" rx="1" fill="url(#fg)"/></svg>
<div class="t" style="top:747.58px;font-size:13.2px;color:#232323;left:1305.50px;">App Store</div>
<svg style="position:absolute;left:1284.7px;top:762.48px;width:15px;height:13.5px;" width="15" height="13.5" viewBox="0 0 15 13.5" fill="none"><path d="M.4 1.6A1.2 1.2 0 0 1 1.6.4h3.8a1 1 0 0 1 .7.3l1.3 1.3h6A1.2 1.2 0 0 1 14.6 3.2v8.2H.4z" fill="#1f8ae3"/><rect x=".4" y="3.2" width="14.2" height="10" rx="1" fill="url(#fg)"/></svg>
<div class="t" style="top:770.31px;font-size:13.2px;color:#232323;left:1305.50px;">CrashReporter</div>
<svg style="position:absolute;left:1284.7px;top:785.21px;width:15px;height:13.5px;" width="15" height="13.5" viewBox="0 0 15 13.5" fill="none"><path d="M.4 1.6A1.2 1.2 0 0 1 1.6.4h3.8a1 1 0 0 1 .7.3l1.3 1.3h6A1.2 1.2 0 0 1 14.6 3.2v8.2H.4z" fill="#1f8ae3"/><rect x=".4" y="3.2" width="14.2" height="10" rx="1" fill="url(#fg)"/></svg>
<div class="t" style="top:793.04px;font-size:13.2px;color:#232323;left:1305.50px;">BTServer</div>
<svg style="position:absolute;left:1284.7px;top:807.94px;width:15px;height:13.5px;" width="15" height="13.5" viewBox="0 0 15 13.5" fill="none"><path d="M.4 1.6A1.2 1.2 0 0 1 1.6.4h3.8a1 1 0 0 1 .7.3l1.3 1.3h6A1.2 1.2 0 0 1 14.6 3.2v8.2H.4z" fill="#1f8ae3"/><rect x=".4" y="3.2" width="14.2" height="10" rx="1" fill="url(#fg)"/></svg>
<div class="t" style="top:815.77px;font-size:13.2px;color:#232323;left:1305.50px;">com.appl...ssets.user</div>
<svg style="position:absolute;left:1284.7px;top:830.6700000000001px;width:15px;height:13.5px;" width="15" height="13.5" viewBox="0 0 15 13.5" fill="none"><path d="M.4 1.6A1.2 1.2 0 0 1 1.6.4h3.8a1 1 0 0 1 .7.3l1.3 1.3h6A1.2 1.2 0 0 1 14.6 3.2v8.2H.4z" fill="#1f8ae3"/><rect x=".4" y="3.2" width="14.2" height="10" rx="1" fill="url(#fg)"/></svg>
<div class="t" style="top:838.50px;font-size:13.2px;color:#232323;left:1305.50px;">iLifeMediaBrowser</div>
<svg style="position:absolute;left:1284.7px;top:853.4000000000001px;width:15px;height:13.5px;" width="15" height="13.5" viewBox="0 0 15 13.5" fill="none"><path d="M.4 1.6A1.2 1.2 0 0 1 1.6.4h3.8a1 1 0 0 1 .7.3l1.3 1.3h6A1.2 1.2 0 0 1 14.6 3.2v8.2H.4z" fill="#1f8ae3"/><rect x=".4" y="3.2" width="14.2" height="10" rx="1" fill="url(#fg)"/></svg>
<div class="t" style="top:861.23px;font-size:13.2px;color:#232323;left:1305.50px;">ProApps</div>
<svg style="position:absolute;left:1284.7px;top:876.13px;width:15px;height:13.5px;" width="15" height="13.5" viewBox="0 0 15 13.5" fill="none"><path d="M.4 1.6A1.2 1.2 0 0 1 1.6.4h3.8a1 1 0 0 1 .7.3l1.3 1.3h6A1.2 1.2 0 0 1 14.6 3.2v8.2H.4z" fill="#1f8ae3"/><rect x=".4" y="3.2" width="14.2" height="10" rx="1" fill="url(#fg)"/></svg>
<div class="t" style="top:883.96px;font-size:13.2px;color:#232323;left:1305.50px;">Script Editor</div>
<svg style="position:absolute;left:1284.7px;top:898.86px;width:15px;height:13.5px;" width="15" height="13.5" viewBox="0 0 15 13.5" fill="none"><path d="M.4 1.6A1.2 1.2 0 0 1 1.6.4h3.8a1 1 0 0 1 .7.3l1.3 1.3h6A1.2 1.2 0 0 1 14.6 3.2v8.2H.4z" fill="#1f8ae3"/><rect x=".4" y="3.2" width="14.2" height="10" rx="1" fill="url(#fg)"/></svg>
<div class="t" style="top:906.69px;font-size:13.2px;color:#232323;left:1305.50px;">Google</div>
<svg style="position:absolute;left:1284.7px;top:921.59px;width:15px;height:13.5px;" width="15" height="13.5" viewBox="0 0 15 13.5" fill="none"><path d="M.4 1.6A1.2 1.2 0 0 1 1.6.4h3.8a1 1 0 0 1 .7.3l1.3 1.3h6A1.2 1.2 0 0 1 14.6 3.2v8.2H.4z" fill="#1f8ae3"/><rect x=".4" y="3.2" width="14.2" height="10" rx="1" fill="url(#fg)"/></svg>
<div class="t" style="top:929.42px;font-size:13.2px;color:#232323;left:1305.50px;">SubmitDiagInfo</div>
<svg style="position:absolute;left:1284.7px;top:944.32px;width:15px;height:13.5px;" width="15" height="13.5" viewBox="0 0 15 13.5" fill="none"><path d="M.4 1.6A1.2 1.2 0 0 1 1.6.4h3.8a1 1 0 0 1 .7.3l1.3 1.3h6A1.2 1.2 0 0 1 14.6 3.2v8.2H.4z" fill="#1f8ae3"/><rect x=".4" y="3.2" width="14.2" height="10" rx="1" fill="url(#fg)"/></svg>
<div class="t" style="top:952.15px;font-size:13.2px;color:#232323;left:1305.50px;">VirtualBox</div>
<svg style="position:absolute;left:1284.7px;top:967.05px;width:15px;height:13.5px;" width="15" height="13.5" viewBox="0 0 15 13.5" fill="none"><path d="M.4 1.6A1.2 1.2 0 0 1 1.6.4h3.8a1 1 0 0 1 .7.3l1.3 1.3h6A1.2 1.2 0 0 1 14.6 3.2v8.2H.4z" fill="#1f8ae3"/><rect x=".4" y="3.2" width="14.2" height="10" rx="1" fill="url(#fg)"/></svg>
<div class="t" style="top:974.88px;font-size:13.2px;color:#232323;left:1305.50px;">Mozilla</div>
<svg style="position:absolute;left:1284.7px;top:989.78px;width:15px;height:13.5px;" width="15" height="13.5" viewBox="0 0 15 13.5" fill="none"><path d="M.4 1.6A1.2 1.2 0 0 1 1.6.4h3.8a1 1 0 0 1 .7.3l1.3 1.3h6A1.2 1.2 0 0 1 14.6 3.2v8.2H.4z" fill="#1f8ae3"/><rect x=".4" y="3.2" width="14.2" height="10" rx="1" fill="url(#fg)"/></svg>
<div class="t" style="top:997.61px;font-size:13.2px;color:#232323;left:1305.50px;">livefsd</div>
<svg style="position:absolute;left:1284.7px;top:1012.51px;width:15px;height:13.5px;" width="15" height="13.5" viewBox="0 0 15 13.5" fill="none"><path d="M.4 1.6A1.2 1.2 0 0 1 1.6.4h3.8a1 1 0 0 1 .7.3l1.3 1.3h6A1.2 1.2 0 0 1 14.6 3.2v8.2H.4z" fill="#1f8ae3"/><rect x=".4" y="3.2" width="14.2" height="10" rx="1" fill="url(#fg)"/></svg>
<div class="t" style="top:1020.34px;font-size:13.2px;color:#232323;left:1305.50px;">Adobe</div>
</div></div>
<div class="r" style="left:843px;top:1021px;width:599px;height:15.5px;background:#fafafa;border-top:1px solid #ececec;box-sizing:border-box;"></div>
<div class="r" style="left:847px;top:1025.8px;width:556px;height:8.2px;background:#c1c1c1;border-radius:4px;"></div>
<div class="r" style="left:844px;top:1036.5px;width:598px;height:24.5px;background:#e9e3e0;border-bottom-right-radius:10px;"></div>
<svg style="position:absolute;left:854px;top:1042px;" width="17" height="14" viewBox="0 0 17 14" fill="none"><path d="M1.6 .8h4.3l1.8 1.6h7.4a1.3 1.3 0 0 1 1.3 1.3v8.2a1.3 1.3 0 0 1-1.3 1.3H1.6A1.3 1.3 0 0 1 .3 11.9V2.1A1.3 1.3 0 0 1 1.6.8zM.3 4.3h16" stroke="#4b4644" stroke-width="1.2" stroke-linejoin="round"/><path d="M12 7.3l.8 1.6 1.7.2-1.3 1.1.4 1.7-1.6-.9-1.6.9.4-1.7-1.3-1.1 1.7-.2z" fill="#4b4644"/></svg>
<svg style="position:absolute;left:883px;top:1042px;" width="11" height="14" viewBox="0 0 11 14" fill="none"><path d="M2.3 6.5V4.2a3.2 3.2 0 0 1 6.4 0v2.3" stroke="#4b4644" stroke-width="1.5"/><rect x=".3" y="6.3" width="10.4" height="7.2" rx="1" fill="#4b4644"/><rect x="4.7" y="9.2" width="1.6" height="3.2" fill="#e9e3e0"/></svg>
<svg style="position:absolute;left:905.4px;top:1042.5px;" width="17" height="13" viewBox="0 0 17 13" fill="none"><rect x=".9" y=".9" width="15.2" height="11.2" rx="1" stroke="#4b4644" stroke-width="1.2"/><circle cx="8.5" cy="6.5" r="1.7" fill="#4b4644"/></svg>
<svg style="position:absolute;left:930px;top:1041px;" width="19" height="15" viewBox="0 0 19 15" fill="none"><rect x=".6" y=".6" width="8.4" height="13.8" rx="1.2" stroke="#4b4644" stroke-width="1.2"/><rect x="9.8" y=".6" width="8.4" height="13.8" rx="1.2" stroke="#4b4644" stroke-width="1.2"/><path d="M3 3.4h3M3 5.4h3M3 7.4h3M12.2 3.4h3M12.2 5.4h3M12.2 7.4h3" stroke="#4b4644" stroke-width="1"/></svg>
<svg style="position:absolute;left:959.5px;top:1042px;" width="16" height="15" viewBox="0 0 16 15" fill="none"><path d="M2.2.7h11.6a1.5 1.5 0 0 1 1.5 1.5v7.3a1.5 1.5 0 0 1-1.5 1.5H7.5L4.7 14v-3H2.2A1.5 1.5 0 0 1 .7 9.5V2.2A1.5 1.5 0 0 1 2.2.7z" stroke="#4b4644" stroke-width="1.2" stroke-linejoin="round"/><path d="M4 4h8M4 6.2h8M4 8.4h5" stroke="#4b4644" stroke-width="1"/></svg>
<div class="t" style="top:1049.24px;font-size:12px;color:#3b3836;left:1068.00px;">20 items, 12,16 GB available</div>
<svg style="position:absolute;left:1385px;top:1041.5px;" width="17" height="14" viewBox="0 0 17 14" fill="none"><rect x=".7" y=".7" width="15.6" height="12.6" rx="1.6" stroke="#1f7bf2" stroke-width="1.3"/><path d="M11.3.7v12.6" stroke="#1f7bf2" stroke-width="1.2"/><rect x="13.1" y="3" width="1.5" height="4.4" fill="#1f7bf2"/></svg>
<svg style="position:absolute;left:1413.5px;top:1046px;" width="20" height="6" viewBox="0 0 20 6" fill="none"><circle cx="3.80" cy="3" r="2.1" fill="#4b4644"/><circle cx="9.90" cy="3" r="2.1" fill="#4b4644"/><circle cx="16.00" cy="3" r="2.1" fill="#4b4644"/></svg>
<div class="r" style="left:58px;top:40px;width:1384px;height:1021px;border-radius:10px;box-shadow:inset 0 0 0 1px rgba(255,255,255,.55);pointer-events:none;"></div>
</body></html>
